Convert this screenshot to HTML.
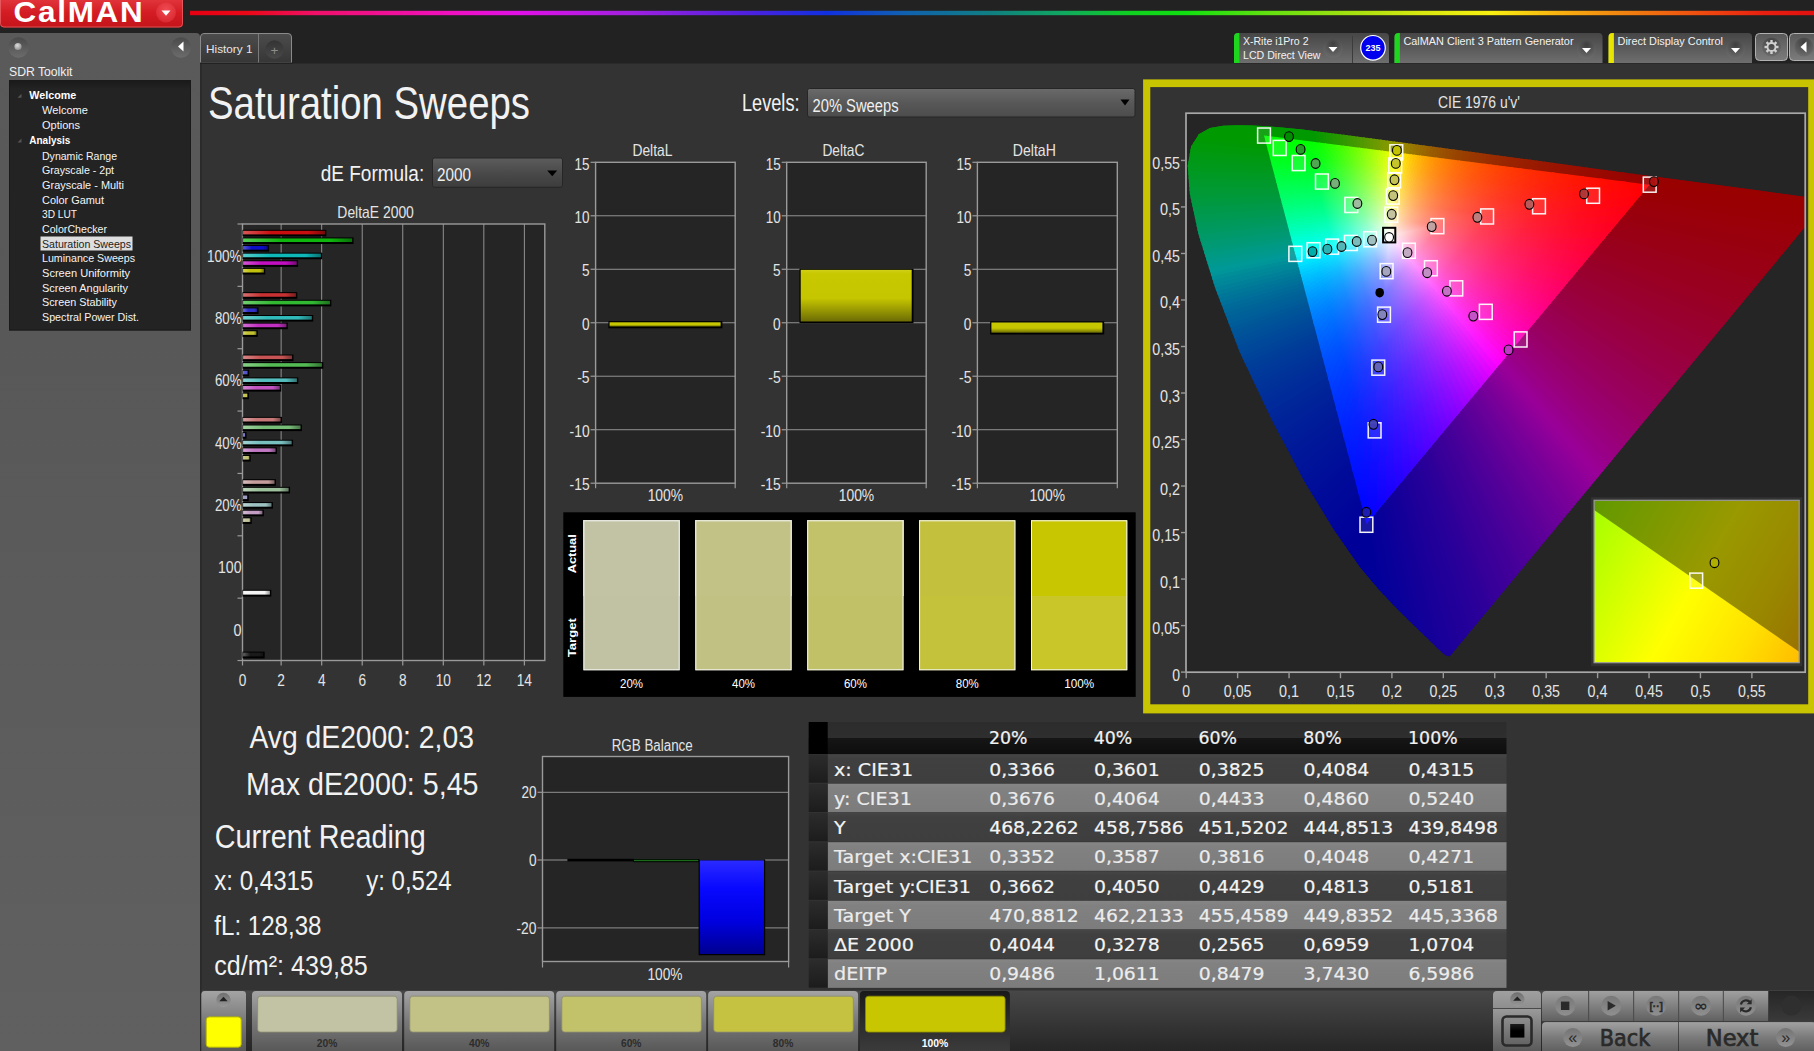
<!DOCTYPE html>
<html lang="en"><head><meta charset="utf-8"><title>CalMAN - Saturation Sweeps</title>
<style>
html,body{margin:0;padding:0;background:#333;overflow:hidden}
body{width:1814px;height:1051px}
svg{display:block;font-family:'Liberation Sans',sans-serif}
text{white-space:pre}
</style></head><body>
<svg width="1814" height="1051" viewBox="0 0 1814 1051">
<defs>
<linearGradient id="rb" x1="0" y1="0" x2="1" y2="0"><stop offset="0" stop-color="#e60012"/><stop offset="0.036" stop-color="#ea0818"/><stop offset="0.078" stop-color="#f0106a"/><stop offset="0.16" stop-color="#f010c0"/><stop offset="0.203" stop-color="#e010e8"/><stop offset="0.272" stop-color="#a020e0"/><stop offset="0.342" stop-color="#5020e0"/><stop offset="0.392" stop-color="#1030e0"/><stop offset="0.439" stop-color="#1060b0"/><stop offset="0.495" stop-color="#108080"/><stop offset="0.537" stop-color="#10a860"/><stop offset="0.579" stop-color="#10d020"/><stop offset="0.612" stop-color="#10e010"/><stop offset="0.662" stop-color="#60e010"/><stop offset="0.718" stop-color="#a8e010"/><stop offset="0.759" stop-color="#d8e810"/><stop offset="0.801" stop-color="#f8f010"/><stop offset="0.843" stop-color="#f8b010"/><stop offset="0.885" stop-color="#f08010"/><stop offset="0.927" stop-color="#f05010"/><stop offset="0.968" stop-color="#e82010"/><stop offset="1" stop-color="#e01010"/></linearGradient>
<linearGradient id="cm" x1="0" y1="0" x2="0" y2="1"><stop offset="0" stop-color="#e0343a"/><stop offset="0.45" stop-color="#d41c24"/><stop offset="1" stop-color="#c4141a"/></linearGradient>
<radialGradient id="cmc" cx="0.5" cy="0.35" r="0.7"><stop offset="0" stop-color="#f04a52"/><stop offset="1" stop-color="#d8262e"/></radialGradient>
<linearGradient id="sb" x1="0" y1="0" x2="0" y2="1"><stop offset="0" stop-color="#5a5a5a"/><stop offset="0.3" stop-color="#585858"/><stop offset="1" stop-color="#606060"/></linearGradient>
<linearGradient id="rbtn" x1="0" y1="0" x2="0" y2="1"><stop offset="0" stop-color="#4a4a4a"/><stop offset="1" stop-color="#6c6c6c"/></linearGradient>
<radialGradient id="orb" cx="0.4" cy="0.35" r="0.7"><stop offset="0" stop-color="#dddddd"/><stop offset="1" stop-color="#8a8a8a"/></radialGradient>
<linearGradient id="tbx" x1="0" y1="0" x2="0" y2="1"><stop offset="0" stop-color="#1a1a1a"/><stop offset="1" stop-color="#232323"/></linearGradient>
<linearGradient id="tab" x1="0" y1="0" x2="0" y2="1"><stop offset="0" stop-color="#4c4c4c"/><stop offset="1" stop-color="#363636"/></linearGradient>
<linearGradient id="plusc" x1="0" y1="0" x2="0" y2="1"><stop offset="0" stop-color="#343434"/><stop offset="1" stop-color="#484848"/></linearGradient>
<linearGradient id="dev" x1="0" y1="0" x2="0" y2="1"><stop offset="0" stop-color="#464646"/><stop offset="1" stop-color="#6e6e6e"/></linearGradient>
<radialGradient id="dd" cx="0.5" cy="0.25" r="0.8"><stop offset="0" stop-color="#3e3e3e"/><stop offset="1" stop-color="#707070"/></radialGradient>
<linearGradient id="gbtn" x1="0" y1="0" x2="0" y2="1"><stop offset="0" stop-color="#585858"/><stop offset="1" stop-color="#7c7c7c"/></linearGradient>
<linearGradient id="ddl" x1="0" y1="0" x2="0" y2="1"><stop offset="0" stop-color="#5c5c5c"/><stop offset="0.5" stop-color="#4a4a4a"/><stop offset="1" stop-color="#3c3c3c"/></linearGradient>
<linearGradient id="ddl2" x1="0" y1="0" x2="0" y2="1"><stop offset="0" stop-color="#6a6a6a"/><stop offset="0.5" stop-color="#585858"/><stop offset="1" stop-color="#4c4c4c"/></linearGradient>
<linearGradient id="hb1" x1="0" y1="0" x2="1" y2="0"><stop offset="0" stop-color="#d85656"/><stop offset="0.35" stop-color="#c80e0e"/><stop offset="0.8" stop-color="#c80e0e"/><stop offset="1" stop-color="#7c0909"/></linearGradient>
<linearGradient id="hb2" x1="0" y1="0" x2="1" y2="0"><stop offset="0" stop-color="#56cc56"/><stop offset="0.35" stop-color="#0eb60e"/><stop offset="0.8" stop-color="#0eb60e"/><stop offset="1" stop-color="#097109"/></linearGradient>
<linearGradient id="hb3" x1="0" y1="0" x2="1" y2="0"><stop offset="0" stop-color="#5656d8"/><stop offset="0.35" stop-color="#0e0ec8"/><stop offset="0.8" stop-color="#0e0ec8"/><stop offset="1" stop-color="#09097c"/></linearGradient>
<linearGradient id="hb4" x1="0" y1="0" x2="1" y2="0"><stop offset="0" stop-color="#56cdcd"/><stop offset="0.35" stop-color="#0eb8b8"/><stop offset="0.8" stop-color="#0eb8b8"/><stop offset="1" stop-color="#097272"/></linearGradient>
<linearGradient id="hb5" x1="0" y1="0" x2="1" y2="0"><stop offset="0" stop-color="#d356d3"/><stop offset="0.35" stop-color="#c00ec0"/><stop offset="0.8" stop-color="#c00ec0"/><stop offset="1" stop-color="#770977"/></linearGradient>
<linearGradient id="hb6" x1="0" y1="0" x2="1" y2="0"><stop offset="0" stop-color="#d4d456"/><stop offset="0.35" stop-color="#c2c20e"/><stop offset="0.8" stop-color="#c2c20e"/><stop offset="1" stop-color="#787809"/></linearGradient>
<linearGradient id="hb7" x1="0" y1="0" x2="1" y2="0"><stop offset="0" stop-color="#d86f6f"/><stop offset="0.35" stop-color="#c73131"/><stop offset="0.8" stop-color="#c73131"/><stop offset="1" stop-color="#7b1e1e"/></linearGradient>
<linearGradient id="hb8" x1="0" y1="0" x2="1" y2="0"><stop offset="0" stop-color="#6fce6f"/><stop offset="0.35" stop-color="#31b931"/><stop offset="0.8" stop-color="#31b931"/><stop offset="1" stop-color="#1e731e"/></linearGradient>
<linearGradient id="hb9" x1="0" y1="0" x2="1" y2="0"><stop offset="0" stop-color="#6f6fd8"/><stop offset="0.35" stop-color="#3131c7"/><stop offset="0.8" stop-color="#3131c7"/><stop offset="1" stop-color="#1e1e7b"/></linearGradient>
<linearGradient id="hb10" x1="0" y1="0" x2="1" y2="0"><stop offset="0" stop-color="#6fcfcf"/><stop offset="0.35" stop-color="#31baba"/><stop offset="0.8" stop-color="#31baba"/><stop offset="1" stop-color="#1e7373"/></linearGradient>
<linearGradient id="hb11" x1="0" y1="0" x2="1" y2="0"><stop offset="0" stop-color="#d46fd4"/><stop offset="0.35" stop-color="#c131c1"/><stop offset="0.8" stop-color="#c131c1"/><stop offset="1" stop-color="#781e78"/></linearGradient>
<linearGradient id="hb12" x1="0" y1="0" x2="1" y2="0"><stop offset="0" stop-color="#d4d46f"/><stop offset="0.35" stop-color="#c2c231"/><stop offset="0.8" stop-color="#c2c231"/><stop offset="1" stop-color="#78781e"/></linearGradient>
<linearGradient id="hb13" x1="0" y1="0" x2="1" y2="0"><stop offset="0" stop-color="#d78787"/><stop offset="0.35" stop-color="#c65454"/><stop offset="0.8" stop-color="#c65454"/><stop offset="1" stop-color="#7b3434"/></linearGradient>
<linearGradient id="hb14" x1="0" y1="0" x2="1" y2="0"><stop offset="0" stop-color="#87cf87"/><stop offset="0.35" stop-color="#54bb54"/><stop offset="0.8" stop-color="#54bb54"/><stop offset="1" stop-color="#347434"/></linearGradient>
<linearGradient id="hb15" x1="0" y1="0" x2="1" y2="0"><stop offset="0" stop-color="#8787d7"/><stop offset="0.35" stop-color="#5454c6"/><stop offset="0.8" stop-color="#5454c6"/><stop offset="1" stop-color="#34347b"/></linearGradient>
<linearGradient id="hb16" x1="0" y1="0" x2="1" y2="0"><stop offset="0" stop-color="#87d1d1"/><stop offset="0.35" stop-color="#54bdbd"/><stop offset="0.8" stop-color="#54bdbd"/><stop offset="1" stop-color="#347575"/></linearGradient>
<linearGradient id="hb17" x1="0" y1="0" x2="1" y2="0"><stop offset="0" stop-color="#d487d4"/><stop offset="0.35" stop-color="#c254c2"/><stop offset="0.8" stop-color="#c254c2"/><stop offset="1" stop-color="#783478"/></linearGradient>
<linearGradient id="hb18" x1="0" y1="0" x2="1" y2="0"><stop offset="0" stop-color="#d5d587"/><stop offset="0.35" stop-color="#c3c354"/><stop offset="0.8" stop-color="#c3c354"/><stop offset="1" stop-color="#797934"/></linearGradient>
<linearGradient id="hb19" x1="0" y1="0" x2="1" y2="0"><stop offset="0" stop-color="#d7a0a0"/><stop offset="0.35" stop-color="#c67878"/><stop offset="0.8" stop-color="#c67878"/><stop offset="1" stop-color="#7b4a4a"/></linearGradient>
<linearGradient id="hb20" x1="0" y1="0" x2="1" y2="0"><stop offset="0" stop-color="#a0d2a0"/><stop offset="0.35" stop-color="#78be78"/><stop offset="0.8" stop-color="#78be78"/><stop offset="1" stop-color="#4a764a"/></linearGradient>
<linearGradient id="hb21" x1="0" y1="0" x2="1" y2="0"><stop offset="0" stop-color="#a0a0d7"/><stop offset="0.35" stop-color="#7878c6"/><stop offset="0.8" stop-color="#7878c6"/><stop offset="1" stop-color="#4a4a7b"/></linearGradient>
<linearGradient id="hb22" x1="0" y1="0" x2="1" y2="0"><stop offset="0" stop-color="#a0d2d2"/><stop offset="0.35" stop-color="#78bfbf"/><stop offset="0.8" stop-color="#78bfbf"/><stop offset="1" stop-color="#4a7676"/></linearGradient>
<linearGradient id="hb23" x1="0" y1="0" x2="1" y2="0"><stop offset="0" stop-color="#d4a0d4"/><stop offset="0.35" stop-color="#c278c2"/><stop offset="0.8" stop-color="#c278c2"/><stop offset="1" stop-color="#784a78"/></linearGradient>
<linearGradient id="hb24" x1="0" y1="0" x2="1" y2="0"><stop offset="0" stop-color="#d5d5a0"/><stop offset="0.35" stop-color="#c3c378"/><stop offset="0.8" stop-color="#c3c378"/><stop offset="1" stop-color="#79794a"/></linearGradient>
<linearGradient id="hb25" x1="0" y1="0" x2="1" y2="0"><stop offset="0" stop-color="#d6baba"/><stop offset="0.35" stop-color="#c59d9d"/><stop offset="0.8" stop-color="#c59d9d"/><stop offset="1" stop-color="#7a6161"/></linearGradient>
<linearGradient id="hb26" x1="0" y1="0" x2="1" y2="0"><stop offset="0" stop-color="#bad4ba"/><stop offset="0.35" stop-color="#9dc19d"/><stop offset="0.8" stop-color="#9dc19d"/><stop offset="1" stop-color="#617861"/></linearGradient>
<linearGradient id="hb27" x1="0" y1="0" x2="1" y2="0"><stop offset="0" stop-color="#babad6"/><stop offset="0.35" stop-color="#9d9dc5"/><stop offset="0.8" stop-color="#9d9dc5"/><stop offset="1" stop-color="#61617a"/></linearGradient>
<linearGradient id="hb28" x1="0" y1="0" x2="1" y2="0"><stop offset="0" stop-color="#bad4d4"/><stop offset="0.35" stop-color="#9dc1c1"/><stop offset="0.8" stop-color="#9dc1c1"/><stop offset="1" stop-color="#617878"/></linearGradient>
<linearGradient id="hb29" x1="0" y1="0" x2="1" y2="0"><stop offset="0" stop-color="#d5bad5"/><stop offset="0.35" stop-color="#c39dc3"/><stop offset="0.8" stop-color="#c39dc3"/><stop offset="1" stop-color="#796179"/></linearGradient>
<linearGradient id="hb30" x1="0" y1="0" x2="1" y2="0"><stop offset="0" stop-color="#d6d6ba"/><stop offset="0.35" stop-color="#c4c49d"/><stop offset="0.8" stop-color="#c4c49d"/><stop offset="1" stop-color="#7a7a61"/></linearGradient>
<linearGradient id="hb31" x1="0" y1="0" x2="1" y2="0"><stop offset="0" stop-color="#f8f8f8"/><stop offset="0.35" stop-color="#f5f5f5"/><stop offset="0.8" stop-color="#f5f5f5"/><stop offset="1" stop-color="#989898"/></linearGradient>
<linearGradient id="hb32" x1="0" y1="0" x2="1" y2="0"><stop offset="0" stop-color="#5f5f5f"/><stop offset="0.35" stop-color="#1a1a1a"/><stop offset="0.8" stop-color="#1a1a1a"/><stop offset="1" stop-color="#101010"/></linearGradient>
<linearGradient id="ybar" x1="0" y1="0" x2="0" y2="1"><stop offset="0" stop-color="#d0d018"/><stop offset="0.08" stop-color="#c8c800"/><stop offset="0.55" stop-color="#c6c600"/><stop offset="1" stop-color="#6c6c06"/></linearGradient>
<linearGradient id="bbar" x1="0" y1="0" x2="0" y2="1"><stop offset="0" stop-color="#2a2aff"/><stop offset="0.3" stop-color="#0808ff"/><stop offset="0.65" stop-color="#0000e0"/><stop offset="1" stop-color="#000090"/></linearGradient>
<linearGradient id="thd" x1="0" y1="0" x2="0" y2="1"><stop offset="0" stop-color="#2c2c2c"/><stop offset="0.5" stop-color="#2e2e2e"/><stop offset="0.5" stop-color="#161616"/><stop offset="1" stop-color="#0e0e0e"/></linearGradient>
<linearGradient id="tlc" x1="0" y1="0" x2="0" y2="1"><stop offset="0" stop-color="#2c2c2c"/><stop offset="1" stop-color="#1c1c1c"/></linearGradient>
<linearGradient id="trd" x1="0" y1="0" x2="0" y2="1"><stop offset="0" stop-color="#464646"/><stop offset="0.15" stop-color="#404040"/><stop offset="1" stop-color="#3e3e3e"/></linearGradient>
<linearGradient id="trl" x1="0" y1="0" x2="0" y2="1"><stop offset="0" stop-color="#868686"/><stop offset="0.15" stop-color="#818181"/><stop offset="1" stop-color="#7c7c7c"/></linearGradient>
<clipPath id="hs"><polygon points="1450.3,655.7 1449.2,656.3 1445.6,655.4 1439.3,650.1 1427.6,638.5 1408.4,620.0 1395.3,607.1 1379.3,590.1 1360.0,567.0 1334.4,530.6 1304.2,481.0 1271.4,419.1 1239.8,352.3 1215.2,288.1 1198.4,234.0 1189.8,193.8 1187.7,165.8 1191.0,146.6 1198.8,134.3 1210.0,128.1 1223.2,125.8 1237.7,125.2 1252.4,125.5 1267.7,126.3 1284.2,127.7 1302.1,129.6 1343.7,134.7 1394.6,141.4 1456.0,149.7 1527.2,159.3 1601.2,169.4 1668.7,178.4 1721.3,185.6 1758.6,190.6 1785.9,194.3 1803.8,196.7 1814.5,198.2 1823.8,199.4 1827.4,199.9"/></clipPath>
<clipPath id="tri"><polygon points="1649.7,184.7 1264.0,135.5 1366.6,524.2"/></clipPath>
<clipPath id="plot"><rect x="1186.0" y="113.2" width="619.20" height="559.00"/></clipPath>
<clipPath id="hpG"><polygon points="3570.9,-2119.5 -554.5,2828.4 1749.6,4749.5 5875.1,-198.3"/></clipPath>
<clipPath id="hpR"><polygon points="905.2,-2824.1 1776.2,3496.1 -1195.7,3905.7 -2066.7,-2414.5"/></clipPath>
<clipPath id="hpB"><polygon points="4631.8,512.7 -1667.2,-180.2 -1339.2,-3162.3 4959.8,-2469.3"/></clipPath>
<linearGradient id="i0" gradientUnits="userSpaceOnUse" x1="1389.7" y1="235.4" x2="1614.0" y2="235.4"><stop offset="0.000" stop-color="#ffffff"/><stop offset="0.194" stop-color="#ff798e"/><stop offset="0.388" stop-color="#ff405e"/><stop offset="0.583" stop-color="#ff2144"/><stop offset="0.777" stop-color="#ff0e33"/><stop offset="0.971" stop-color="#ff0028"/></linearGradient>
<linearGradient id="i1" gradientUnits="userSpaceOnUse" x1="1389.7" y1="235.4" x2="1607.6" y2="243.0"><stop offset="0.000" stop-color="#ffffff"/><stop offset="0.194" stop-color="#ff7a93"/><stop offset="0.388" stop-color="#ff4164"/><stop offset="0.583" stop-color="#ff224b"/><stop offset="0.777" stop-color="#ff0e3a"/><stop offset="0.971" stop-color="#ff002f"/></linearGradient>
<linearGradient id="i2" gradientUnits="userSpaceOnUse" x1="1389.7" y1="235.4" x2="1601.6" y2="250.2"><stop offset="0.000" stop-color="#ffffff"/><stop offset="0.194" stop-color="#ff7c98"/><stop offset="0.388" stop-color="#ff436a"/><stop offset="0.583" stop-color="#ff2351"/><stop offset="0.777" stop-color="#ff0e41"/><stop offset="0.971" stop-color="#ff0036"/></linearGradient>
<linearGradient id="i3" gradientUnits="userSpaceOnUse" x1="1389.7" y1="235.4" x2="1595.9" y2="257.1"><stop offset="0.000" stop-color="#ffffff"/><stop offset="0.194" stop-color="#ff7d9c"/><stop offset="0.388" stop-color="#ff4471"/><stop offset="0.583" stop-color="#ff2358"/><stop offset="0.777" stop-color="#ff0f48"/><stop offset="0.971" stop-color="#ff003d"/></linearGradient>
<linearGradient id="i4" gradientUnits="userSpaceOnUse" x1="1389.7" y1="235.4" x2="1590.4" y2="263.6"><stop offset="0.000" stop-color="#ffffff"/><stop offset="0.194" stop-color="#ff7fa1"/><stop offset="0.388" stop-color="#ff4577"/><stop offset="0.583" stop-color="#ff245e"/><stop offset="0.777" stop-color="#ff0f4f"/><stop offset="0.971" stop-color="#ff0044"/></linearGradient>
<linearGradient id="i5" gradientUnits="userSpaceOnUse" x1="1389.7" y1="235.4" x2="1585.2" y2="269.9"><stop offset="0.000" stop-color="#ffffff"/><stop offset="0.194" stop-color="#ff80a6"/><stop offset="0.388" stop-color="#ff467c"/><stop offset="0.583" stop-color="#ff2565"/><stop offset="0.777" stop-color="#ff0f56"/><stop offset="0.971" stop-color="#ff004b"/></linearGradient>
<linearGradient id="i6" gradientUnits="userSpaceOnUse" x1="1389.7" y1="235.4" x2="1580.2" y2="275.9"><stop offset="0.000" stop-color="#ffffff"/><stop offset="0.194" stop-color="#ff82aa"/><stop offset="0.388" stop-color="#ff4782"/><stop offset="0.583" stop-color="#ff266b"/><stop offset="0.777" stop-color="#ff105c"/><stop offset="0.971" stop-color="#ff0052"/></linearGradient>
<linearGradient id="i7" gradientUnits="userSpaceOnUse" x1="1389.7" y1="235.4" x2="1575.4" y2="281.7"><stop offset="0.000" stop-color="#ffffff"/><stop offset="0.194" stop-color="#ff83af"/><stop offset="0.388" stop-color="#ff4988"/><stop offset="0.583" stop-color="#ff2672"/><stop offset="0.777" stop-color="#ff1063"/><stop offset="0.971" stop-color="#ff0059"/></linearGradient>
<linearGradient id="i8" gradientUnits="userSpaceOnUse" x1="1389.7" y1="235.4" x2="1570.7" y2="287.3"><stop offset="0.000" stop-color="#ffffff"/><stop offset="0.194" stop-color="#ff85b3"/><stop offset="0.388" stop-color="#ff4a8e"/><stop offset="0.583" stop-color="#ff2779"/><stop offset="0.777" stop-color="#ff106a"/><stop offset="0.971" stop-color="#ff0060"/></linearGradient>
<linearGradient id="i9" gradientUnits="userSpaceOnUse" x1="1389.7" y1="235.4" x2="1566.1" y2="292.8"><stop offset="0.000" stop-color="#ffffff"/><stop offset="0.194" stop-color="#ff86b7"/><stop offset="0.388" stop-color="#ff4b94"/><stop offset="0.583" stop-color="#ff287f"/><stop offset="0.777" stop-color="#ff1171"/><stop offset="0.971" stop-color="#ff0068"/></linearGradient>
<linearGradient id="i10" gradientUnits="userSpaceOnUse" x1="1389.7" y1="235.4" x2="1561.7" y2="298.1"><stop offset="0.000" stop-color="#ffffff"/><stop offset="0.194" stop-color="#ff88bc"/><stop offset="0.388" stop-color="#ff4c9a"/><stop offset="0.583" stop-color="#ff2986"/><stop offset="0.777" stop-color="#ff1179"/><stop offset="0.971" stop-color="#ff006f"/></linearGradient>
<linearGradient id="i11" gradientUnits="userSpaceOnUse" x1="1389.7" y1="235.4" x2="1557.4" y2="303.2"><stop offset="0.000" stop-color="#ffffff"/><stop offset="0.194" stop-color="#ff89c0"/><stop offset="0.388" stop-color="#ff4da0"/><stop offset="0.583" stop-color="#ff298d"/><stop offset="0.777" stop-color="#ff1180"/><stop offset="0.971" stop-color="#ff0077"/></linearGradient>
<linearGradient id="i12" gradientUnits="userSpaceOnUse" x1="1389.7" y1="235.4" x2="1553.2" y2="308.2"><stop offset="0.000" stop-color="#ffffff"/><stop offset="0.194" stop-color="#ff8ac4"/><stop offset="0.388" stop-color="#ff4fa6"/><stop offset="0.583" stop-color="#ff2a94"/><stop offset="0.777" stop-color="#ff1287"/><stop offset="0.971" stop-color="#ff007e"/></linearGradient>
<linearGradient id="i13" gradientUnits="userSpaceOnUse" x1="1389.7" y1="235.4" x2="1549.1" y2="313.2"><stop offset="0.000" stop-color="#ffffff"/><stop offset="0.194" stop-color="#ff8cc9"/><stop offset="0.388" stop-color="#ff50ac"/><stop offset="0.583" stop-color="#ff2b9b"/><stop offset="0.777" stop-color="#ff128f"/><stop offset="0.971" stop-color="#ff0086"/></linearGradient>
<linearGradient id="i14" gradientUnits="userSpaceOnUse" x1="1389.7" y1="235.4" x2="1545.1" y2="318.0"><stop offset="0.000" stop-color="#ffffff"/><stop offset="0.194" stop-color="#ff8dcd"/><stop offset="0.388" stop-color="#ff51b2"/><stop offset="0.583" stop-color="#ff2ca2"/><stop offset="0.777" stop-color="#ff1297"/><stop offset="0.971" stop-color="#ff008e"/></linearGradient>
<linearGradient id="i15" gradientUnits="userSpaceOnUse" x1="1389.7" y1="235.4" x2="1541.1" y2="322.8"><stop offset="0.000" stop-color="#ffffff"/><stop offset="0.194" stop-color="#ff8fd1"/><stop offset="0.388" stop-color="#ff52b8"/><stop offset="0.583" stop-color="#ff2da9"/><stop offset="0.777" stop-color="#ff139f"/><stop offset="0.971" stop-color="#ff0097"/></linearGradient>
<linearGradient id="i16" gradientUnits="userSpaceOnUse" x1="1389.7" y1="235.4" x2="1537.1" y2="327.6"><stop offset="0.000" stop-color="#ffffff"/><stop offset="0.194" stop-color="#ff90d6"/><stop offset="0.388" stop-color="#ff53bf"/><stop offset="0.583" stop-color="#ff2db1"/><stop offset="0.777" stop-color="#ff13a7"/><stop offset="0.971" stop-color="#ff00a0"/></linearGradient>
<linearGradient id="i17" gradientUnits="userSpaceOnUse" x1="1389.7" y1="235.4" x2="1533.2" y2="332.3"><stop offset="0.000" stop-color="#ffffff"/><stop offset="0.194" stop-color="#ff91da"/><stop offset="0.388" stop-color="#ff55c5"/><stop offset="0.583" stop-color="#ff2eb8"/><stop offset="0.777" stop-color="#ff14af"/><stop offset="0.971" stop-color="#ff00a9"/></linearGradient>
<linearGradient id="i18" gradientUnits="userSpaceOnUse" x1="1389.7" y1="235.4" x2="1529.3" y2="336.9"><stop offset="0.000" stop-color="#ffffff"/><stop offset="0.194" stop-color="#ff93de"/><stop offset="0.388" stop-color="#ff56cc"/><stop offset="0.583" stop-color="#ff2fc0"/><stop offset="0.777" stop-color="#ff14b8"/><stop offset="0.971" stop-color="#ff00b2"/></linearGradient>
<linearGradient id="i19" gradientUnits="userSpaceOnUse" x1="1389.7" y1="235.4" x2="1525.5" y2="341.5"><stop offset="0.000" stop-color="#ffffff"/><stop offset="0.194" stop-color="#ff94e3"/><stop offset="0.388" stop-color="#ff57d3"/><stop offset="0.583" stop-color="#ff30c9"/><stop offset="0.777" stop-color="#ff14c1"/><stop offset="0.971" stop-color="#ff00bc"/></linearGradient>
<linearGradient id="i20" gradientUnits="userSpaceOnUse" x1="1389.7" y1="235.4" x2="1521.6" y2="346.2"><stop offset="0.000" stop-color="#ffffff"/><stop offset="0.194" stop-color="#ff96e8"/><stop offset="0.388" stop-color="#ff59da"/><stop offset="0.583" stop-color="#ff31d1"/><stop offset="0.777" stop-color="#ff15cb"/><stop offset="0.971" stop-color="#ff00c6"/></linearGradient>
<linearGradient id="i21" gradientUnits="userSpaceOnUse" x1="1389.7" y1="235.4" x2="1517.8" y2="350.8"><stop offset="0.000" stop-color="#ffffff"/><stop offset="0.194" stop-color="#ff97ec"/><stop offset="0.388" stop-color="#ff5ae1"/><stop offset="0.583" stop-color="#ff32da"/><stop offset="0.777" stop-color="#ff15d5"/><stop offset="0.971" stop-color="#ff00d1"/></linearGradient>
<linearGradient id="i22" gradientUnits="userSpaceOnUse" x1="1389.7" y1="235.4" x2="1513.9" y2="355.4"><stop offset="0.000" stop-color="#ffffff"/><stop offset="0.194" stop-color="#ff99f1"/><stop offset="0.388" stop-color="#ff5ce9"/><stop offset="0.583" stop-color="#ff33e3"/><stop offset="0.777" stop-color="#ff16df"/><stop offset="0.971" stop-color="#ff00dc"/></linearGradient>
<linearGradient id="i23" gradientUnits="userSpaceOnUse" x1="1389.7" y1="235.4" x2="1510.0" y2="360.1"><stop offset="0.000" stop-color="#ffffff"/><stop offset="0.194" stop-color="#ff9bf6"/><stop offset="0.388" stop-color="#ff5df1"/><stop offset="0.583" stop-color="#ff34ed"/><stop offset="0.777" stop-color="#ff16ea"/><stop offset="0.971" stop-color="#ff00e8"/></linearGradient>
<linearGradient id="i24" gradientUnits="userSpaceOnUse" x1="1389.7" y1="235.4" x2="1506.1" y2="364.8"><stop offset="0.000" stop-color="#ffffff"/><stop offset="0.194" stop-color="#ff9cfb"/><stop offset="0.388" stop-color="#ff5ff9"/><stop offset="0.583" stop-color="#ff35f7"/><stop offset="0.777" stop-color="#ff17f6"/><stop offset="0.971" stop-color="#ff00f5"/></linearGradient>
<linearGradient id="i25" gradientUnits="userSpaceOnUse" x1="1389.7" y1="235.4" x2="1502.2" y2="369.5"><stop offset="0.000" stop-color="#ffffff"/><stop offset="0.194" stop-color="#fd9dff"/><stop offset="0.388" stop-color="#fd60ff"/><stop offset="0.583" stop-color="#fc36ff"/><stop offset="0.777" stop-color="#fc17ff"/><stop offset="0.971" stop-color="#fb00ff"/></linearGradient>
<linearGradient id="i26" gradientUnits="userSpaceOnUse" x1="1389.7" y1="235.4" x2="1498.2" y2="374.3"><stop offset="0.000" stop-color="#ffffff"/><stop offset="0.194" stop-color="#f89cff"/><stop offset="0.388" stop-color="#f45eff"/><stop offset="0.583" stop-color="#f135ff"/><stop offset="0.777" stop-color="#ef17ff"/><stop offset="0.971" stop-color="#ee00ff"/></linearGradient>
<linearGradient id="i27" gradientUnits="userSpaceOnUse" x1="1389.7" y1="235.4" x2="1494.1" y2="379.2"><stop offset="0.000" stop-color="#ffffff"/><stop offset="0.194" stop-color="#f39aff"/><stop offset="0.388" stop-color="#ec5dff"/><stop offset="0.583" stop-color="#e734ff"/><stop offset="0.777" stop-color="#e316ff"/><stop offset="0.971" stop-color="#e100ff"/></linearGradient>
<linearGradient id="i28" gradientUnits="userSpaceOnUse" x1="1389.7" y1="235.4" x2="1490.0" y2="384.1"><stop offset="0.000" stop-color="#ffffff"/><stop offset="0.194" stop-color="#ee99ff"/><stop offset="0.388" stop-color="#e35bff"/><stop offset="0.583" stop-color="#dd33ff"/><stop offset="0.777" stop-color="#d816ff"/><stop offset="0.971" stop-color="#d400ff"/></linearGradient>
<linearGradient id="i29" gradientUnits="userSpaceOnUse" x1="1389.7" y1="235.4" x2="1485.8" y2="389.2"><stop offset="0.000" stop-color="#ffffff"/><stop offset="0.194" stop-color="#e897ff"/><stop offset="0.388" stop-color="#db5aff"/><stop offset="0.583" stop-color="#d332ff"/><stop offset="0.777" stop-color="#cc15ff"/><stop offset="0.971" stop-color="#c800ff"/></linearGradient>
<linearGradient id="i30" gradientUnits="userSpaceOnUse" x1="1389.7" y1="235.4" x2="1481.4" y2="394.4"><stop offset="0.000" stop-color="#ffffff"/><stop offset="0.194" stop-color="#e396ff"/><stop offset="0.388" stop-color="#d359ff"/><stop offset="0.583" stop-color="#c931ff"/><stop offset="0.777" stop-color="#c115ff"/><stop offset="0.971" stop-color="#bc00ff"/></linearGradient>
<linearGradient id="i31" gradientUnits="userSpaceOnUse" x1="1389.7" y1="235.4" x2="1477.0" y2="399.7"><stop offset="0.000" stop-color="#ffffff"/><stop offset="0.194" stop-color="#de94ff"/><stop offset="0.388" stop-color="#cb57ff"/><stop offset="0.583" stop-color="#bf30ff"/><stop offset="0.777" stop-color="#b714ff"/><stop offset="0.971" stop-color="#b000ff"/></linearGradient>
<linearGradient id="i32" gradientUnits="userSpaceOnUse" x1="1389.7" y1="235.4" x2="1472.4" y2="405.1"><stop offset="0.000" stop-color="#ffffff"/><stop offset="0.194" stop-color="#d992ff"/><stop offset="0.388" stop-color="#c356ff"/><stop offset="0.583" stop-color="#b52fff"/><stop offset="0.777" stop-color="#ac14ff"/><stop offset="0.971" stop-color="#a500ff"/></linearGradient>
<linearGradient id="i33" gradientUnits="userSpaceOnUse" x1="1389.7" y1="235.4" x2="1467.7" y2="410.8"><stop offset="0.000" stop-color="#ffffff"/><stop offset="0.194" stop-color="#d391ff"/><stop offset="0.388" stop-color="#bb54ff"/><stop offset="0.583" stop-color="#ac2eff"/><stop offset="0.777" stop-color="#a113ff"/><stop offset="0.971" stop-color="#9a00ff"/></linearGradient>
<linearGradient id="i34" gradientUnits="userSpaceOnUse" x1="1389.7" y1="235.4" x2="1462.9" y2="416.6"><stop offset="0.000" stop-color="#ffffff"/><stop offset="0.194" stop-color="#ce8fff"/><stop offset="0.388" stop-color="#b353ff"/><stop offset="0.583" stop-color="#a22dff"/><stop offset="0.777" stop-color="#9713ff"/><stop offset="0.971" stop-color="#8f00ff"/></linearGradient>
<linearGradient id="i35" gradientUnits="userSpaceOnUse" x1="1389.7" y1="235.4" x2="1457.8" y2="422.7"><stop offset="0.000" stop-color="#ffffff"/><stop offset="0.194" stop-color="#c88eff"/><stop offset="0.388" stop-color="#ab51ff"/><stop offset="0.583" stop-color="#992cff"/><stop offset="0.777" stop-color="#8d12ff"/><stop offset="0.971" stop-color="#8400ff"/></linearGradient>
<linearGradient id="i36" gradientUnits="userSpaceOnUse" x1="1389.7" y1="235.4" x2="1452.6" y2="429.0"><stop offset="0.000" stop-color="#ffffff"/><stop offset="0.194" stop-color="#c38cff"/><stop offset="0.388" stop-color="#a350ff"/><stop offset="0.583" stop-color="#902bff"/><stop offset="0.777" stop-color="#8312ff"/><stop offset="0.971" stop-color="#7900ff"/></linearGradient>
<linearGradient id="i37" gradientUnits="userSpaceOnUse" x1="1389.7" y1="235.4" x2="1447.1" y2="435.6"><stop offset="0.000" stop-color="#ffffff"/><stop offset="0.194" stop-color="#bd8aff"/><stop offset="0.388" stop-color="#9b4fff"/><stop offset="0.583" stop-color="#862aff"/><stop offset="0.777" stop-color="#7812ff"/><stop offset="0.971" stop-color="#6e00ff"/></linearGradient>
<linearGradient id="i38" gradientUnits="userSpaceOnUse" x1="1389.7" y1="235.4" x2="1441.3" y2="442.5"><stop offset="0.000" stop-color="#ffffff"/><stop offset="0.194" stop-color="#b789ff"/><stop offset="0.388" stop-color="#934dff"/><stop offset="0.583" stop-color="#7d29ff"/><stop offset="0.777" stop-color="#6e11ff"/><stop offset="0.971" stop-color="#6400ff"/></linearGradient>
<linearGradient id="i39" gradientUnits="userSpaceOnUse" x1="1389.7" y1="235.4" x2="1435.2" y2="449.8"><stop offset="0.000" stop-color="#ffffff"/><stop offset="0.194" stop-color="#b187ff"/><stop offset="0.388" stop-color="#8a4cff"/><stop offset="0.583" stop-color="#7328ff"/><stop offset="0.777" stop-color="#6411ff"/><stop offset="0.971" stop-color="#5900ff"/></linearGradient>
<linearGradient id="i40" gradientUnits="userSpaceOnUse" x1="1389.7" y1="235.4" x2="1428.8" y2="457.5"><stop offset="0.000" stop-color="#ffffff"/><stop offset="0.194" stop-color="#ab85ff"/><stop offset="0.388" stop-color="#824aff"/><stop offset="0.583" stop-color="#6a27ff"/><stop offset="0.777" stop-color="#5a10ff"/><stop offset="0.971" stop-color="#4f00ff"/></linearGradient>
<linearGradient id="i41" gradientUnits="userSpaceOnUse" x1="1389.7" y1="235.4" x2="1422.0" y2="465.6"><stop offset="0.000" stop-color="#ffffff"/><stop offset="0.194" stop-color="#a483ff"/><stop offset="0.388" stop-color="#7949ff"/><stop offset="0.583" stop-color="#6026ff"/><stop offset="0.777" stop-color="#5010ff"/><stop offset="0.971" stop-color="#4400ff"/></linearGradient>
<linearGradient id="i42" gradientUnits="userSpaceOnUse" x1="1389.7" y1="235.4" x2="1414.8" y2="474.3"><stop offset="0.000" stop-color="#ffffff"/><stop offset="0.194" stop-color="#9e81ff"/><stop offset="0.388" stop-color="#7147ff"/><stop offset="0.583" stop-color="#5725ff"/><stop offset="0.777" stop-color="#460fff"/><stop offset="0.971" stop-color="#3a00ff"/></linearGradient>
<linearGradient id="i43" gradientUnits="userSpaceOnUse" x1="1389.7" y1="235.4" x2="1407.0" y2="483.6"><stop offset="0.000" stop-color="#ffffff"/><stop offset="0.194" stop-color="#977fff"/><stop offset="0.388" stop-color="#6845ff"/><stop offset="0.583" stop-color="#4d24ff"/><stop offset="0.777" stop-color="#3b0fff"/><stop offset="0.971" stop-color="#2f00ff"/></linearGradient>
<linearGradient id="i44" gradientUnits="userSpaceOnUse" x1="1389.7" y1="235.4" x2="1398.7" y2="493.6"><stop offset="0.000" stop-color="#ffffff"/><stop offset="0.194" stop-color="#907dff"/><stop offset="0.388" stop-color="#5e44ff"/><stop offset="0.583" stop-color="#4323ff"/><stop offset="0.777" stop-color="#310eff"/><stop offset="0.971" stop-color="#2400ff"/></linearGradient>
<linearGradient id="i45" gradientUnits="userSpaceOnUse" x1="1389.7" y1="235.4" x2="1389.7" y2="504.4"><stop offset="0.000" stop-color="#ffffff"/><stop offset="0.194" stop-color="#887bff"/><stop offset="0.388" stop-color="#5542ff"/><stop offset="0.583" stop-color="#3822ff"/><stop offset="0.777" stop-color="#260eff"/><stop offset="0.971" stop-color="#1900ff"/></linearGradient>
<linearGradient id="i46" gradientUnits="userSpaceOnUse" x1="1389.7" y1="235.4" x2="1379.9" y2="516.2"><stop offset="0.000" stop-color="#ffffff"/><stop offset="0.194" stop-color="#8079ff"/><stop offset="0.388" stop-color="#4b40ff"/><stop offset="0.583" stop-color="#2e21ff"/><stop offset="0.777" stop-color="#1b0eff"/><stop offset="0.971" stop-color="#0e00ff"/></linearGradient>
<linearGradient id="i47" gradientUnits="userSpaceOnUse" x1="1389.7" y1="235.4" x2="1369.1" y2="529.1"><stop offset="0.000" stop-color="#ffffff"/><stop offset="0.194" stop-color="#7876ff"/><stop offset="0.388" stop-color="#413eff"/><stop offset="0.583" stop-color="#2320ff"/><stop offset="0.777" stop-color="#100dff"/><stop offset="0.971" stop-color="#0300ff"/></linearGradient>
<linearGradient id="i48" gradientUnits="userSpaceOnUse" x1="1389.7" y1="235.4" x2="1360.6" y2="512.4"><stop offset="0.000" stop-color="#ffffff"/><stop offset="0.194" stop-color="#787cff"/><stop offset="0.388" stop-color="#3f45ff"/><stop offset="0.583" stop-color="#1f26ff"/><stop offset="0.777" stop-color="#0b13ff"/><stop offset="0.971" stop-color="#0006ff"/></linearGradient>
<linearGradient id="i49" gradientUnits="userSpaceOnUse" x1="1389.7" y1="235.4" x2="1354.1" y2="488.2"><stop offset="0.000" stop-color="#ffffff"/><stop offset="0.194" stop-color="#7b84ff"/><stop offset="0.388" stop-color="#404eff"/><stop offset="0.583" stop-color="#1f2fff"/><stop offset="0.777" stop-color="#091bff"/><stop offset="0.971" stop-color="#000dff"/></linearGradient>
<linearGradient id="i50" gradientUnits="userSpaceOnUse" x1="1389.7" y1="235.4" x2="1348.7" y2="467.6"><stop offset="0.000" stop-color="#ffffff"/><stop offset="0.194" stop-color="#7d8bff"/><stop offset="0.388" stop-color="#4156ff"/><stop offset="0.583" stop-color="#1e37ff"/><stop offset="0.777" stop-color="#0823ff"/><stop offset="0.971" stop-color="#0015ff"/></linearGradient>
<linearGradient id="i51" gradientUnits="userSpaceOnUse" x1="1389.7" y1="235.4" x2="1344.1" y2="450.0"><stop offset="0.000" stop-color="#ffffff"/><stop offset="0.194" stop-color="#7f92ff"/><stop offset="0.388" stop-color="#425eff"/><stop offset="0.583" stop-color="#1e3fff"/><stop offset="0.777" stop-color="#062aff"/><stop offset="0.971" stop-color="#001cff"/></linearGradient>
<linearGradient id="i52" gradientUnits="userSpaceOnUse" x1="1389.7" y1="235.4" x2="1340.0" y2="434.6"><stop offset="0.000" stop-color="#ffffff"/><stop offset="0.194" stop-color="#8198ff"/><stop offset="0.388" stop-color="#4365ff"/><stop offset="0.583" stop-color="#1d46ff"/><stop offset="0.777" stop-color="#0432ff"/><stop offset="0.971" stop-color="#0023ff"/></linearGradient>
<linearGradient id="i53" gradientUnits="userSpaceOnUse" x1="1389.7" y1="235.4" x2="1336.4" y2="421.1"><stop offset="0.000" stop-color="#ffffff"/><stop offset="0.194" stop-color="#839eff"/><stop offset="0.388" stop-color="#436cff"/><stop offset="0.583" stop-color="#1d4dff"/><stop offset="0.777" stop-color="#0239ff"/><stop offset="0.971" stop-color="#002aff"/></linearGradient>
<linearGradient id="i54" gradientUnits="userSpaceOnUse" x1="1389.7" y1="235.4" x2="1333.3" y2="409.0"><stop offset="0.000" stop-color="#ffffff"/><stop offset="0.194" stop-color="#85a3ff"/><stop offset="0.388" stop-color="#4472ff"/><stop offset="0.583" stop-color="#1c54ff"/><stop offset="0.777" stop-color="#013fff"/><stop offset="0.971" stop-color="#0030ff"/></linearGradient>
<linearGradient id="i55" gradientUnits="userSpaceOnUse" x1="1389.7" y1="235.4" x2="1330.4" y2="398.2"><stop offset="0.000" stop-color="#ffffff"/><stop offset="0.194" stop-color="#87a8ff"/><stop offset="0.388" stop-color="#4578ff"/><stop offset="0.583" stop-color="#1c5aff"/><stop offset="0.777" stop-color="#0046ff"/><stop offset="0.971" stop-color="#0037ff"/></linearGradient>
<linearGradient id="i56" gradientUnits="userSpaceOnUse" x1="1389.7" y1="235.4" x2="1327.8" y2="388.5"><stop offset="0.000" stop-color="#ffffff"/><stop offset="0.194" stop-color="#88adff"/><stop offset="0.388" stop-color="#467eff"/><stop offset="0.583" stop-color="#1b61ff"/><stop offset="0.777" stop-color="#004cff"/><stop offset="0.971" stop-color="#003dff"/></linearGradient>
<linearGradient id="i57" gradientUnits="userSpaceOnUse" x1="1389.7" y1="235.4" x2="1325.5" y2="379.6"><stop offset="0.000" stop-color="#ffffff"/><stop offset="0.194" stop-color="#8ab1ff"/><stop offset="0.388" stop-color="#4684ff"/><stop offset="0.583" stop-color="#1b67ff"/><stop offset="0.777" stop-color="#0052ff"/><stop offset="0.971" stop-color="#0043ff"/></linearGradient>
<linearGradient id="i58" gradientUnits="userSpaceOnUse" x1="1389.7" y1="235.4" x2="1323.3" y2="371.4"><stop offset="0.000" stop-color="#ffffff"/><stop offset="0.194" stop-color="#8bb5ff"/><stop offset="0.388" stop-color="#4789ff"/><stop offset="0.583" stop-color="#1a6dff"/><stop offset="0.777" stop-color="#0058ff"/><stop offset="0.971" stop-color="#0049ff"/></linearGradient>
<linearGradient id="i59" gradientUnits="userSpaceOnUse" x1="1389.7" y1="235.4" x2="1321.3" y2="363.9"><stop offset="0.000" stop-color="#ffffff"/><stop offset="0.194" stop-color="#8cb9ff"/><stop offset="0.388" stop-color="#488eff"/><stop offset="0.583" stop-color="#1a72ff"/><stop offset="0.777" stop-color="#005eff"/><stop offset="0.971" stop-color="#004fff"/></linearGradient>
<linearGradient id="i60" gradientUnits="userSpaceOnUse" x1="1389.7" y1="235.4" x2="1319.5" y2="356.9"><stop offset="0.000" stop-color="#ffffff"/><stop offset="0.194" stop-color="#8ebcff"/><stop offset="0.388" stop-color="#4894ff"/><stop offset="0.583" stop-color="#1978ff"/><stop offset="0.777" stop-color="#0064ff"/><stop offset="0.971" stop-color="#0055ff"/></linearGradient>
<linearGradient id="i61" gradientUnits="userSpaceOnUse" x1="1389.7" y1="235.4" x2="1317.8" y2="350.5"><stop offset="0.000" stop-color="#ffffff"/><stop offset="0.194" stop-color="#8fc0ff"/><stop offset="0.388" stop-color="#4998ff"/><stop offset="0.583" stop-color="#197dff"/><stop offset="0.777" stop-color="#006aff"/><stop offset="0.971" stop-color="#005bff"/></linearGradient>
<linearGradient id="i62" gradientUnits="userSpaceOnUse" x1="1389.7" y1="235.4" x2="1316.2" y2="344.4"><stop offset="0.000" stop-color="#ffffff"/><stop offset="0.194" stop-color="#90c3ff"/><stop offset="0.388" stop-color="#499dff"/><stop offset="0.583" stop-color="#1983ff"/><stop offset="0.777" stop-color="#006fff"/><stop offset="0.971" stop-color="#0061ff"/></linearGradient>
<linearGradient id="i63" gradientUnits="userSpaceOnUse" x1="1389.7" y1="235.4" x2="1314.7" y2="338.6"><stop offset="0.000" stop-color="#ffffff"/><stop offset="0.194" stop-color="#91c6ff"/><stop offset="0.388" stop-color="#4aa2ff"/><stop offset="0.583" stop-color="#1888ff"/><stop offset="0.777" stop-color="#0075ff"/><stop offset="0.971" stop-color="#0067ff"/></linearGradient>
<linearGradient id="i64" gradientUnits="userSpaceOnUse" x1="1389.7" y1="235.4" x2="1313.2" y2="333.2"><stop offset="0.000" stop-color="#ffffff"/><stop offset="0.194" stop-color="#92c9ff"/><stop offset="0.388" stop-color="#4ba6ff"/><stop offset="0.583" stop-color="#188dff"/><stop offset="0.777" stop-color="#007bff"/><stop offset="0.971" stop-color="#006cff"/></linearGradient>
<linearGradient id="i65" gradientUnits="userSpaceOnUse" x1="1389.7" y1="235.4" x2="1311.9" y2="328.1"><stop offset="0.000" stop-color="#ffffff"/><stop offset="0.194" stop-color="#93ccff"/><stop offset="0.388" stop-color="#4babff"/><stop offset="0.583" stop-color="#1792ff"/><stop offset="0.777" stop-color="#0080ff"/><stop offset="0.971" stop-color="#0072ff"/></linearGradient>
<linearGradient id="i66" gradientUnits="userSpaceOnUse" x1="1389.7" y1="235.4" x2="1310.6" y2="323.2"><stop offset="0.000" stop-color="#ffffff"/><stop offset="0.194" stop-color="#94cfff"/><stop offset="0.388" stop-color="#4cafff"/><stop offset="0.583" stop-color="#1798ff"/><stop offset="0.777" stop-color="#0086ff"/><stop offset="0.971" stop-color="#0078ff"/></linearGradient>
<linearGradient id="i67" gradientUnits="userSpaceOnUse" x1="1389.7" y1="235.4" x2="1309.4" y2="318.6"><stop offset="0.000" stop-color="#ffffff"/><stop offset="0.194" stop-color="#95d2ff"/><stop offset="0.388" stop-color="#4cb3ff"/><stop offset="0.583" stop-color="#179dff"/><stop offset="0.777" stop-color="#008bff"/><stop offset="0.971" stop-color="#007eff"/></linearGradient>
<linearGradient id="i68" gradientUnits="userSpaceOnUse" x1="1389.7" y1="235.4" x2="1308.2" y2="314.1"><stop offset="0.000" stop-color="#ffffff"/><stop offset="0.194" stop-color="#96d5ff"/><stop offset="0.388" stop-color="#4db7ff"/><stop offset="0.583" stop-color="#16a2ff"/><stop offset="0.777" stop-color="#0091ff"/><stop offset="0.971" stop-color="#0084ff"/></linearGradient>
<linearGradient id="i69" gradientUnits="userSpaceOnUse" x1="1389.7" y1="235.4" x2="1307.1" y2="309.8"><stop offset="0.000" stop-color="#ffffff"/><stop offset="0.194" stop-color="#97d8ff"/><stop offset="0.388" stop-color="#4dbcff"/><stop offset="0.583" stop-color="#16a7ff"/><stop offset="0.777" stop-color="#0097ff"/><stop offset="0.971" stop-color="#008aff"/></linearGradient>
<linearGradient id="i70" gradientUnits="userSpaceOnUse" x1="1389.7" y1="235.4" x2="1306.0" y2="305.7"><stop offset="0.000" stop-color="#ffffff"/><stop offset="0.194" stop-color="#98daff"/><stop offset="0.388" stop-color="#4ec0ff"/><stop offset="0.583" stop-color="#16acff"/><stop offset="0.777" stop-color="#009cff"/><stop offset="0.971" stop-color="#0090ff"/></linearGradient>
<linearGradient id="i71" gradientUnits="userSpaceOnUse" x1="1389.7" y1="235.4" x2="1304.9" y2="301.6"><stop offset="0.000" stop-color="#ffffff"/><stop offset="0.194" stop-color="#99ddff"/><stop offset="0.388" stop-color="#4ec4ff"/><stop offset="0.583" stop-color="#15b1ff"/><stop offset="0.777" stop-color="#00a2ff"/><stop offset="0.971" stop-color="#0096ff"/></linearGradient>
<linearGradient id="i72" gradientUnits="userSpaceOnUse" x1="1389.7" y1="235.4" x2="1303.9" y2="297.8"><stop offset="0.000" stop-color="#ffffff"/><stop offset="0.194" stop-color="#9adfff"/><stop offset="0.388" stop-color="#4fc8ff"/><stop offset="0.583" stop-color="#15b6ff"/><stop offset="0.777" stop-color="#00a8ff"/><stop offset="0.971" stop-color="#009cff"/></linearGradient>
<linearGradient id="i73" gradientUnits="userSpaceOnUse" x1="1389.7" y1="235.4" x2="1302.9" y2="294.0"><stop offset="0.000" stop-color="#ffffff"/><stop offset="0.194" stop-color="#9ae2ff"/><stop offset="0.388" stop-color="#4fccff"/><stop offset="0.583" stop-color="#14bbff"/><stop offset="0.777" stop-color="#00aeff"/><stop offset="0.971" stop-color="#00a3ff"/></linearGradient>
<linearGradient id="i74" gradientUnits="userSpaceOnUse" x1="1389.7" y1="235.4" x2="1301.9" y2="290.3"><stop offset="0.000" stop-color="#ffffff"/><stop offset="0.194" stop-color="#9be4ff"/><stop offset="0.388" stop-color="#50d0ff"/><stop offset="0.583" stop-color="#14c0ff"/><stop offset="0.777" stop-color="#00b4ff"/><stop offset="0.971" stop-color="#00a9ff"/></linearGradient>
<linearGradient id="i75" gradientUnits="userSpaceOnUse" x1="1389.7" y1="235.4" x2="1300.9" y2="286.6"><stop offset="0.000" stop-color="#ffffff"/><stop offset="0.194" stop-color="#9ce7ff"/><stop offset="0.388" stop-color="#50d4ff"/><stop offset="0.583" stop-color="#14c6ff"/><stop offset="0.777" stop-color="#00baff"/><stop offset="0.971" stop-color="#00b0ff"/></linearGradient>
<linearGradient id="i76" gradientUnits="userSpaceOnUse" x1="1389.7" y1="235.4" x2="1300.0" y2="283.1"><stop offset="0.000" stop-color="#ffffff"/><stop offset="0.194" stop-color="#9de9ff"/><stop offset="0.388" stop-color="#51d9ff"/><stop offset="0.583" stop-color="#13cbff"/><stop offset="0.777" stop-color="#00c0ff"/><stop offset="0.971" stop-color="#00b7ff"/></linearGradient>
<linearGradient id="i77" gradientUnits="userSpaceOnUse" x1="1389.7" y1="235.4" x2="1299.1" y2="279.6"><stop offset="0.000" stop-color="#ffffff"/><stop offset="0.194" stop-color="#9eecff"/><stop offset="0.388" stop-color="#51ddff"/><stop offset="0.583" stop-color="#13d1ff"/><stop offset="0.777" stop-color="#00c7ff"/><stop offset="0.971" stop-color="#00beff"/></linearGradient>
<linearGradient id="i78" gradientUnits="userSpaceOnUse" x1="1389.7" y1="235.4" x2="1298.2" y2="276.2"><stop offset="0.000" stop-color="#ffffff"/><stop offset="0.194" stop-color="#9feeff"/><stop offset="0.388" stop-color="#52e1ff"/><stop offset="0.583" stop-color="#13d6ff"/><stop offset="0.777" stop-color="#00cdff"/><stop offset="0.971" stop-color="#00c6ff"/></linearGradient>
<linearGradient id="i79" gradientUnits="userSpaceOnUse" x1="1389.7" y1="235.4" x2="1297.3" y2="272.8"><stop offset="0.000" stop-color="#ffffff"/><stop offset="0.194" stop-color="#a0f1ff"/><stop offset="0.388" stop-color="#52e5ff"/><stop offset="0.583" stop-color="#12dcff"/><stop offset="0.777" stop-color="#00d4ff"/><stop offset="0.971" stop-color="#00cdff"/></linearGradient>
<linearGradient id="i80" gradientUnits="userSpaceOnUse" x1="1389.7" y1="235.4" x2="1296.4" y2="269.4"><stop offset="0.000" stop-color="#ffffff"/><stop offset="0.194" stop-color="#a0f3ff"/><stop offset="0.388" stop-color="#53eaff"/><stop offset="0.583" stop-color="#12e2ff"/><stop offset="0.777" stop-color="#00dbff"/><stop offset="0.971" stop-color="#00d5ff"/></linearGradient>
<linearGradient id="i81" gradientUnits="userSpaceOnUse" x1="1389.7" y1="235.4" x2="1295.5" y2="266.0"><stop offset="0.000" stop-color="#ffffff"/><stop offset="0.194" stop-color="#a1f6ff"/><stop offset="0.388" stop-color="#53eeff"/><stop offset="0.583" stop-color="#11e8ff"/><stop offset="0.777" stop-color="#00e3ff"/><stop offset="0.971" stop-color="#00deff"/></linearGradient>
<linearGradient id="i82" gradientUnits="userSpaceOnUse" x1="1389.7" y1="235.4" x2="1294.6" y2="262.7"><stop offset="0.000" stop-color="#ffffff"/><stop offset="0.194" stop-color="#a2f8ff"/><stop offset="0.388" stop-color="#54f3ff"/><stop offset="0.583" stop-color="#11eeff"/><stop offset="0.777" stop-color="#00eaff"/><stop offset="0.971" stop-color="#00e7ff"/></linearGradient>
<linearGradient id="i83" gradientUnits="userSpaceOnUse" x1="1389.7" y1="235.4" x2="1293.7" y2="259.3"><stop offset="0.000" stop-color="#ffffff"/><stop offset="0.194" stop-color="#a3fbff"/><stop offset="0.388" stop-color="#54f8ff"/><stop offset="0.583" stop-color="#10f5ff"/><stop offset="0.777" stop-color="#00f2ff"/><stop offset="0.971" stop-color="#00f0ff"/></linearGradient>
<linearGradient id="i84" gradientUnits="userSpaceOnUse" x1="1389.7" y1="235.4" x2="1292.9" y2="256.0"><stop offset="0.000" stop-color="#ffffff"/><stop offset="0.194" stop-color="#a4feff"/><stop offset="0.388" stop-color="#55fdff"/><stop offset="0.583" stop-color="#10fcff"/><stop offset="0.777" stop-color="#00fbff"/><stop offset="0.971" stop-color="#00faff"/></linearGradient>
<linearGradient id="i85" gradientUnits="userSpaceOnUse" x1="1389.7" y1="235.4" x2="1292.0" y2="252.6"><stop offset="0.000" stop-color="#ffffff"/><stop offset="0.194" stop-color="#a4fffe"/><stop offset="0.388" stop-color="#55fffc"/><stop offset="0.583" stop-color="#0ffffb"/><stop offset="0.777" stop-color="#00fffa"/><stop offset="0.971" stop-color="#00fffa"/></linearGradient>
<linearGradient id="i86" gradientUnits="userSpaceOnUse" x1="1389.7" y1="235.4" x2="1291.1" y2="249.3"><stop offset="0.000" stop-color="#ffffff"/><stop offset="0.194" stop-color="#a3fffb"/><stop offset="0.388" stop-color="#54fff7"/><stop offset="0.583" stop-color="#0efff4"/><stop offset="0.777" stop-color="#00fff2"/><stop offset="0.971" stop-color="#00ffef"/></linearGradient>
<linearGradient id="i87" gradientUnits="userSpaceOnUse" x1="1389.7" y1="235.4" x2="1290.2" y2="245.9"><stop offset="0.000" stop-color="#ffffff"/><stop offset="0.194" stop-color="#a2fff8"/><stop offset="0.388" stop-color="#53fff3"/><stop offset="0.583" stop-color="#0dffed"/><stop offset="0.777" stop-color="#00ffe9"/><stop offset="0.971" stop-color="#00ffe5"/></linearGradient>
<linearGradient id="i88" gradientUnits="userSpaceOnUse" x1="1389.7" y1="235.4" x2="1289.3" y2="242.4"><stop offset="0.000" stop-color="#ffffff"/><stop offset="0.194" stop-color="#a1fff6"/><stop offset="0.388" stop-color="#51ffee"/><stop offset="0.583" stop-color="#0cffe7"/><stop offset="0.777" stop-color="#00ffe0"/><stop offset="0.971" stop-color="#00ffdb"/></linearGradient>
<linearGradient id="i89" gradientUnits="userSpaceOnUse" x1="1389.7" y1="235.4" x2="1288.4" y2="239.0"><stop offset="0.000" stop-color="#ffffff"/><stop offset="0.194" stop-color="#a1fff3"/><stop offset="0.388" stop-color="#50ffe9"/><stop offset="0.583" stop-color="#0bffe0"/><stop offset="0.777" stop-color="#00ffd8"/><stop offset="0.971" stop-color="#00ffd1"/></linearGradient>
<linearGradient id="i90" gradientUnits="userSpaceOnUse" x1="1389.7" y1="235.4" x2="1287.4" y2="235.4"><stop offset="0.000" stop-color="#ffffff"/><stop offset="0.194" stop-color="#a0fff0"/><stop offset="0.388" stop-color="#4fffe4"/><stop offset="0.583" stop-color="#0affd9"/><stop offset="0.777" stop-color="#00ffcf"/><stop offset="0.971" stop-color="#00ffc7"/></linearGradient>
<linearGradient id="i91" gradientUnits="userSpaceOnUse" x1="1389.7" y1="235.4" x2="1286.5" y2="231.8"><stop offset="0.000" stop-color="#ffffff"/><stop offset="0.194" stop-color="#9fffed"/><stop offset="0.388" stop-color="#4effdf"/><stop offset="0.583" stop-color="#09ffd2"/><stop offset="0.777" stop-color="#00ffc7"/><stop offset="0.971" stop-color="#00ffbd"/></linearGradient>
<linearGradient id="i92" gradientUnits="userSpaceOnUse" x1="1389.7" y1="235.4" x2="1285.5" y2="228.1"><stop offset="0.000" stop-color="#ffffff"/><stop offset="0.194" stop-color="#9effeb"/><stop offset="0.388" stop-color="#4dffda"/><stop offset="0.583" stop-color="#09ffcb"/><stop offset="0.777" stop-color="#00ffbf"/><stop offset="0.971" stop-color="#00ffb4"/></linearGradient>
<linearGradient id="i93" gradientUnits="userSpaceOnUse" x1="1389.7" y1="235.4" x2="1284.5" y2="224.4"><stop offset="0.000" stop-color="#ffffff"/><stop offset="0.194" stop-color="#9dffe8"/><stop offset="0.388" stop-color="#4cffd4"/><stop offset="0.583" stop-color="#08ffc4"/><stop offset="0.777" stop-color="#00ffb6"/><stop offset="0.971" stop-color="#00ffaa"/></linearGradient>
<linearGradient id="i94" gradientUnits="userSpaceOnUse" x1="1389.7" y1="235.4" x2="1283.5" y2="220.5"><stop offset="0.000" stop-color="#ffffff"/><stop offset="0.194" stop-color="#9cffe5"/><stop offset="0.388" stop-color="#4bffcf"/><stop offset="0.583" stop-color="#07ffbd"/><stop offset="0.777" stop-color="#00ffae"/><stop offset="0.971" stop-color="#00ffa0"/></linearGradient>
<linearGradient id="i95" gradientUnits="userSpaceOnUse" x1="1389.7" y1="235.4" x2="1282.4" y2="216.5"><stop offset="0.000" stop-color="#ffffff"/><stop offset="0.194" stop-color="#9bffe2"/><stop offset="0.388" stop-color="#4affca"/><stop offset="0.583" stop-color="#06ffb6"/><stop offset="0.777" stop-color="#00ffa5"/><stop offset="0.971" stop-color="#00ff96"/></linearGradient>
<linearGradient id="i96" gradientUnits="userSpaceOnUse" x1="1389.7" y1="235.4" x2="1281.3" y2="212.4"><stop offset="0.000" stop-color="#ffffff"/><stop offset="0.194" stop-color="#9bffdf"/><stop offset="0.388" stop-color="#49ffc5"/><stop offset="0.583" stop-color="#05ffaf"/><stop offset="0.777" stop-color="#00ff9c"/><stop offset="0.971" stop-color="#00ff8d"/></linearGradient>
<linearGradient id="i97" gradientUnits="userSpaceOnUse" x1="1389.7" y1="235.4" x2="1280.2" y2="208.1"><stop offset="0.000" stop-color="#ffffff"/><stop offset="0.194" stop-color="#9affdc"/><stop offset="0.388" stop-color="#48ffbf"/><stop offset="0.583" stop-color="#04ffa7"/><stop offset="0.777" stop-color="#00ff93"/><stop offset="0.971" stop-color="#00ff83"/></linearGradient>
<linearGradient id="i98" gradientUnits="userSpaceOnUse" x1="1389.7" y1="235.4" x2="1279.0" y2="203.7"><stop offset="0.000" stop-color="#ffffff"/><stop offset="0.194" stop-color="#99ffd8"/><stop offset="0.388" stop-color="#46ffb9"/><stop offset="0.583" stop-color="#03ffa0"/><stop offset="0.777" stop-color="#00ff8b"/><stop offset="0.971" stop-color="#00ff78"/></linearGradient>
<linearGradient id="i99" gradientUnits="userSpaceOnUse" x1="1389.7" y1="235.4" x2="1277.8" y2="199.1"><stop offset="0.000" stop-color="#ffffff"/><stop offset="0.194" stop-color="#98ffd5"/><stop offset="0.388" stop-color="#45ffb4"/><stop offset="0.583" stop-color="#02ff98"/><stop offset="0.777" stop-color="#00ff81"/><stop offset="0.971" stop-color="#00ff6e"/></linearGradient>
<linearGradient id="i100" gradientUnits="userSpaceOnUse" x1="1389.7" y1="235.4" x2="1276.6" y2="194.3"><stop offset="0.000" stop-color="#ffffff"/><stop offset="0.194" stop-color="#97ffd2"/><stop offset="0.388" stop-color="#44ffae"/><stop offset="0.583" stop-color="#01ff90"/><stop offset="0.777" stop-color="#00ff78"/><stop offset="0.971" stop-color="#00ff64"/></linearGradient>
<linearGradient id="i101" gradientUnits="userSpaceOnUse" x1="1389.7" y1="235.4" x2="1275.2" y2="189.2"><stop offset="0.000" stop-color="#ffffff"/><stop offset="0.194" stop-color="#95ffce"/><stop offset="0.388" stop-color="#42ffa7"/><stop offset="0.583" stop-color="#00ff88"/><stop offset="0.777" stop-color="#00ff6f"/><stop offset="0.971" stop-color="#00ff59"/></linearGradient>
<linearGradient id="i102" gradientUnits="userSpaceOnUse" x1="1389.7" y1="235.4" x2="1273.8" y2="183.8"><stop offset="0.000" stop-color="#ffffff"/><stop offset="0.194" stop-color="#94ffca"/><stop offset="0.388" stop-color="#41ffa1"/><stop offset="0.583" stop-color="#00ff80"/><stop offset="0.777" stop-color="#00ff65"/><stop offset="0.971" stop-color="#00ff4e"/></linearGradient>
<linearGradient id="i103" gradientUnits="userSpaceOnUse" x1="1389.7" y1="235.4" x2="1272.3" y2="178.2"><stop offset="0.000" stop-color="#ffffff"/><stop offset="0.194" stop-color="#93ffc6"/><stop offset="0.388" stop-color="#40ff9a"/><stop offset="0.583" stop-color="#00ff77"/><stop offset="0.777" stop-color="#00ff5b"/><stop offset="0.971" stop-color="#00ff43"/></linearGradient>
<linearGradient id="i104" gradientUnits="userSpaceOnUse" x1="1389.7" y1="235.4" x2="1270.7" y2="172.2"><stop offset="0.000" stop-color="#ffffff"/><stop offset="0.194" stop-color="#92ffc2"/><stop offset="0.388" stop-color="#3eff93"/><stop offset="0.583" stop-color="#00ff6e"/><stop offset="0.777" stop-color="#00ff51"/><stop offset="0.971" stop-color="#00ff38"/></linearGradient>
<linearGradient id="i105" gradientUnits="userSpaceOnUse" x1="1389.7" y1="235.4" x2="1269.0" y2="165.8"><stop offset="0.000" stop-color="#ffffff"/><stop offset="0.194" stop-color="#90ffbe"/><stop offset="0.388" stop-color="#3dff8c"/><stop offset="0.583" stop-color="#00ff65"/><stop offset="0.777" stop-color="#00ff46"/><stop offset="0.971" stop-color="#00ff2c"/></linearGradient>
<linearGradient id="i106" gradientUnits="userSpaceOnUse" x1="1389.7" y1="235.4" x2="1267.2" y2="158.9"><stop offset="0.000" stop-color="#ffffff"/><stop offset="0.194" stop-color="#8fffb9"/><stop offset="0.388" stop-color="#3bff84"/><stop offset="0.583" stop-color="#00ff5b"/><stop offset="0.777" stop-color="#00ff3b"/><stop offset="0.971" stop-color="#00ff20"/></linearGradient>
<linearGradient id="i107" gradientUnits="userSpaceOnUse" x1="1389.7" y1="235.4" x2="1265.3" y2="151.5"><stop offset="0.000" stop-color="#ffffff"/><stop offset="0.194" stop-color="#8effb4"/><stop offset="0.388" stop-color="#39ff7c"/><stop offset="0.583" stop-color="#00ff51"/><stop offset="0.777" stop-color="#00ff2f"/><stop offset="0.971" stop-color="#00ff13"/></linearGradient>
<linearGradient id="i108" gradientUnits="userSpaceOnUse" x1="1389.7" y1="235.4" x2="1263.2" y2="143.5"><stop offset="0.000" stop-color="#ffffff"/><stop offset="0.194" stop-color="#8cffaf"/><stop offset="0.388" stop-color="#37ff74"/><stop offset="0.583" stop-color="#00ff47"/><stop offset="0.777" stop-color="#00ff23"/><stop offset="0.971" stop-color="#00ff06"/></linearGradient>
<linearGradient id="i109" gradientUnits="userSpaceOnUse" x1="1389.7" y1="235.4" x2="1260.9" y2="134.8"><stop offset="0.000" stop-color="#ffffff"/><stop offset="0.194" stop-color="#8affa9"/><stop offset="0.388" stop-color="#36ff6b"/><stop offset="0.583" stop-color="#00ff3b"/><stop offset="0.777" stop-color="#00ff16"/><stop offset="0.971" stop-color="#00ff00"/></linearGradient>
<linearGradient id="i110" gradientUnits="userSpaceOnUse" x1="1389.7" y1="235.4" x2="1268.3" y2="133.6"><stop offset="0.000" stop-color="#ffffff"/><stop offset="0.194" stop-color="#90ffa9"/><stop offset="0.388" stop-color="#3fff6a"/><stop offset="0.583" stop-color="#01ff3a"/><stop offset="0.777" stop-color="#00ff14"/><stop offset="0.971" stop-color="#00ff00"/></linearGradient>
<linearGradient id="i111" gradientUnits="userSpaceOnUse" x1="1389.7" y1="235.4" x2="1277.9" y2="134.8"><stop offset="0.000" stop-color="#ffffff"/><stop offset="0.194" stop-color="#97ffaa"/><stop offset="0.388" stop-color="#4bff6b"/><stop offset="0.583" stop-color="#0fff3b"/><stop offset="0.777" stop-color="#00ff14"/><stop offset="0.971" stop-color="#00ff00"/></linearGradient>
<linearGradient id="i112" gradientUnits="userSpaceOnUse" x1="1389.7" y1="235.4" x2="1286.6" y2="135.9"><stop offset="0.000" stop-color="#ffffff"/><stop offset="0.194" stop-color="#9effac"/><stop offset="0.388" stop-color="#56ff6d"/><stop offset="0.583" stop-color="#1dff3c"/><stop offset="0.777" stop-color="#00ff15"/><stop offset="0.971" stop-color="#00ff00"/></linearGradient>
<linearGradient id="i113" gradientUnits="userSpaceOnUse" x1="1389.7" y1="235.4" x2="1294.5" y2="136.9"><stop offset="0.000" stop-color="#ffffff"/><stop offset="0.194" stop-color="#a5ffad"/><stop offset="0.388" stop-color="#60ff6e"/><stop offset="0.583" stop-color="#2aff3d"/><stop offset="0.777" stop-color="#00ff16"/><stop offset="0.971" stop-color="#00ff00"/></linearGradient>
<linearGradient id="i114" gradientUnits="userSpaceOnUse" x1="1389.7" y1="235.4" x2="1301.8" y2="137.8"><stop offset="0.000" stop-color="#ffffff"/><stop offset="0.194" stop-color="#abffae"/><stop offset="0.388" stop-color="#6aff70"/><stop offset="0.583" stop-color="#36ff3e"/><stop offset="0.777" stop-color="#0dff16"/><stop offset="0.971" stop-color="#00ff00"/></linearGradient>
<linearGradient id="i115" gradientUnits="userSpaceOnUse" x1="1389.7" y1="235.4" x2="1308.5" y2="138.7"><stop offset="0.000" stop-color="#ffffff"/><stop offset="0.194" stop-color="#b0ffaf"/><stop offset="0.388" stop-color="#73ff71"/><stop offset="0.583" stop-color="#42ff3f"/><stop offset="0.777" stop-color="#1aff17"/><stop offset="0.971" stop-color="#00ff00"/></linearGradient>
<linearGradient id="i116" gradientUnits="userSpaceOnUse" x1="1389.7" y1="235.4" x2="1314.7" y2="139.5"><stop offset="0.000" stop-color="#ffffff"/><stop offset="0.194" stop-color="#b5ffb0"/><stop offset="0.388" stop-color="#7cff72"/><stop offset="0.583" stop-color="#4dff40"/><stop offset="0.777" stop-color="#27ff17"/><stop offset="0.971" stop-color="#07ff00"/></linearGradient>
<linearGradient id="i117" gradientUnits="userSpaceOnUse" x1="1389.7" y1="235.4" x2="1320.5" y2="140.2"><stop offset="0.000" stop-color="#ffffff"/><stop offset="0.194" stop-color="#baffb1"/><stop offset="0.388" stop-color="#84ff73"/><stop offset="0.583" stop-color="#58ff41"/><stop offset="0.777" stop-color="#33ff18"/><stop offset="0.971" stop-color="#15ff00"/></linearGradient>
<linearGradient id="i118" gradientUnits="userSpaceOnUse" x1="1389.7" y1="235.4" x2="1325.9" y2="140.9"><stop offset="0.000" stop-color="#ffffff"/><stop offset="0.194" stop-color="#bfffb2"/><stop offset="0.388" stop-color="#8cff74"/><stop offset="0.583" stop-color="#62ff42"/><stop offset="0.777" stop-color="#3fff18"/><stop offset="0.971" stop-color="#22ff00"/></linearGradient>
<linearGradient id="i119" gradientUnits="userSpaceOnUse" x1="1389.7" y1="235.4" x2="1331.0" y2="141.6"><stop offset="0.000" stop-color="#ffffff"/><stop offset="0.194" stop-color="#c3ffb3"/><stop offset="0.388" stop-color="#93ff75"/><stop offset="0.583" stop-color="#6cff43"/><stop offset="0.777" stop-color="#4aff19"/><stop offset="0.971" stop-color="#2eff00"/></linearGradient>
<linearGradient id="i120" gradientUnits="userSpaceOnUse" x1="1389.7" y1="235.4" x2="1335.8" y2="142.2"><stop offset="0.000" stop-color="#ffffff"/><stop offset="0.194" stop-color="#c7ffb4"/><stop offset="0.388" stop-color="#9aff76"/><stop offset="0.583" stop-color="#75ff44"/><stop offset="0.777" stop-color="#56ff19"/><stop offset="0.971" stop-color="#3bff00"/></linearGradient>
<linearGradient id="i121" gradientUnits="userSpaceOnUse" x1="1389.7" y1="235.4" x2="1340.4" y2="142.8"><stop offset="0.000" stop-color="#ffffff"/><stop offset="0.194" stop-color="#cbffb4"/><stop offset="0.388" stop-color="#a1ff77"/><stop offset="0.583" stop-color="#7eff45"/><stop offset="0.777" stop-color="#60ff1a"/><stop offset="0.971" stop-color="#47ff00"/></linearGradient>
<linearGradient id="i122" gradientUnits="userSpaceOnUse" x1="1389.7" y1="235.4" x2="1344.7" y2="143.3"><stop offset="0.000" stop-color="#ffffff"/><stop offset="0.194" stop-color="#cfffb5"/><stop offset="0.388" stop-color="#a8ff78"/><stop offset="0.583" stop-color="#87ff45"/><stop offset="0.777" stop-color="#6bff1a"/><stop offset="0.971" stop-color="#53ff00"/></linearGradient>
<linearGradient id="i123" gradientUnits="userSpaceOnUse" x1="1389.7" y1="235.4" x2="1348.9" y2="143.8"><stop offset="0.000" stop-color="#ffffff"/><stop offset="0.194" stop-color="#d3ffb6"/><stop offset="0.388" stop-color="#aeff79"/><stop offset="0.583" stop-color="#8fff46"/><stop offset="0.777" stop-color="#75ff1b"/><stop offset="0.971" stop-color="#5fff00"/></linearGradient>
<linearGradient id="i124" gradientUnits="userSpaceOnUse" x1="1389.7" y1="235.4" x2="1352.9" y2="144.3"><stop offset="0.000" stop-color="#ffffff"/><stop offset="0.194" stop-color="#d6ffb6"/><stop offset="0.388" stop-color="#b4ff7a"/><stop offset="0.583" stop-color="#98ff47"/><stop offset="0.777" stop-color="#7fff1b"/><stop offset="0.971" stop-color="#6aff00"/></linearGradient>
<linearGradient id="i125" gradientUnits="userSpaceOnUse" x1="1389.7" y1="235.4" x2="1356.7" y2="144.8"><stop offset="0.000" stop-color="#ffffff"/><stop offset="0.194" stop-color="#daffb7"/><stop offset="0.388" stop-color="#bbff7b"/><stop offset="0.583" stop-color="#a0ff48"/><stop offset="0.777" stop-color="#89ff1b"/><stop offset="0.971" stop-color="#75ff00"/></linearGradient>
<linearGradient id="i126" gradientUnits="userSpaceOnUse" x1="1389.7" y1="235.4" x2="1360.4" y2="145.3"><stop offset="0.000" stop-color="#ffffff"/><stop offset="0.194" stop-color="#ddffb8"/><stop offset="0.388" stop-color="#c1ff7c"/><stop offset="0.583" stop-color="#a8ff48"/><stop offset="0.777" stop-color="#93ff1c"/><stop offset="0.971" stop-color="#81ff00"/></linearGradient>
<linearGradient id="i127" gradientUnits="userSpaceOnUse" x1="1389.7" y1="235.4" x2="1364.0" y2="145.8"><stop offset="0.000" stop-color="#ffffff"/><stop offset="0.194" stop-color="#e0ffb8"/><stop offset="0.388" stop-color="#c6ff7c"/><stop offset="0.583" stop-color="#b0ff49"/><stop offset="0.777" stop-color="#9dff1c"/><stop offset="0.971" stop-color="#8cff00"/></linearGradient>
<linearGradient id="i128" gradientUnits="userSpaceOnUse" x1="1389.7" y1="235.4" x2="1367.4" y2="146.2"><stop offset="0.000" stop-color="#ffffff"/><stop offset="0.194" stop-color="#e4ffb9"/><stop offset="0.388" stop-color="#ccff7d"/><stop offset="0.583" stop-color="#b8ff4a"/><stop offset="0.777" stop-color="#a6ff1d"/><stop offset="0.971" stop-color="#97ff00"/></linearGradient>
<linearGradient id="i129" gradientUnits="userSpaceOnUse" x1="1389.7" y1="235.4" x2="1370.8" y2="146.6"><stop offset="0.000" stop-color="#ffffff"/><stop offset="0.194" stop-color="#e7ffba"/><stop offset="0.388" stop-color="#d2ff7e"/><stop offset="0.583" stop-color="#c0ff4a"/><stop offset="0.777" stop-color="#b0ff1d"/><stop offset="0.971" stop-color="#a2ff00"/></linearGradient>
<linearGradient id="i130" gradientUnits="userSpaceOnUse" x1="1389.7" y1="235.4" x2="1374.1" y2="147.0"><stop offset="0.000" stop-color="#ffffff"/><stop offset="0.194" stop-color="#eaffba"/><stop offset="0.388" stop-color="#d7ff7f"/><stop offset="0.583" stop-color="#c7ff4b"/><stop offset="0.777" stop-color="#b9ff1d"/><stop offset="0.971" stop-color="#adff00"/></linearGradient>
<linearGradient id="i131" gradientUnits="userSpaceOnUse" x1="1389.7" y1="235.4" x2="1377.3" y2="147.5"><stop offset="0.000" stop-color="#ffffff"/><stop offset="0.194" stop-color="#edffbb"/><stop offset="0.388" stop-color="#ddff7f"/><stop offset="0.583" stop-color="#cfff4c"/><stop offset="0.777" stop-color="#c3ff1e"/><stop offset="0.971" stop-color="#b8ff00"/></linearGradient>
<linearGradient id="i132" gradientUnits="userSpaceOnUse" x1="1389.7" y1="235.4" x2="1380.5" y2="147.9"><stop offset="0.000" stop-color="#ffffff"/><stop offset="0.194" stop-color="#f0ffbb"/><stop offset="0.388" stop-color="#e2ff80"/><stop offset="0.583" stop-color="#d7ff4c"/><stop offset="0.777" stop-color="#ccff1e"/><stop offset="0.971" stop-color="#c3ff00"/></linearGradient>
<linearGradient id="i133" gradientUnits="userSpaceOnUse" x1="1389.7" y1="235.4" x2="1383.6" y2="148.3"><stop offset="0.000" stop-color="#ffffff"/><stop offset="0.194" stop-color="#f3ffbc"/><stop offset="0.388" stop-color="#e8ff81"/><stop offset="0.583" stop-color="#deff4d"/><stop offset="0.777" stop-color="#d6ff1f"/><stop offset="0.971" stop-color="#ceff00"/></linearGradient>
<linearGradient id="i134" gradientUnits="userSpaceOnUse" x1="1389.7" y1="235.4" x2="1386.6" y2="148.6"><stop offset="0.000" stop-color="#ffffff"/><stop offset="0.194" stop-color="#f5ffbc"/><stop offset="0.388" stop-color="#edff82"/><stop offset="0.583" stop-color="#e6ff4e"/><stop offset="0.777" stop-color="#dfff1f"/><stop offset="0.971" stop-color="#d9ff00"/></linearGradient>
<linearGradient id="i135" gradientUnits="userSpaceOnUse" x1="1389.7" y1="235.4" x2="1389.7" y2="149.0"><stop offset="0.000" stop-color="#ffffff"/><stop offset="0.194" stop-color="#f8ffbd"/><stop offset="0.388" stop-color="#f3ff82"/><stop offset="0.583" stop-color="#edff4e"/><stop offset="0.777" stop-color="#e9ff1f"/><stop offset="0.971" stop-color="#e4ff00"/></linearGradient>
<linearGradient id="i136" gradientUnits="userSpaceOnUse" x1="1389.7" y1="235.4" x2="1392.7" y2="149.4"><stop offset="0.000" stop-color="#ffffff"/><stop offset="0.194" stop-color="#fbffbe"/><stop offset="0.388" stop-color="#f8ff83"/><stop offset="0.583" stop-color="#f5ff4f"/><stop offset="0.777" stop-color="#f2ff20"/><stop offset="0.971" stop-color="#f0ff00"/></linearGradient>
<linearGradient id="i137" gradientUnits="userSpaceOnUse" x1="1389.7" y1="235.4" x2="1395.7" y2="149.8"><stop offset="0.000" stop-color="#ffffff"/><stop offset="0.194" stop-color="#feffbe"/><stop offset="0.388" stop-color="#fdff84"/><stop offset="0.583" stop-color="#fdff50"/><stop offset="0.777" stop-color="#fcff20"/><stop offset="0.971" stop-color="#fcff00"/></linearGradient>
<linearGradient id="i138" gradientUnits="userSpaceOnUse" x1="1389.7" y1="235.4" x2="1398.6" y2="150.2"><stop offset="0.000" stop-color="#ffffff"/><stop offset="0.194" stop-color="#fffdbd"/><stop offset="0.388" stop-color="#fffb83"/><stop offset="0.583" stop-color="#fffa4f"/><stop offset="0.777" stop-color="#fff820"/><stop offset="0.971" stop-color="#fff700"/></linearGradient>
<linearGradient id="i139" gradientUnits="userSpaceOnUse" x1="1389.7" y1="235.4" x2="1401.6" y2="150.5"><stop offset="0.000" stop-color="#ffffff"/><stop offset="0.194" stop-color="#fffabc"/><stop offset="0.388" stop-color="#fff681"/><stop offset="0.583" stop-color="#fff24d"/><stop offset="0.777" stop-color="#ffef1f"/><stop offset="0.971" stop-color="#ffec00"/></linearGradient>
<linearGradient id="i140" gradientUnits="userSpaceOnUse" x1="1389.7" y1="235.4" x2="1404.6" y2="150.9"><stop offset="0.000" stop-color="#ffffff"/><stop offset="0.194" stop-color="#fff7ba"/><stop offset="0.388" stop-color="#fff17f"/><stop offset="0.583" stop-color="#ffeb4b"/><stop offset="0.777" stop-color="#ffe61e"/><stop offset="0.971" stop-color="#ffe200"/></linearGradient>
<linearGradient id="i141" gradientUnits="userSpaceOnUse" x1="1389.7" y1="235.4" x2="1407.5" y2="151.3"><stop offset="0.000" stop-color="#ffffff"/><stop offset="0.194" stop-color="#fff5b9"/><stop offset="0.388" stop-color="#ffec7d"/><stop offset="0.583" stop-color="#ffe44a"/><stop offset="0.777" stop-color="#ffde1d"/><stop offset="0.971" stop-color="#ffd800"/></linearGradient>
<linearGradient id="i142" gradientUnits="userSpaceOnUse" x1="1389.7" y1="235.4" x2="1410.5" y2="151.7"><stop offset="0.000" stop-color="#ffffff"/><stop offset="0.194" stop-color="#fff2b7"/><stop offset="0.388" stop-color="#ffe77b"/><stop offset="0.583" stop-color="#ffde48"/><stop offset="0.777" stop-color="#ffd61d"/><stop offset="0.971" stop-color="#ffcf00"/></linearGradient>
<linearGradient id="i143" gradientUnits="userSpaceOnUse" x1="1389.7" y1="235.4" x2="1413.6" y2="152.1"><stop offset="0.000" stop-color="#ffffff"/><stop offset="0.194" stop-color="#ffefb6"/><stop offset="0.388" stop-color="#ffe279"/><stop offset="0.583" stop-color="#ffd747"/><stop offset="0.777" stop-color="#ffce1c"/><stop offset="0.971" stop-color="#ffc600"/></linearGradient>
<linearGradient id="i144" gradientUnits="userSpaceOnUse" x1="1389.7" y1="235.4" x2="1416.6" y2="152.5"><stop offset="0.000" stop-color="#ffffff"/><stop offset="0.194" stop-color="#ffedb4"/><stop offset="0.388" stop-color="#ffde78"/><stop offset="0.583" stop-color="#ffd145"/><stop offset="0.777" stop-color="#ffc71c"/><stop offset="0.971" stop-color="#ffbe00"/></linearGradient>
<linearGradient id="i145" gradientUnits="userSpaceOnUse" x1="1389.7" y1="235.4" x2="1419.7" y2="152.9"><stop offset="0.000" stop-color="#ffffff"/><stop offset="0.194" stop-color="#ffeab3"/><stop offset="0.388" stop-color="#ffd976"/><stop offset="0.583" stop-color="#ffcb44"/><stop offset="0.777" stop-color="#ffc01b"/><stop offset="0.971" stop-color="#ffb600"/></linearGradient>
<linearGradient id="i146" gradientUnits="userSpaceOnUse" x1="1389.7" y1="235.4" x2="1422.9" y2="153.3"><stop offset="0.000" stop-color="#ffffff"/><stop offset="0.194" stop-color="#ffe7b1"/><stop offset="0.388" stop-color="#ffd574"/><stop offset="0.583" stop-color="#ffc643"/><stop offset="0.777" stop-color="#ffb91a"/><stop offset="0.971" stop-color="#ffaf00"/></linearGradient>
<linearGradient id="i147" gradientUnits="userSpaceOnUse" x1="1389.7" y1="235.4" x2="1426.1" y2="153.7"><stop offset="0.000" stop-color="#ffffff"/><stop offset="0.194" stop-color="#ffe5b0"/><stop offset="0.388" stop-color="#ffd072"/><stop offset="0.583" stop-color="#ffc042"/><stop offset="0.777" stop-color="#ffb31a"/><stop offset="0.971" stop-color="#ffa800"/></linearGradient>
<linearGradient id="i148" gradientUnits="userSpaceOnUse" x1="1389.7" y1="235.4" x2="1429.3" y2="154.1"><stop offset="0.000" stop-color="#ffffff"/><stop offset="0.194" stop-color="#ffe2ae"/><stop offset="0.388" stop-color="#ffcc71"/><stop offset="0.583" stop-color="#ffba40"/><stop offset="0.777" stop-color="#ffac19"/><stop offset="0.971" stop-color="#ffa100"/></linearGradient>
<linearGradient id="i149" gradientUnits="userSpaceOnUse" x1="1389.7" y1="235.4" x2="1432.7" y2="154.5"><stop offset="0.000" stop-color="#ffffff"/><stop offset="0.194" stop-color="#ffdfad"/><stop offset="0.388" stop-color="#ffc76f"/><stop offset="0.583" stop-color="#ffb53f"/><stop offset="0.777" stop-color="#ffa619"/><stop offset="0.971" stop-color="#ff9a00"/></linearGradient>
<linearGradient id="i150" gradientUnits="userSpaceOnUse" x1="1389.7" y1="235.4" x2="1436.1" y2="154.9"><stop offset="0.000" stop-color="#ffffff"/><stop offset="0.194" stop-color="#ffddab"/><stop offset="0.388" stop-color="#ffc36d"/><stop offset="0.583" stop-color="#ffaf3e"/><stop offset="0.777" stop-color="#ffa018"/><stop offset="0.971" stop-color="#ff9300"/></linearGradient>
<linearGradient id="i151" gradientUnits="userSpaceOnUse" x1="1389.7" y1="235.4" x2="1439.7" y2="155.4"><stop offset="0.000" stop-color="#ffffff"/><stop offset="0.194" stop-color="#ffdaaa"/><stop offset="0.388" stop-color="#ffbf6c"/><stop offset="0.583" stop-color="#ffaa3d"/><stop offset="0.777" stop-color="#ff9a18"/><stop offset="0.971" stop-color="#ff8d00"/></linearGradient>
<linearGradient id="i152" gradientUnits="userSpaceOnUse" x1="1389.7" y1="235.4" x2="1443.3" y2="155.9"><stop offset="0.000" stop-color="#ffffff"/><stop offset="0.194" stop-color="#ffd7a8"/><stop offset="0.388" stop-color="#ffba6a"/><stop offset="0.583" stop-color="#ffa53b"/><stop offset="0.777" stop-color="#ff9417"/><stop offset="0.971" stop-color="#ff8700"/></linearGradient>
<linearGradient id="i153" gradientUnits="userSpaceOnUse" x1="1389.7" y1="235.4" x2="1447.1" y2="156.3"><stop offset="0.000" stop-color="#ffffff"/><stop offset="0.194" stop-color="#ffd4a7"/><stop offset="0.388" stop-color="#ffb668"/><stop offset="0.583" stop-color="#ffa03a"/><stop offset="0.777" stop-color="#ff8e17"/><stop offset="0.971" stop-color="#ff8100"/></linearGradient>
<linearGradient id="i154" gradientUnits="userSpaceOnUse" x1="1389.7" y1="235.4" x2="1451.1" y2="156.8"><stop offset="0.000" stop-color="#ffffff"/><stop offset="0.194" stop-color="#ffd1a5"/><stop offset="0.388" stop-color="#ffb267"/><stop offset="0.583" stop-color="#ff9a39"/><stop offset="0.777" stop-color="#ff8916"/><stop offset="0.971" stop-color="#ff7b00"/></linearGradient>
<linearGradient id="i155" gradientUnits="userSpaceOnUse" x1="1389.7" y1="235.4" x2="1455.2" y2="157.4"><stop offset="0.000" stop-color="#ffffff"/><stop offset="0.194" stop-color="#ffcea3"/><stop offset="0.388" stop-color="#ffad65"/><stop offset="0.583" stop-color="#ff9538"/><stop offset="0.777" stop-color="#ff8316"/><stop offset="0.971" stop-color="#ff7500"/></linearGradient>
<linearGradient id="i156" gradientUnits="userSpaceOnUse" x1="1389.7" y1="235.4" x2="1459.5" y2="157.9"><stop offset="0.000" stop-color="#ffffff"/><stop offset="0.194" stop-color="#ffcba2"/><stop offset="0.388" stop-color="#ffa963"/><stop offset="0.583" stop-color="#ff9037"/><stop offset="0.777" stop-color="#ff7e15"/><stop offset="0.971" stop-color="#ff6f00"/></linearGradient>
<linearGradient id="i157" gradientUnits="userSpaceOnUse" x1="1389.7" y1="235.4" x2="1464.0" y2="158.5"><stop offset="0.000" stop-color="#ffffff"/><stop offset="0.194" stop-color="#ffc8a0"/><stop offset="0.388" stop-color="#ffa462"/><stop offset="0.583" stop-color="#ff8b36"/><stop offset="0.777" stop-color="#ff7815"/><stop offset="0.971" stop-color="#ff6900"/></linearGradient>
<linearGradient id="i158" gradientUnits="userSpaceOnUse" x1="1389.7" y1="235.4" x2="1468.7" y2="159.1"><stop offset="0.000" stop-color="#ffffff"/><stop offset="0.194" stop-color="#ffc59e"/><stop offset="0.388" stop-color="#ffa060"/><stop offset="0.583" stop-color="#ff8634"/><stop offset="0.777" stop-color="#ff7214"/><stop offset="0.971" stop-color="#ff6400"/></linearGradient>
<linearGradient id="i159" gradientUnits="userSpaceOnUse" x1="1389.7" y1="235.4" x2="1473.7" y2="159.7"><stop offset="0.000" stop-color="#ffffff"/><stop offset="0.194" stop-color="#ffc29c"/><stop offset="0.388" stop-color="#ff9b5e"/><stop offset="0.583" stop-color="#ff8033"/><stop offset="0.777" stop-color="#ff6d14"/><stop offset="0.971" stop-color="#ff5e00"/></linearGradient>
<linearGradient id="i160" gradientUnits="userSpaceOnUse" x1="1389.7" y1="235.4" x2="1479.1" y2="160.4"><stop offset="0.000" stop-color="#ffffff"/><stop offset="0.194" stop-color="#ffbe9b"/><stop offset="0.388" stop-color="#ff965c"/><stop offset="0.583" stop-color="#ff7b32"/><stop offset="0.777" stop-color="#ff6713"/><stop offset="0.971" stop-color="#ff5800"/></linearGradient>
<linearGradient id="i161" gradientUnits="userSpaceOnUse" x1="1389.7" y1="235.4" x2="1484.8" y2="161.1"><stop offset="0.000" stop-color="#ffffff"/><stop offset="0.194" stop-color="#ffbb99"/><stop offset="0.388" stop-color="#ff915a"/><stop offset="0.583" stop-color="#ff7631"/><stop offset="0.777" stop-color="#ff6213"/><stop offset="0.971" stop-color="#ff5300"/></linearGradient>
<linearGradient id="i162" gradientUnits="userSpaceOnUse" x1="1389.7" y1="235.4" x2="1490.8" y2="161.9"><stop offset="0.000" stop-color="#ffffff"/><stop offset="0.194" stop-color="#ffb797"/><stop offset="0.388" stop-color="#ff8c59"/><stop offset="0.583" stop-color="#ff7030"/><stop offset="0.777" stop-color="#ff5c12"/><stop offset="0.971" stop-color="#ff4d00"/></linearGradient>
<linearGradient id="i163" gradientUnits="userSpaceOnUse" x1="1389.7" y1="235.4" x2="1497.4" y2="162.7"><stop offset="0.000" stop-color="#ffffff"/><stop offset="0.194" stop-color="#ffb394"/><stop offset="0.388" stop-color="#ff8757"/><stop offset="0.583" stop-color="#ff6b2e"/><stop offset="0.777" stop-color="#ff5612"/><stop offset="0.971" stop-color="#ff4700"/></linearGradient>
<linearGradient id="i164" gradientUnits="userSpaceOnUse" x1="1389.7" y1="235.4" x2="1504.5" y2="163.7"><stop offset="0.000" stop-color="#ffffff"/><stop offset="0.194" stop-color="#ffaf92"/><stop offset="0.388" stop-color="#ff8255"/><stop offset="0.583" stop-color="#ff652d"/><stop offset="0.777" stop-color="#ff5111"/><stop offset="0.971" stop-color="#ff4200"/></linearGradient>
<linearGradient id="i165" gradientUnits="userSpaceOnUse" x1="1389.7" y1="235.4" x2="1512.3" y2="164.6"><stop offset="0.000" stop-color="#ffffff"/><stop offset="0.194" stop-color="#ffab90"/><stop offset="0.388" stop-color="#ff7c52"/><stop offset="0.583" stop-color="#ff5f2c"/><stop offset="0.777" stop-color="#ff4b11"/><stop offset="0.971" stop-color="#ff3c00"/></linearGradient>
<linearGradient id="i166" gradientUnits="userSpaceOnUse" x1="1389.7" y1="235.4" x2="1520.8" y2="165.7"><stop offset="0.000" stop-color="#ffffff"/><stop offset="0.194" stop-color="#ffa68d"/><stop offset="0.388" stop-color="#ff7750"/><stop offset="0.583" stop-color="#ff592a"/><stop offset="0.777" stop-color="#ff4510"/><stop offset="0.971" stop-color="#ff3600"/></linearGradient>
<linearGradient id="i167" gradientUnits="userSpaceOnUse" x1="1389.7" y1="235.4" x2="1530.1" y2="166.9"><stop offset="0.000" stop-color="#ffffff"/><stop offset="0.194" stop-color="#ffa18b"/><stop offset="0.388" stop-color="#ff714e"/><stop offset="0.583" stop-color="#ff5329"/><stop offset="0.777" stop-color="#ff3f10"/><stop offset="0.971" stop-color="#ff3000"/></linearGradient>
<linearGradient id="i168" gradientUnits="userSpaceOnUse" x1="1389.7" y1="235.4" x2="1540.6" y2="168.2"><stop offset="0.000" stop-color="#ffffff"/><stop offset="0.194" stop-color="#ff9c88"/><stop offset="0.388" stop-color="#ff6a4c"/><stop offset="0.583" stop-color="#ff4d28"/><stop offset="0.777" stop-color="#ff390f"/><stop offset="0.971" stop-color="#ff2a00"/></linearGradient>
<linearGradient id="i169" gradientUnits="userSpaceOnUse" x1="1389.7" y1="235.4" x2="1552.3" y2="169.7"><stop offset="0.000" stop-color="#ffffff"/><stop offset="0.194" stop-color="#ff9785"/><stop offset="0.388" stop-color="#ff6449"/><stop offset="0.583" stop-color="#ff4626"/><stop offset="0.777" stop-color="#ff320f"/><stop offset="0.971" stop-color="#ff2400"/></linearGradient>
<linearGradient id="i170" gradientUnits="userSpaceOnUse" x1="1389.7" y1="235.4" x2="1565.5" y2="171.4"><stop offset="0.000" stop-color="#ffffff"/><stop offset="0.194" stop-color="#ff9181"/><stop offset="0.388" stop-color="#ff5d47"/><stop offset="0.583" stop-color="#ff3f25"/><stop offset="0.777" stop-color="#ff2c0e"/><stop offset="0.971" stop-color="#ff1e00"/></linearGradient>
<linearGradient id="i171" gradientUnits="userSpaceOnUse" x1="1389.7" y1="235.4" x2="1580.7" y2="173.4"><stop offset="0.000" stop-color="#ffffff"/><stop offset="0.194" stop-color="#ff8a7e"/><stop offset="0.388" stop-color="#ff5644"/><stop offset="0.583" stop-color="#ff3823"/><stop offset="0.777" stop-color="#ff250e"/><stop offset="0.971" stop-color="#ff1800"/></linearGradient>
<linearGradient id="i172" gradientUnits="userSpaceOnUse" x1="1389.7" y1="235.4" x2="1598.3" y2="175.6"><stop offset="0.000" stop-color="#ffffff"/><stop offset="0.194" stop-color="#ff837a"/><stop offset="0.388" stop-color="#ff4e41"/><stop offset="0.583" stop-color="#ff3121"/><stop offset="0.777" stop-color="#ff1e0d"/><stop offset="0.971" stop-color="#ff1100"/></linearGradient>
<linearGradient id="i173" gradientUnits="userSpaceOnUse" x1="1389.7" y1="235.4" x2="1619.0" y2="178.2"><stop offset="0.000" stop-color="#ffffff"/><stop offset="0.194" stop-color="#ff7b76"/><stop offset="0.388" stop-color="#ff463e"/><stop offset="0.583" stop-color="#ff2920"/><stop offset="0.777" stop-color="#ff170d"/><stop offset="0.971" stop-color="#ff0a00"/></linearGradient>
<linearGradient id="i174" gradientUnits="userSpaceOnUse" x1="1389.7" y1="235.4" x2="1643.9" y2="181.4"><stop offset="0.000" stop-color="#ffffff"/><stop offset="0.194" stop-color="#ff7371"/><stop offset="0.388" stop-color="#ff3d3a"/><stop offset="0.583" stop-color="#ff211e"/><stop offset="0.777" stop-color="#ff0f0c"/><stop offset="0.971" stop-color="#ff0300"/></linearGradient>
<linearGradient id="i175" gradientUnits="userSpaceOnUse" x1="1389.7" y1="235.4" x2="1652.6" y2="189.1"><stop offset="0.000" stop-color="#ffffff"/><stop offset="0.194" stop-color="#ff6f72"/><stop offset="0.388" stop-color="#ff393c"/><stop offset="0.583" stop-color="#ff1d21"/><stop offset="0.777" stop-color="#ff0c10"/><stop offset="0.971" stop-color="#ff0004"/></linearGradient>
<linearGradient id="i176" gradientUnits="userSpaceOnUse" x1="1389.7" y1="235.4" x2="1643.7" y2="199.7"><stop offset="0.000" stop-color="#ffffff"/><stop offset="0.194" stop-color="#ff7178"/><stop offset="0.388" stop-color="#ff3b44"/><stop offset="0.583" stop-color="#ff1e28"/><stop offset="0.777" stop-color="#ff0c17"/><stop offset="0.971" stop-color="#ff000b"/></linearGradient>
<linearGradient id="i177" gradientUnits="userSpaceOnUse" x1="1389.7" y1="235.4" x2="1635.5" y2="209.6"><stop offset="0.000" stop-color="#ffffff"/><stop offset="0.194" stop-color="#ff737d"/><stop offset="0.388" stop-color="#ff3c4a"/><stop offset="0.583" stop-color="#ff1f2f"/><stop offset="0.777" stop-color="#ff0c1e"/><stop offset="0.971" stop-color="#ff0013"/></linearGradient>
<linearGradient id="i178" gradientUnits="userSpaceOnUse" x1="1389.7" y1="235.4" x2="1627.8" y2="218.8"><stop offset="0.000" stop-color="#ffffff"/><stop offset="0.194" stop-color="#ff7583"/><stop offset="0.388" stop-color="#ff3e51"/><stop offset="0.583" stop-color="#ff2036"/><stop offset="0.777" stop-color="#ff0d25"/><stop offset="0.971" stop-color="#ff001a"/></linearGradient>
<linearGradient id="i179" gradientUnits="userSpaceOnUse" x1="1389.7" y1="235.4" x2="1620.7" y2="227.4"><stop offset="0.000" stop-color="#ffffff"/><stop offset="0.194" stop-color="#ff7788"/><stop offset="0.388" stop-color="#ff3f58"/><stop offset="0.583" stop-color="#ff203d"/><stop offset="0.777" stop-color="#ff0d2c"/><stop offset="0.971" stop-color="#ff0021"/></linearGradient>
<linearGradient id="in1" x1="1568" y1="546.6" x2="1789.6" y2="673.9" gradientUnits="userSpaceOnUse"><stop offset="0" stop-color="#a2ff00"/><stop offset="0.1235" stop-color="#b9ff00"/><stop offset="0.5025" stop-color="#ffff00"/><stop offset="0.786" stop-color="#ffe100"/><stop offset="1" stop-color="#ffbe00"/></linearGradient>
<linearGradient id="in2" x1="1568" y1="546.6" x2="1789.6" y2="673.9" gradientUnits="userSpaceOnUse"><stop offset="0" stop-color="#619900"/><stop offset="0.1235" stop-color="#6f9900"/><stop offset="0.5025" stop-color="#999900"/><stop offset="0.786" stop-color="#998700"/><stop offset="1" stop-color="#997200"/></linearGradient>
<linearGradient id="strip" x1="0" y1="0" x2="0" y2="1"><stop offset="0" stop-color="#484848"/><stop offset="1" stop-color="#262626"/></linearGradient>
<linearGradient id="bbtn" x1="0" y1="0" x2="0" y2="1"><stop offset="0" stop-color="#a4a4a4"/><stop offset="0.5" stop-color="#787878"/><stop offset="1" stop-color="#565656"/></linearGradient>
<linearGradient id="bsel" x1="0" y1="0" x2="0" y2="1"><stop offset="0" stop-color="#1a1a1a"/><stop offset="1" stop-color="#3c3c3c"/></linearGradient>
<linearGradient id="upc" x1="0" y1="0" x2="0" y2="1"><stop offset="0" stop-color="#707070"/><stop offset="1" stop-color="#989898"/></linearGradient>
<linearGradient id="cbtn" x1="0" y1="0" x2="0" y2="1"><stop offset="0" stop-color="#a0a0a0"/><stop offset="1" stop-color="#606060"/></linearGradient>
<linearGradient id="cbtn2" x1="0" y1="0" x2="0" y2="1"><stop offset="0" stop-color="#8e8e8e"/><stop offset="1" stop-color="#5a5a5a"/></linearGradient>
<linearGradient id="cb3" x1="0" y1="0" x2="0" y2="1"><stop offset="0" stop-color="#9a9a9a"/><stop offset="1" stop-color="#585858"/></linearGradient>
<linearGradient id="blk" x1="0" y1="0" x2="0" y2="1"><stop offset="0" stop-color="#1c1c1c"/><stop offset="0.5" stop-color="#000"/><stop offset="1" stop-color="#000"/></linearGradient>
<linearGradient id="dz" x1="0" y1="0" x2="0" y2="1"><stop offset="0" stop-color="#262626"/><stop offset="1" stop-color="#3a3a3a"/></linearGradient>
<linearGradient id="bn" x1="0" y1="0" x2="0" y2="1"><stop offset="0" stop-color="#a2a2a2"/><stop offset="0.5" stop-color="#7a7a7a"/><stop offset="1" stop-color="#5c5c5c"/></linearGradient>
</defs>
<rect x="0.00" y="0.00" width="1814.00" height="1051.00" fill="#333333"/>
<rect x="0.00" y="0.00" width="1814.00" height="63.50" fill="#222222"/>
<rect x="190.00" y="10.80" width="1624.00" height="4.40" fill="url(#rb)"/>
<path d="M0 0H183V23.5a4 4 0 0 1-4 4H4a4 4 0 0 1-4-4Z" fill="url(#cm)"/>
<path d="M0.5 0V23.5a3.5 3.5 0 0 0 3.5 3.5H179a3.5 3.5 0 0 0 3.5-3.5V0" fill="none" stroke="#e86a6e" stroke-width="1" opacity="0.7"/>
<text x="13.50" y="22.40" font-size="29.5" fill="#ffffff" textLength="131.00" lengthAdjust="spacingAndGlyphs" font-weight="bold" letter-spacing="1.6">CalMAN</text>
<circle cx="166" cy="12.5" r="10" fill="url(#cmc)"/>
<path d="M161.5 10.5h9l-4.5 5.2z" fill="#fff"/>
<path d="M0 33H196a4 4 0 0 1 4 4V1051H0Z" fill="url(#sb)"/>
<circle cx="18.5" cy="47.5" r="10.2" fill="url(#rbtn)"/>
<circle cx="18" cy="46.5" r="3.6" fill="url(#orb)"/>
<circle cx="181" cy="47.5" r="10.2" fill="url(#rbtn)"/>
<path d="M183.5 41.5v10l-5.5-5z" fill="#fff"/>
<text x="9.00" y="75.80" font-size="13" fill="#f0f0f0" textLength="63.50" lengthAdjust="spacingAndGlyphs" >SDR Toolkit</text>
<rect x="9.00" y="80.00" width="182.00" height="250.50" fill="#232323"/>
<rect x="9.5" y="80.5" width="181" height="249.5" fill="none" stroke="#1a1a1a" stroke-width="1"/>
<rect x="10.00" y="81.00" width="180.00" height="8.00" fill="url(#tbx)"/>
<text x="29.30" y="99.00" font-size="11" fill="#ffffff" textLength="47.00" lengthAdjust="spacingAndGlyphs" font-weight="bold" >Welcome</text>
<path d="M21.5 97.7h-4l4-4z" fill="#555"/>
<text x="42.00" y="114.40" font-size="11" fill="#f4f4f4" textLength="46.00" lengthAdjust="spacingAndGlyphs" >Welcome</text>
<text x="42.00" y="129.10" font-size="11" fill="#f4f4f4" textLength="38.00" lengthAdjust="spacingAndGlyphs" >Options</text>
<text x="29.30" y="143.80" font-size="11" fill="#ffffff" textLength="41.00" lengthAdjust="spacingAndGlyphs" font-weight="bold" >Analysis</text>
<path d="M21.5 142.5h-4l4-4z" fill="#555"/>
<text x="42.00" y="159.80" font-size="11" fill="#f4f4f4" textLength="75.00" lengthAdjust="spacingAndGlyphs" >Dynamic Range</text>
<text x="42.00" y="173.80" font-size="11" fill="#f4f4f4" textLength="72.00" lengthAdjust="spacingAndGlyphs" >Grayscale - 2pt</text>
<text x="42.00" y="188.50" font-size="11" fill="#f4f4f4" textLength="82.00" lengthAdjust="spacingAndGlyphs" >Grayscale - Multi</text>
<text x="42.00" y="203.80" font-size="11" fill="#f4f4f4" textLength="62.00" lengthAdjust="spacingAndGlyphs" >Color Gamut</text>
<text x="42.00" y="217.80" font-size="11" fill="#f4f4f4" textLength="35.00" lengthAdjust="spacingAndGlyphs" >3D LUT</text>
<text x="42.00" y="233.00" font-size="11" fill="#f4f4f4" textLength="65.00" lengthAdjust="spacingAndGlyphs" >ColorChecker</text>
<rect x="40.50" y="236.50" width="92.00" height="14.00" fill="#dedede"/>
<text x="42.00" y="247.70" font-size="11" fill="#222222" textLength="89.00" lengthAdjust="spacingAndGlyphs" >Saturation Sweeps</text>
<text x="42.00" y="262.40" font-size="11" fill="#f4f4f4" textLength="93.00" lengthAdjust="spacingAndGlyphs" >Luminance Sweeps</text>
<text x="42.00" y="277.00" font-size="11" fill="#f4f4f4" textLength="88.00" lengthAdjust="spacingAndGlyphs" >Screen Uniformity</text>
<text x="42.00" y="291.80" font-size="11" fill="#f4f4f4" textLength="86.00" lengthAdjust="spacingAndGlyphs" >Screen Angularity</text>
<text x="42.00" y="306.30" font-size="11" fill="#f4f4f4" textLength="75.00" lengthAdjust="spacingAndGlyphs" >Screen Stability</text>
<text x="42.00" y="321.00" font-size="11" fill="#f4f4f4" textLength="97.00" lengthAdjust="spacingAndGlyphs" >Spectral Power Dist.</text>
<path d="M200.5 63V37a3.5 3.5 0 0 1 3.5-3.5H288a3.5 3.5 0 0 1 3.5 3.5V63Z" fill="url(#tab)" stroke="#8a8a8a" stroke-width="1"/>
<rect x="200.00" y="62.50" width="93.00" height="1.50" fill="#222"/>
<line x1="258.50" y1="34.00" x2="258.50" y2="62.50" stroke="#7a7a7a" stroke-width="1" />
<text x="206.00" y="52.60" font-size="11.5" fill="#e6e6e6" textLength="46.50" lengthAdjust="spacingAndGlyphs" >History 1</text>
<circle cx="274.5" cy="49.5" r="9.3" fill="url(#plusc)"/>
<text x="274.50" y="54.80" font-size="13.5" fill="#8c8c8c" text-anchor="middle" >+</text>
<path d="M1234 63V37a4 4 0 0 1 4-4H1385a4 4 0 0 1 4 4V63Z" fill="url(#dev)"/>
<path d="M1234 63V37a4 4 0 0 1 4-4H1239.4V63Z" fill="#1ed61e"/>
<text x="1243.00" y="45.30" font-size="10.5" fill="#f2f2f2" textLength="65.50" lengthAdjust="spacingAndGlyphs" >X-Rite i1Pro 2</text>
<text x="1243.00" y="59.00" font-size="10.5" fill="#f2f2f2" textLength="77.50" lengthAdjust="spacingAndGlyphs" >LCD Direct View</text>
<circle cx="1333" cy="48.5" r="9.5" fill="url(#dd)"/>
<path d="M1328.5 47.0h9l-4.5 5z" fill="#fff"/>
<line x1="1352.50" y1="36.00" x2="1352.50" y2="63.00" stroke="#3c3c3c" stroke-width="1" />
<circle cx="1373" cy="47.8" r="12.3" fill="#0000ee" stroke="#ffffff" stroke-width="1.2"/>
<text x="1365.50" y="51.00" font-size="8.5" fill="#ffffff" textLength="15.00" lengthAdjust="spacingAndGlyphs" font-weight="bold" >235</text>
<path d="M1394.5 63V37a4 4 0 0 1 4-4H1598.5a4 4 0 0 1 4 4V63Z" fill="url(#dev)"/>
<path d="M1394.5 63V37a4 4 0 0 1 4-4H1399.9V63Z" fill="#1ed61e"/>
<text x="1403.50" y="45.30" font-size="10.5" fill="#f2f2f2" textLength="170.00" lengthAdjust="spacingAndGlyphs" >CalMAN Client 3 Pattern Generator</text>
<circle cx="1586.5" cy="49.5" r="9.5" fill="url(#dd)"/>
<path d="M1582.0 48.0h9l-4.5 5z" fill="#fff"/>
<path d="M1608.5 63V37a4 4 0 0 1 4-4H1748a4 4 0 0 1 4 4V63Z" fill="url(#dev)"/>
<path d="M1608.5 63V37a4 4 0 0 1 4-4H1613.9V63Z" fill="#e6e600"/>
<text x="1617.50" y="45.30" font-size="10.5" fill="#f2f2f2" textLength="105.50" lengthAdjust="spacingAndGlyphs" >Direct Display Control</text>
<circle cx="1735.5" cy="49.5" r="9.5" fill="url(#dd)"/>
<path d="M1731.0 48.0h9l-4.5 5z" fill="#fff"/>
<rect x="1755.5" y="33.5" width="32" height="27" rx="4" fill="url(#gbtn)" stroke="#b0b0b0" stroke-width="1"/>
<rect x="1789.5" y="33.5" width="32" height="27" rx="4" fill="url(#gbtn)" stroke="#b0b0b0" stroke-width="1"/>
<circle cx="1771.5" cy="47" r="9.5" fill="url(#dd)"/>
<circle cx="1804" cy="47" r="9.5" fill="url(#dd)"/>
<line x1="1775.70" y1="47.00" x2="1778.50" y2="47.00" stroke="#d0d0d0" stroke-width="2.4"/><line x1="1774.47" y1="49.97" x2="1776.45" y2="51.95" stroke="#d0d0d0" stroke-width="2.4"/><line x1="1771.50" y1="51.20" x2="1771.50" y2="54.00" stroke="#d0d0d0" stroke-width="2.4"/><line x1="1768.53" y1="49.97" x2="1766.55" y2="51.95" stroke="#d0d0d0" stroke-width="2.4"/><line x1="1767.30" y1="47.00" x2="1764.50" y2="47.00" stroke="#d0d0d0" stroke-width="2.4"/><line x1="1768.53" y1="44.03" x2="1766.55" y2="42.05" stroke="#d0d0d0" stroke-width="2.4"/><line x1="1771.50" y1="42.80" x2="1771.50" y2="40.00" stroke="#d0d0d0" stroke-width="2.4"/><line x1="1774.47" y1="44.03" x2="1776.45" y2="42.05" stroke="#d0d0d0" stroke-width="2.4"/>
<circle cx="1771.5" cy="47" r="4" fill="none" stroke="#d0d0d0" stroke-width="1.8"/>
<path d="M1806.5 41.5v11l-6-5.5z" fill="#fff"/>
<rect x="200.00" y="64.00" width="1.50" height="987.00" fill="#2a2a2a"/>
<text x="208.00" y="119.20" font-size="45.4" fill="#f2f2f2" textLength="322.00" lengthAdjust="spacingAndGlyphs" >Saturation Sweeps</text>
<text x="320.70" y="180.60" font-size="22.3" fill="#f2f2f2" textLength="103.50" lengthAdjust="spacingAndGlyphs" >dE Formula:</text>
<rect x="432.50" y="158.00" width="130.00" height="29.30" fill="url(#ddl)" rx="2" stroke="#262626" stroke-width="1"/>
<text x="437.00" y="180.50" font-size="17.5" fill="#f0f0f0" textLength="34.00" lengthAdjust="spacingAndGlyphs" >2000</text>
<path d="M547.2 170.4h10l-5 5.8z" fill="#000"/>
<text x="742.00" y="110.90" font-size="23.5" fill="#f2f2f2" textLength="57.50" lengthAdjust="spacingAndGlyphs" >Levels:</text>
<rect x="807.50" y="88.50" width="327.50" height="28.50" fill="url(#ddl2)" rx="2" stroke="#262626" stroke-width="1"/>
<text x="812.50" y="111.50" font-size="17.5" fill="#f0f0f0" textLength="86.00" lengthAdjust="spacingAndGlyphs" >20% Sweeps</text>
<path d="M1120.5 99.5h9l-4.5 6z" fill="#000"/>
<rect x="242.50" y="224.00" width="302.30" height="436.50" fill="#252525"/>
<line x1="281.14" y1="224.00" x2="281.14" y2="660.50" stroke="#929292" stroke-width="1" />
<line x1="321.68" y1="224.00" x2="321.68" y2="660.50" stroke="#929292" stroke-width="1" />
<line x1="362.22" y1="224.00" x2="362.22" y2="660.50" stroke="#929292" stroke-width="1" />
<line x1="402.76" y1="224.00" x2="402.76" y2="660.50" stroke="#929292" stroke-width="1" />
<line x1="443.30" y1="224.00" x2="443.30" y2="660.50" stroke="#929292" stroke-width="1" />
<line x1="483.84" y1="224.00" x2="483.84" y2="660.50" stroke="#929292" stroke-width="1" />
<line x1="524.38" y1="224.00" x2="524.38" y2="660.50" stroke="#929292" stroke-width="1" />
<rect x="242.5" y="224" width="302.30" height="436.50" fill="none" stroke="#9a9a9a" stroke-width="1.4"/>
<text x="337.35" y="217.70" font-size="16.5" fill="#e4e4e4" textLength="76.50" lengthAdjust="spacingAndGlyphs" >DeltaE 2000</text>
<line x1="242.50" y1="660.50" x2="242.50" y2="665.50" stroke="#9a9a9a" stroke-width="1.2" />
<text x="238.70" y="685.50" font-size="16" fill="#e4e4e4" textLength="7.60" lengthAdjust="spacingAndGlyphs" >0</text>
<line x1="281.14" y1="660.50" x2="281.14" y2="665.50" stroke="#9a9a9a" stroke-width="1.2" />
<text x="277.34" y="685.50" font-size="16" fill="#e4e4e4" textLength="7.60" lengthAdjust="spacingAndGlyphs" >2</text>
<line x1="321.68" y1="660.50" x2="321.68" y2="665.50" stroke="#9a9a9a" stroke-width="1.2" />
<text x="317.88" y="685.50" font-size="16" fill="#e4e4e4" textLength="7.60" lengthAdjust="spacingAndGlyphs" >4</text>
<line x1="362.22" y1="660.50" x2="362.22" y2="665.50" stroke="#9a9a9a" stroke-width="1.2" />
<text x="358.42" y="685.50" font-size="16" fill="#e4e4e4" textLength="7.60" lengthAdjust="spacingAndGlyphs" >6</text>
<line x1="402.76" y1="660.50" x2="402.76" y2="665.50" stroke="#9a9a9a" stroke-width="1.2" />
<text x="398.96" y="685.50" font-size="16" fill="#e4e4e4" textLength="7.60" lengthAdjust="spacingAndGlyphs" >8</text>
<line x1="443.30" y1="660.50" x2="443.30" y2="665.50" stroke="#9a9a9a" stroke-width="1.2" />
<text x="435.70" y="685.50" font-size="16" fill="#e4e4e4" textLength="15.20" lengthAdjust="spacingAndGlyphs" >10</text>
<line x1="483.84" y1="660.50" x2="483.84" y2="665.50" stroke="#9a9a9a" stroke-width="1.2" />
<text x="476.24" y="685.50" font-size="16" fill="#e4e4e4" textLength="15.20" lengthAdjust="spacingAndGlyphs" >12</text>
<line x1="524.38" y1="660.50" x2="524.38" y2="665.50" stroke="#9a9a9a" stroke-width="1.2" />
<text x="516.78" y="685.50" font-size="16" fill="#e4e4e4" textLength="15.20" lengthAdjust="spacingAndGlyphs" >14</text>
<line x1="237.50" y1="224.00" x2="242.50" y2="224.00" stroke="#9a9a9a" stroke-width="1.2" />
<line x1="237.50" y1="286.36" x2="242.50" y2="286.36" stroke="#9a9a9a" stroke-width="1.2" />
<line x1="237.50" y1="348.72" x2="242.50" y2="348.72" stroke="#9a9a9a" stroke-width="1.2" />
<line x1="237.50" y1="411.08" x2="242.50" y2="411.08" stroke="#9a9a9a" stroke-width="1.2" />
<line x1="237.50" y1="473.44" x2="242.50" y2="473.44" stroke="#9a9a9a" stroke-width="1.2" />
<line x1="237.50" y1="535.80" x2="242.50" y2="535.80" stroke="#9a9a9a" stroke-width="1.2" />
<line x1="237.50" y1="598.16" x2="242.50" y2="598.16" stroke="#9a9a9a" stroke-width="1.2" />
<line x1="237.50" y1="660.52" x2="242.50" y2="660.52" stroke="#9a9a9a" stroke-width="1.2" />
<text x="207.00" y="261.68" font-size="16" fill="#e4e4e4" textLength="34.50" lengthAdjust="spacingAndGlyphs" >100%</text>
<text x="215.00" y="324.04" font-size="16" fill="#e4e4e4" textLength="26.50" lengthAdjust="spacingAndGlyphs" >80%</text>
<text x="215.00" y="386.40" font-size="16" fill="#e4e4e4" textLength="26.50" lengthAdjust="spacingAndGlyphs" >60%</text>
<text x="215.00" y="448.76" font-size="16" fill="#e4e4e4" textLength="26.50" lengthAdjust="spacingAndGlyphs" >40%</text>
<text x="215.00" y="511.12" font-size="16" fill="#e4e4e4" textLength="26.50" lengthAdjust="spacingAndGlyphs" >20%</text>
<text x="218.00" y="573.48" font-size="16" fill="#e4e4e4" textLength="23.50" lengthAdjust="spacingAndGlyphs" >100</text>
<text x="233.50" y="635.84" font-size="16" fill="#e4e4e4" textLength="8.00" lengthAdjust="spacingAndGlyphs" >0</text>
<rect x="242.50" y="229.80" width="83.83" height="6.60" fill="#000000"/>
<rect x="243.10" y="230.80" width="81.83" height="3.60" fill="url(#hb1)"/>
<rect x="242.50" y="237.42" width="111.04" height="6.60" fill="#000000"/>
<rect x="243.10" y="238.42" width="109.04" height="3.60" fill="url(#hb2)"/>
<rect x="242.50" y="245.04" width="26.59" height="6.60" fill="#000000"/>
<rect x="243.10" y="246.04" width="24.59" height="3.60" fill="url(#hb3)"/>
<rect x="242.50" y="252.66" width="79.80" height="6.60" fill="#000000"/>
<rect x="243.10" y="253.66" width="77.80" height="3.60" fill="url(#hb4)"/>
<rect x="242.50" y="260.28" width="55.61" height="6.60" fill="#000000"/>
<rect x="243.10" y="261.28" width="53.61" height="3.60" fill="url(#hb5)"/>
<rect x="242.50" y="267.90" width="22.76" height="6.60" fill="#000000"/>
<rect x="243.10" y="268.90" width="20.76" height="3.60" fill="url(#hb6)"/>
<rect x="242.50" y="292.16" width="54.81" height="6.60" fill="#000000"/>
<rect x="243.10" y="293.16" width="52.81" height="3.60" fill="url(#hb7)"/>
<rect x="242.50" y="299.78" width="88.87" height="6.60" fill="#000000"/>
<rect x="243.10" y="300.78" width="86.87" height="3.60" fill="url(#hb8)"/>
<rect x="242.50" y="307.40" width="16.11" height="6.60" fill="#000000"/>
<rect x="243.10" y="308.40" width="14.11" height="3.60" fill="url(#hb9)"/>
<rect x="242.50" y="315.02" width="70.73" height="6.60" fill="#000000"/>
<rect x="243.10" y="316.02" width="68.73" height="3.60" fill="url(#hb10)"/>
<rect x="242.50" y="322.64" width="45.34" height="6.60" fill="#000000"/>
<rect x="243.10" y="323.64" width="43.34" height="3.60" fill="url(#hb11)"/>
<rect x="242.50" y="330.26" width="15.31" height="6.60" fill="#000000"/>
<rect x="243.10" y="331.26" width="13.31" height="3.60" fill="url(#hb12)"/>
<rect x="242.50" y="354.52" width="50.98" height="6.60" fill="#000000"/>
<rect x="243.10" y="355.52" width="48.98" height="3.60" fill="url(#hb13)"/>
<rect x="242.50" y="362.14" width="80.81" height="6.60" fill="#000000"/>
<rect x="243.10" y="363.14" width="78.81" height="3.60" fill="url(#hb14)"/>
<rect x="242.50" y="369.76" width="6.64" height="6.60" fill="#000000"/>
<rect x="243.10" y="370.76" width="4.64" height="3.60" fill="url(#hb15)"/>
<rect x="242.50" y="377.38" width="55.82" height="6.60" fill="#000000"/>
<rect x="243.10" y="378.38" width="53.82" height="3.60" fill="url(#hb16)"/>
<rect x="242.50" y="385.00" width="38.69" height="6.60" fill="#000000"/>
<rect x="243.10" y="386.00" width="36.69" height="3.60" fill="url(#hb17)"/>
<rect x="242.50" y="392.62" width="6.44" height="6.60" fill="#000000"/>
<rect x="243.10" y="393.62" width="4.44" height="3.60" fill="url(#hb18)"/>
<rect x="242.50" y="416.88" width="39.49" height="6.60" fill="#000000"/>
<rect x="243.10" y="417.88" width="37.49" height="3.60" fill="url(#hb19)"/>
<rect x="242.50" y="424.50" width="59.44" height="6.60" fill="#000000"/>
<rect x="243.10" y="425.50" width="57.44" height="3.60" fill="url(#hb20)"/>
<rect x="242.50" y="432.12" width="4.02" height="6.60" fill="#000000"/>
<rect x="243.10" y="433.12" width="2.02" height="3.60" fill="url(#hb21)"/>
<rect x="242.50" y="439.74" width="50.58" height="6.60" fill="#000000"/>
<rect x="243.10" y="440.74" width="48.58" height="3.60" fill="url(#hb22)"/>
<rect x="242.50" y="447.36" width="34.45" height="6.60" fill="#000000"/>
<rect x="243.10" y="448.36" width="32.45" height="3.60" fill="url(#hb23)"/>
<rect x="242.50" y="454.98" width="8.25" height="6.60" fill="#000000"/>
<rect x="243.10" y="455.98" width="6.25" height="3.60" fill="url(#hb24)"/>
<rect x="242.50" y="479.24" width="33.45" height="6.60" fill="#000000"/>
<rect x="243.10" y="480.24" width="31.45" height="3.60" fill="url(#hb25)"/>
<rect x="242.50" y="486.86" width="47.55" height="6.60" fill="#000000"/>
<rect x="243.10" y="487.86" width="45.55" height="3.60" fill="url(#hb26)"/>
<rect x="242.50" y="494.48" width="6.24" height="6.60" fill="#000000"/>
<rect x="243.10" y="495.48" width="4.24" height="3.60" fill="url(#hb27)"/>
<rect x="242.50" y="502.10" width="30.42" height="6.60" fill="#000000"/>
<rect x="243.10" y="503.10" width="28.42" height="3.60" fill="url(#hb28)"/>
<rect x="242.50" y="509.72" width="21.35" height="6.60" fill="#000000"/>
<rect x="243.10" y="510.72" width="19.35" height="3.60" fill="url(#hb29)"/>
<rect x="242.50" y="517.34" width="9.26" height="6.60" fill="#000000"/>
<rect x="243.10" y="518.34" width="7.26" height="3.60" fill="url(#hb30)"/>
<rect x="242.50" y="589.80" width="28.81" height="6.80" fill="#000000"/>
<rect x="243.10" y="590.80" width="26.81" height="3.80" fill="url(#hb31)"/>
<rect x="242.50" y="651.60" width="22.16" height="6.80" fill="#000000"/>
<rect x="243.10" y="652.60" width="20.16" height="3.80" fill="url(#hb32)"/>
<rect x="595.60" y="162.30" width="139.60" height="320.90" fill="#252525"/>
<line x1="595.60" y1="215.78" x2="735.20" y2="215.78" stroke="#929292" stroke-width="1" />
<line x1="595.60" y1="269.27" x2="735.20" y2="269.27" stroke="#929292" stroke-width="1" />
<line x1="595.60" y1="322.75" x2="735.20" y2="322.75" stroke="#929292" stroke-width="1" />
<line x1="595.60" y1="376.23" x2="735.20" y2="376.23" stroke="#929292" stroke-width="1" />
<line x1="595.60" y1="429.72" x2="735.20" y2="429.72" stroke="#929292" stroke-width="1" />
<rect x="595.6" y="162.3" width="139.60" height="320.90" fill="none" stroke="#9a9a9a" stroke-width="1.4"/>
<line x1="590.60" y1="162.30" x2="595.60" y2="162.30" stroke="#9a9a9a" stroke-width="1.2" />
<text x="574.60" y="169.50" font-size="16.5" fill="#e4e4e4" textLength="15.00" lengthAdjust="spacingAndGlyphs" >15</text>
<line x1="590.60" y1="215.78" x2="595.60" y2="215.78" stroke="#9a9a9a" stroke-width="1.2" />
<text x="574.60" y="222.98" font-size="16.5" fill="#e4e4e4" textLength="15.00" lengthAdjust="spacingAndGlyphs" >10</text>
<line x1="590.60" y1="269.27" x2="595.60" y2="269.27" stroke="#9a9a9a" stroke-width="1.2" />
<text x="582.00" y="276.47" font-size="16.5" fill="#e4e4e4" textLength="7.60" lengthAdjust="spacingAndGlyphs" >5</text>
<line x1="590.60" y1="322.75" x2="595.60" y2="322.75" stroke="#9a9a9a" stroke-width="1.2" />
<text x="582.00" y="329.95" font-size="16.5" fill="#e4e4e4" textLength="7.60" lengthAdjust="spacingAndGlyphs" >0</text>
<line x1="590.60" y1="376.23" x2="595.60" y2="376.23" stroke="#9a9a9a" stroke-width="1.2" />
<text x="577.20" y="383.43" font-size="16.5" fill="#e4e4e4" textLength="12.40" lengthAdjust="spacingAndGlyphs" >-5</text>
<line x1="590.60" y1="429.72" x2="595.60" y2="429.72" stroke="#9a9a9a" stroke-width="1.2" />
<text x="569.60" y="436.92" font-size="16.5" fill="#e4e4e4" textLength="20.00" lengthAdjust="spacingAndGlyphs" >-10</text>
<line x1="590.60" y1="483.20" x2="595.60" y2="483.20" stroke="#9a9a9a" stroke-width="1.2" />
<text x="569.60" y="490.40" font-size="16.5" fill="#e4e4e4" textLength="20.00" lengthAdjust="spacingAndGlyphs" >-15</text>
<line x1="595.60" y1="483.20" x2="595.60" y2="488.20" stroke="#9a9a9a" stroke-width="1.2" />
<line x1="735.20" y1="483.20" x2="735.20" y2="488.20" stroke="#9a9a9a" stroke-width="1.2" />
<text x="632.40" y="156.20" font-size="16.5" fill="#e4e4e4" textLength="40.00" lengthAdjust="spacingAndGlyphs" >DeltaL</text>
<text x="647.65" y="501.20" font-size="16.5" fill="#e4e4e4" textLength="35.50" lengthAdjust="spacingAndGlyphs" >100%</text>
<rect x="608.40" y="321.10" width="114.00" height="7.20" fill="#000"/>
<rect x="609.60" y="322.30" width="111.00" height="4.20" fill="url(#ybar)"/>
<rect x="786.70" y="162.30" width="139.50" height="320.90" fill="#252525"/>
<line x1="786.70" y1="215.78" x2="926.20" y2="215.78" stroke="#929292" stroke-width="1" />
<line x1="786.70" y1="269.27" x2="926.20" y2="269.27" stroke="#929292" stroke-width="1" />
<line x1="786.70" y1="322.75" x2="926.20" y2="322.75" stroke="#929292" stroke-width="1" />
<line x1="786.70" y1="376.23" x2="926.20" y2="376.23" stroke="#929292" stroke-width="1" />
<line x1="786.70" y1="429.72" x2="926.20" y2="429.72" stroke="#929292" stroke-width="1" />
<rect x="786.7" y="162.3" width="139.50" height="320.90" fill="none" stroke="#9a9a9a" stroke-width="1.4"/>
<line x1="781.70" y1="162.30" x2="786.70" y2="162.30" stroke="#9a9a9a" stroke-width="1.2" />
<text x="765.70" y="169.50" font-size="16.5" fill="#e4e4e4" textLength="15.00" lengthAdjust="spacingAndGlyphs" >15</text>
<line x1="781.70" y1="215.78" x2="786.70" y2="215.78" stroke="#9a9a9a" stroke-width="1.2" />
<text x="765.70" y="222.98" font-size="16.5" fill="#e4e4e4" textLength="15.00" lengthAdjust="spacingAndGlyphs" >10</text>
<line x1="781.70" y1="269.27" x2="786.70" y2="269.27" stroke="#9a9a9a" stroke-width="1.2" />
<text x="773.10" y="276.47" font-size="16.5" fill="#e4e4e4" textLength="7.60" lengthAdjust="spacingAndGlyphs" >5</text>
<line x1="781.70" y1="322.75" x2="786.70" y2="322.75" stroke="#9a9a9a" stroke-width="1.2" />
<text x="773.10" y="329.95" font-size="16.5" fill="#e4e4e4" textLength="7.60" lengthAdjust="spacingAndGlyphs" >0</text>
<line x1="781.70" y1="376.23" x2="786.70" y2="376.23" stroke="#9a9a9a" stroke-width="1.2" />
<text x="768.30" y="383.43" font-size="16.5" fill="#e4e4e4" textLength="12.40" lengthAdjust="spacingAndGlyphs" >-5</text>
<line x1="781.70" y1="429.72" x2="786.70" y2="429.72" stroke="#9a9a9a" stroke-width="1.2" />
<text x="760.70" y="436.92" font-size="16.5" fill="#e4e4e4" textLength="20.00" lengthAdjust="spacingAndGlyphs" >-10</text>
<line x1="781.70" y1="483.20" x2="786.70" y2="483.20" stroke="#9a9a9a" stroke-width="1.2" />
<text x="760.70" y="490.40" font-size="16.5" fill="#e4e4e4" textLength="20.00" lengthAdjust="spacingAndGlyphs" >-15</text>
<line x1="786.70" y1="483.20" x2="786.70" y2="488.20" stroke="#9a9a9a" stroke-width="1.2" />
<line x1="926.20" y1="483.20" x2="926.20" y2="488.20" stroke="#9a9a9a" stroke-width="1.2" />
<text x="822.45" y="156.20" font-size="16.5" fill="#e4e4e4" textLength="42.00" lengthAdjust="spacingAndGlyphs" >DeltaC</text>
<text x="838.70" y="501.20" font-size="16.5" fill="#e4e4e4" textLength="35.50" lengthAdjust="spacingAndGlyphs" >100%</text>
<rect x="799.50" y="268.60" width="114.00" height="54.70" fill="#000"/>
<rect x="800.70" y="269.80" width="111.00" height="51.70" fill="url(#ybar)"/>
<rect x="977.40" y="162.30" width="139.90" height="320.90" fill="#252525"/>
<line x1="977.40" y1="215.78" x2="1117.30" y2="215.78" stroke="#929292" stroke-width="1" />
<line x1="977.40" y1="269.27" x2="1117.30" y2="269.27" stroke="#929292" stroke-width="1" />
<line x1="977.40" y1="322.75" x2="1117.30" y2="322.75" stroke="#929292" stroke-width="1" />
<line x1="977.40" y1="376.23" x2="1117.30" y2="376.23" stroke="#929292" stroke-width="1" />
<line x1="977.40" y1="429.72" x2="1117.30" y2="429.72" stroke="#929292" stroke-width="1" />
<rect x="977.4" y="162.3" width="139.90" height="320.90" fill="none" stroke="#9a9a9a" stroke-width="1.4"/>
<line x1="972.40" y1="162.30" x2="977.40" y2="162.30" stroke="#9a9a9a" stroke-width="1.2" />
<text x="956.40" y="169.50" font-size="16.5" fill="#e4e4e4" textLength="15.00" lengthAdjust="spacingAndGlyphs" >15</text>
<line x1="972.40" y1="215.78" x2="977.40" y2="215.78" stroke="#9a9a9a" stroke-width="1.2" />
<text x="956.40" y="222.98" font-size="16.5" fill="#e4e4e4" textLength="15.00" lengthAdjust="spacingAndGlyphs" >10</text>
<line x1="972.40" y1="269.27" x2="977.40" y2="269.27" stroke="#9a9a9a" stroke-width="1.2" />
<text x="963.80" y="276.47" font-size="16.5" fill="#e4e4e4" textLength="7.60" lengthAdjust="spacingAndGlyphs" >5</text>
<line x1="972.40" y1="322.75" x2="977.40" y2="322.75" stroke="#9a9a9a" stroke-width="1.2" />
<text x="963.80" y="329.95" font-size="16.5" fill="#e4e4e4" textLength="7.60" lengthAdjust="spacingAndGlyphs" >0</text>
<line x1="972.40" y1="376.23" x2="977.40" y2="376.23" stroke="#9a9a9a" stroke-width="1.2" />
<text x="959.00" y="383.43" font-size="16.5" fill="#e4e4e4" textLength="12.40" lengthAdjust="spacingAndGlyphs" >-5</text>
<line x1="972.40" y1="429.72" x2="977.40" y2="429.72" stroke="#9a9a9a" stroke-width="1.2" />
<text x="951.40" y="436.92" font-size="16.5" fill="#e4e4e4" textLength="20.00" lengthAdjust="spacingAndGlyphs" >-10</text>
<line x1="972.40" y1="483.20" x2="977.40" y2="483.20" stroke="#9a9a9a" stroke-width="1.2" />
<text x="951.40" y="490.40" font-size="16.5" fill="#e4e4e4" textLength="20.00" lengthAdjust="spacingAndGlyphs" >-15</text>
<line x1="977.40" y1="483.20" x2="977.40" y2="488.20" stroke="#9a9a9a" stroke-width="1.2" />
<line x1="1117.30" y1="483.20" x2="1117.30" y2="488.20" stroke="#9a9a9a" stroke-width="1.2" />
<text x="1012.85" y="156.20" font-size="16.5" fill="#e4e4e4" textLength="43.00" lengthAdjust="spacingAndGlyphs" >DeltaH</text>
<text x="1029.60" y="501.20" font-size="16.5" fill="#e4e4e4" textLength="35.50" lengthAdjust="spacingAndGlyphs" >100%</text>
<rect x="990.20" y="321.30" width="114.00" height="13.20" fill="#000"/>
<rect x="991.40" y="322.50" width="111.00" height="10.20" fill="url(#ybar)"/>
<rect x="563.30" y="512.30" width="572.40" height="184.60" fill="#000000"/>
<rect x="583.40" y="520.30" width="96.30" height="149.90" fill="#c1c2a4"/>
<rect x="583.40" y="520.30" width="96.30" height="75.20" fill="#c2c3a5" shape-rendering="crispEdges"/>
<rect x="583.90" y="520.8" width="95.3" height="149" fill="none" stroke="#f4f4f4" stroke-width="1"/>
<text x="620.10" y="688.00" font-size="12" fill="#ffffff" textLength="23.00" lengthAdjust="spacingAndGlyphs" >20%</text>
<rect x="695.30" y="520.30" width="96.30" height="149.90" fill="#c1c184"/>
<rect x="695.30" y="520.30" width="96.30" height="75.20" fill="#c2c286" shape-rendering="crispEdges"/>
<rect x="695.80" y="520.8" width="95.3" height="149" fill="none" stroke="#f4f4f4" stroke-width="1"/>
<text x="732.00" y="688.00" font-size="12" fill="#ffffff" textLength="23.00" lengthAdjust="spacingAndGlyphs" >40%</text>
<rect x="807.20" y="520.30" width="96.30" height="149.90" fill="#c1c168"/>
<rect x="807.20" y="520.30" width="96.30" height="75.20" fill="#c2c26a" shape-rendering="crispEdges"/>
<rect x="807.70" y="520.8" width="95.3" height="149" fill="none" stroke="#f4f4f4" stroke-width="1"/>
<text x="843.90" y="688.00" font-size="12" fill="#ffffff" textLength="23.00" lengthAdjust="spacingAndGlyphs" >60%</text>
<rect x="919.10" y="520.30" width="96.30" height="149.90" fill="#c4c23a"/>
<rect x="919.10" y="520.30" width="96.30" height="75.20" fill="#c2c03c" shape-rendering="crispEdges"/>
<rect x="919.60" y="520.8" width="95.3" height="149" fill="none" stroke="#f4f4f4" stroke-width="1"/>
<text x="955.80" y="688.00" font-size="12" fill="#ffffff" textLength="23.00" lengthAdjust="spacingAndGlyphs" >80%</text>
<rect x="1031.00" y="520.30" width="96.30" height="149.90" fill="#c8c628"/>
<rect x="1031.00" y="520.30" width="96.30" height="75.20" fill="#c8c600" shape-rendering="crispEdges"/>
<rect x="1031.50" y="520.8" width="95.3" height="149" fill="none" stroke="#f4f4f4" stroke-width="1"/>
<text x="1064.20" y="688.00" font-size="12" fill="#ffffff" textLength="30.00" lengthAdjust="spacingAndGlyphs" >100%</text>
<text transform="translate(576,553.8) rotate(-90)" font-size="11" font-weight="bold" fill="#fff" text-anchor="middle" textLength="39" lengthAdjust="spacingAndGlyphs">Actual</text>
<text transform="translate(576,637.7) rotate(-90)" font-size="11" font-weight="bold" fill="#fff" text-anchor="middle" textLength="39" lengthAdjust="spacingAndGlyphs">Target</text>
<text x="249.40" y="748.40" font-size="32" fill="#f2f2f2" textLength="224.50" lengthAdjust="spacingAndGlyphs" >Avg dE2000: 2,03</text>
<text x="246.00" y="794.50" font-size="32" fill="#f2f2f2" textLength="232.50" lengthAdjust="spacingAndGlyphs" >Max dE2000: 5,45</text>
<text x="214.80" y="848.20" font-size="32.3" fill="#f2f2f2" textLength="211.00" lengthAdjust="spacingAndGlyphs" >Current Reading</text>
<text x="214.30" y="889.50" font-size="26.8" fill="#f2f2f2" textLength="99.00" lengthAdjust="spacingAndGlyphs" >x: 0,4315</text>
<text x="366.20" y="889.50" font-size="26.8" fill="#f2f2f2" textLength="85.50" lengthAdjust="spacingAndGlyphs" >y: 0,524</text>
<text x="214.30" y="935.20" font-size="26.8" fill="#f2f2f2" textLength="107.20" lengthAdjust="spacingAndGlyphs" >fL: 128,38</text>
<text x="214.30" y="974.70" font-size="26.8" fill="#f2f2f2" textLength="153.50" lengthAdjust="spacingAndGlyphs" >cd/m²: 439,85</text>
<rect x="542.50" y="756.50" width="246.10" height="205.00" fill="#252525"/>
<line x1="542.50" y1="792.30" x2="788.60" y2="792.30" stroke="#929292" stroke-width="1" />
<line x1="537.50" y1="792.30" x2="542.50" y2="792.30" stroke="#9a9a9a" stroke-width="1.2" />
<text x="521.50" y="798.10" font-size="16.5" fill="#e4e4e4" textLength="15.00" lengthAdjust="spacingAndGlyphs" >20</text>
<line x1="542.50" y1="860.00" x2="788.60" y2="860.00" stroke="#929292" stroke-width="1" />
<line x1="537.50" y1="860.00" x2="542.50" y2="860.00" stroke="#9a9a9a" stroke-width="1.2" />
<text x="528.90" y="865.80" font-size="16.5" fill="#e4e4e4" textLength="7.60" lengthAdjust="spacingAndGlyphs" >0</text>
<line x1="542.50" y1="927.90" x2="788.60" y2="927.90" stroke="#929292" stroke-width="1" />
<line x1="537.50" y1="927.90" x2="542.50" y2="927.90" stroke="#9a9a9a" stroke-width="1.2" />
<text x="516.50" y="933.70" font-size="16.5" fill="#e4e4e4" textLength="20.00" lengthAdjust="spacingAndGlyphs" >-20</text>
<rect x="542.5" y="756.5" width="246.10" height="205.00" fill="none" stroke="#9a9a9a" stroke-width="1.4"/>
<line x1="542.50" y1="961.50" x2="542.50" y2="967.50" stroke="#9a9a9a" stroke-width="1.2" />
<line x1="788.60" y1="961.50" x2="788.60" y2="967.50" stroke="#9a9a9a" stroke-width="1.2" />
<text x="611.70" y="750.50" font-size="16" fill="#e4e4e4" textLength="81.00" lengthAdjust="spacingAndGlyphs" >RGB Balance</text>
<text x="647.50" y="980.00" font-size="16" fill="#e4e4e4" textLength="35.00" lengthAdjust="spacingAndGlyphs" >100%</text>
<rect x="567.40" y="858.80" width="66.60" height="2.60" fill="#000"/>
<rect x="633.40" y="859.00" width="66.00" height="3.20" fill="#000"/>
<rect x="634.00" y="859.80" width="64.50" height="1.40" fill="#1a6a1a"/>
<rect x="698.60" y="859.40" width="66.60" height="95.80" fill="#000"/>
<rect x="699.80" y="860.40" width="64.20" height="93.60" fill="url(#bbar)"/>
<rect x="808.70" y="722.00" width="697.80" height="32.00" fill="url(#thd)"/>
<rect x="808.70" y="722.00" width="19.00" height="32.00" fill="#000"/>
<text x="988.90" y="743.80" font-size="17" fill="#f2f2f2" textLength="38.54" lengthAdjust="spacingAndGlyphs" font-family="'DejaVu Sans','Liberation Sans',sans-serif" stroke="#f2f2f2" stroke-width="0.2">20%</text>
<text x="1093.70" y="743.80" font-size="17" fill="#f2f2f2" textLength="38.54" lengthAdjust="spacingAndGlyphs" font-family="'DejaVu Sans','Liberation Sans',sans-serif" stroke="#f2f2f2" stroke-width="0.2">40%</text>
<text x="1198.50" y="743.80" font-size="17" fill="#f2f2f2" textLength="38.54" lengthAdjust="spacingAndGlyphs" font-family="'DejaVu Sans','Liberation Sans',sans-serif" stroke="#f2f2f2" stroke-width="0.2">60%</text>
<text x="1303.30" y="743.80" font-size="17" fill="#f2f2f2" textLength="38.54" lengthAdjust="spacingAndGlyphs" font-family="'DejaVu Sans','Liberation Sans',sans-serif" stroke="#f2f2f2" stroke-width="0.2">80%</text>
<text x="1408.10" y="743.80" font-size="17" fill="#f2f2f2" textLength="49.57" lengthAdjust="spacingAndGlyphs" font-family="'DejaVu Sans','Liberation Sans',sans-serif" stroke="#f2f2f2" stroke-width="0.2">100%</text>
<rect x="827.70" y="754.40" width="678.80" height="28.57" fill="url(#trd)"/>
<rect x="808.70" y="754.40" width="19.00" height="28.37" fill="url(#tlc)"/>
<text x="834.00" y="775.60" font-size="17" fill="#f4f4f4" textLength="79.26" lengthAdjust="spacingAndGlyphs" font-family="'DejaVu Sans','Liberation Sans',sans-serif" stroke="#f4f4f4" stroke-width="0.2">x: CIE31</text>
<text x="989.20" y="775.60" font-size="17" fill="#f4f4f4" textLength="65.73" lengthAdjust="spacingAndGlyphs" font-family="'DejaVu Sans','Liberation Sans',sans-serif" stroke="#f4f4f4" stroke-width="0.2">0,3366</text>
<text x="1094.00" y="775.60" font-size="17" fill="#f4f4f4" textLength="65.73" lengthAdjust="spacingAndGlyphs" font-family="'DejaVu Sans','Liberation Sans',sans-serif" stroke="#f4f4f4" stroke-width="0.2">0,3601</text>
<text x="1198.80" y="775.60" font-size="17" fill="#f4f4f4" textLength="65.73" lengthAdjust="spacingAndGlyphs" font-family="'DejaVu Sans','Liberation Sans',sans-serif" stroke="#f4f4f4" stroke-width="0.2">0,3825</text>
<text x="1303.60" y="775.60" font-size="17" fill="#f4f4f4" textLength="65.73" lengthAdjust="spacingAndGlyphs" font-family="'DejaVu Sans','Liberation Sans',sans-serif" stroke="#f4f4f4" stroke-width="0.2">0,4084</text>
<text x="1408.40" y="775.60" font-size="17" fill="#f4f4f4" textLength="65.73" lengthAdjust="spacingAndGlyphs" font-family="'DejaVu Sans','Liberation Sans',sans-serif" stroke="#f4f4f4" stroke-width="0.2">0,4315</text>
<rect x="827.70" y="783.67" width="678.80" height="28.57" fill="url(#trl)"/>
<rect x="808.70" y="783.67" width="19.00" height="28.37" fill="url(#tlc)"/>
<text x="834.00" y="804.87" font-size="17" fill="#ececec" textLength="77.86" lengthAdjust="spacingAndGlyphs" font-family="'DejaVu Sans','Liberation Sans',sans-serif" stroke="#ececec" stroke-width="0.2">y: CIE31</text>
<text x="989.20" y="804.87" font-size="17" fill="#ececec" textLength="65.73" lengthAdjust="spacingAndGlyphs" font-family="'DejaVu Sans','Liberation Sans',sans-serif" stroke="#ececec" stroke-width="0.2">0,3676</text>
<text x="1094.00" y="804.87" font-size="17" fill="#ececec" textLength="65.73" lengthAdjust="spacingAndGlyphs" font-family="'DejaVu Sans','Liberation Sans',sans-serif" stroke="#ececec" stroke-width="0.2">0,4064</text>
<text x="1198.80" y="804.87" font-size="17" fill="#ececec" textLength="65.73" lengthAdjust="spacingAndGlyphs" font-family="'DejaVu Sans','Liberation Sans',sans-serif" stroke="#ececec" stroke-width="0.2">0,4433</text>
<text x="1303.60" y="804.87" font-size="17" fill="#ececec" textLength="65.73" lengthAdjust="spacingAndGlyphs" font-family="'DejaVu Sans','Liberation Sans',sans-serif" stroke="#ececec" stroke-width="0.2">0,4860</text>
<text x="1408.40" y="804.87" font-size="17" fill="#ececec" textLength="65.73" lengthAdjust="spacingAndGlyphs" font-family="'DejaVu Sans','Liberation Sans',sans-serif" stroke="#ececec" stroke-width="0.2">0,5240</text>
<rect x="827.70" y="812.94" width="678.80" height="28.57" fill="url(#trd)"/>
<rect x="808.70" y="812.94" width="19.00" height="28.37" fill="url(#tlc)"/>
<text x="834.00" y="834.14" font-size="17" fill="#f4f4f4" textLength="11.68" lengthAdjust="spacingAndGlyphs" font-family="'DejaVu Sans','Liberation Sans',sans-serif" stroke="#f4f4f4" stroke-width="0.2">Y</text>
<text x="989.20" y="834.14" font-size="17" fill="#f4f4f4" textLength="89.63" lengthAdjust="spacingAndGlyphs" font-family="'DejaVu Sans','Liberation Sans',sans-serif" stroke="#f4f4f4" stroke-width="0.2">468,2262</text>
<text x="1094.00" y="834.14" font-size="17" fill="#f4f4f4" textLength="89.63" lengthAdjust="spacingAndGlyphs" font-family="'DejaVu Sans','Liberation Sans',sans-serif" stroke="#f4f4f4" stroke-width="0.2">458,7586</text>
<text x="1198.80" y="834.14" font-size="17" fill="#f4f4f4" textLength="89.63" lengthAdjust="spacingAndGlyphs" font-family="'DejaVu Sans','Liberation Sans',sans-serif" stroke="#f4f4f4" stroke-width="0.2">451,5202</text>
<text x="1303.60" y="834.14" font-size="17" fill="#f4f4f4" textLength="89.63" lengthAdjust="spacingAndGlyphs" font-family="'DejaVu Sans','Liberation Sans',sans-serif" stroke="#f4f4f4" stroke-width="0.2">444,8513</text>
<text x="1408.40" y="834.14" font-size="17" fill="#f4f4f4" textLength="89.63" lengthAdjust="spacingAndGlyphs" font-family="'DejaVu Sans','Liberation Sans',sans-serif" stroke="#f4f4f4" stroke-width="0.2">439,8498</text>
<rect x="827.70" y="842.21" width="678.80" height="28.57" fill="url(#trl)"/>
<rect x="808.70" y="842.21" width="19.00" height="28.37" fill="url(#tlc)"/>
<text x="834.00" y="863.41" font-size="17" fill="#ececec" textLength="138.42" lengthAdjust="spacingAndGlyphs" font-family="'DejaVu Sans','Liberation Sans',sans-serif" stroke="#ececec" stroke-width="0.2">Target x:CIE31</text>
<text x="989.20" y="863.41" font-size="17" fill="#ececec" textLength="65.73" lengthAdjust="spacingAndGlyphs" font-family="'DejaVu Sans','Liberation Sans',sans-serif" stroke="#ececec" stroke-width="0.2">0,3352</text>
<text x="1094.00" y="863.41" font-size="17" fill="#ececec" textLength="65.73" lengthAdjust="spacingAndGlyphs" font-family="'DejaVu Sans','Liberation Sans',sans-serif" stroke="#ececec" stroke-width="0.2">0,3587</text>
<text x="1198.80" y="863.41" font-size="17" fill="#ececec" textLength="65.73" lengthAdjust="spacingAndGlyphs" font-family="'DejaVu Sans','Liberation Sans',sans-serif" stroke="#ececec" stroke-width="0.2">0,3816</text>
<text x="1303.60" y="863.41" font-size="17" fill="#ececec" textLength="65.73" lengthAdjust="spacingAndGlyphs" font-family="'DejaVu Sans','Liberation Sans',sans-serif" stroke="#ececec" stroke-width="0.2">0,4048</text>
<text x="1408.40" y="863.41" font-size="17" fill="#ececec" textLength="65.73" lengthAdjust="spacingAndGlyphs" font-family="'DejaVu Sans','Liberation Sans',sans-serif" stroke="#ececec" stroke-width="0.2">0,4271</text>
<rect x="827.70" y="871.48" width="678.80" height="28.57" fill="url(#trd)"/>
<rect x="808.70" y="871.48" width="19.00" height="28.37" fill="url(#tlc)"/>
<text x="834.00" y="892.68" font-size="17" fill="#f4f4f4" textLength="137.03" lengthAdjust="spacingAndGlyphs" font-family="'DejaVu Sans','Liberation Sans',sans-serif" stroke="#f4f4f4" stroke-width="0.2">Target y:CIE31</text>
<text x="989.20" y="892.68" font-size="17" fill="#f4f4f4" textLength="65.73" lengthAdjust="spacingAndGlyphs" font-family="'DejaVu Sans','Liberation Sans',sans-serif" stroke="#f4f4f4" stroke-width="0.2">0,3662</text>
<text x="1094.00" y="892.68" font-size="17" fill="#f4f4f4" textLength="65.73" lengthAdjust="spacingAndGlyphs" font-family="'DejaVu Sans','Liberation Sans',sans-serif" stroke="#f4f4f4" stroke-width="0.2">0,4050</text>
<text x="1198.80" y="892.68" font-size="17" fill="#f4f4f4" textLength="65.73" lengthAdjust="spacingAndGlyphs" font-family="'DejaVu Sans','Liberation Sans',sans-serif" stroke="#f4f4f4" stroke-width="0.2">0,4429</text>
<text x="1303.60" y="892.68" font-size="17" fill="#f4f4f4" textLength="65.73" lengthAdjust="spacingAndGlyphs" font-family="'DejaVu Sans','Liberation Sans',sans-serif" stroke="#f4f4f4" stroke-width="0.2">0,4813</text>
<text x="1408.40" y="892.68" font-size="17" fill="#f4f4f4" textLength="65.73" lengthAdjust="spacingAndGlyphs" font-family="'DejaVu Sans','Liberation Sans',sans-serif" stroke="#f4f4f4" stroke-width="0.2">0,5181</text>
<rect x="827.70" y="900.75" width="678.80" height="28.57" fill="url(#trl)"/>
<rect x="808.70" y="900.75" width="19.00" height="28.37" fill="url(#tlc)"/>
<text x="834.00" y="921.95" font-size="17" fill="#ececec" textLength="76.93" lengthAdjust="spacingAndGlyphs" font-family="'DejaVu Sans','Liberation Sans',sans-serif" stroke="#ececec" stroke-width="0.2">Target Y</text>
<text x="989.20" y="921.95" font-size="17" fill="#ececec" textLength="89.63" lengthAdjust="spacingAndGlyphs" font-family="'DejaVu Sans','Liberation Sans',sans-serif" stroke="#ececec" stroke-width="0.2">470,8812</text>
<text x="1094.00" y="921.95" font-size="17" fill="#ececec" textLength="89.63" lengthAdjust="spacingAndGlyphs" font-family="'DejaVu Sans','Liberation Sans',sans-serif" stroke="#ececec" stroke-width="0.2">462,2133</text>
<text x="1198.80" y="921.95" font-size="17" fill="#ececec" textLength="89.63" lengthAdjust="spacingAndGlyphs" font-family="'DejaVu Sans','Liberation Sans',sans-serif" stroke="#ececec" stroke-width="0.2">455,4589</text>
<text x="1303.60" y="921.95" font-size="17" fill="#ececec" textLength="89.63" lengthAdjust="spacingAndGlyphs" font-family="'DejaVu Sans','Liberation Sans',sans-serif" stroke="#ececec" stroke-width="0.2">449,8352</text>
<text x="1408.40" y="921.95" font-size="17" fill="#ececec" textLength="89.63" lengthAdjust="spacingAndGlyphs" font-family="'DejaVu Sans','Liberation Sans',sans-serif" stroke="#ececec" stroke-width="0.2">445,3368</text>
<rect x="827.70" y="930.02" width="678.80" height="28.57" fill="url(#trd)"/>
<rect x="808.70" y="930.02" width="19.00" height="28.37" fill="url(#tlc)"/>
<text x="834.00" y="951.22" font-size="17" fill="#f4f4f4" textLength="79.92" lengthAdjust="spacingAndGlyphs" font-family="'DejaVu Sans','Liberation Sans',sans-serif" stroke="#f4f4f4" stroke-width="0.2">ΔE 2000</text>
<text x="989.20" y="951.22" font-size="17" fill="#f4f4f4" textLength="65.73" lengthAdjust="spacingAndGlyphs" font-family="'DejaVu Sans','Liberation Sans',sans-serif" stroke="#f4f4f4" stroke-width="0.2">0,4044</text>
<text x="1094.00" y="951.22" font-size="17" fill="#f4f4f4" textLength="65.73" lengthAdjust="spacingAndGlyphs" font-family="'DejaVu Sans','Liberation Sans',sans-serif" stroke="#f4f4f4" stroke-width="0.2">0,3278</text>
<text x="1198.80" y="951.22" font-size="17" fill="#f4f4f4" textLength="65.73" lengthAdjust="spacingAndGlyphs" font-family="'DejaVu Sans','Liberation Sans',sans-serif" stroke="#f4f4f4" stroke-width="0.2">0,2565</text>
<text x="1303.60" y="951.22" font-size="17" fill="#f4f4f4" textLength="65.73" lengthAdjust="spacingAndGlyphs" font-family="'DejaVu Sans','Liberation Sans',sans-serif" stroke="#f4f4f4" stroke-width="0.2">0,6959</text>
<text x="1408.40" y="951.22" font-size="17" fill="#f4f4f4" textLength="65.73" lengthAdjust="spacingAndGlyphs" font-family="'DejaVu Sans','Liberation Sans',sans-serif" stroke="#f4f4f4" stroke-width="0.2">1,0704</text>
<rect x="827.70" y="959.29" width="678.80" height="28.57" fill="url(#trl)"/>
<rect x="808.70" y="959.29" width="19.00" height="28.37" fill="url(#tlc)"/>
<text x="834.00" y="980.49" font-size="17" fill="#ececec" textLength="53.08" lengthAdjust="spacingAndGlyphs" font-family="'DejaVu Sans','Liberation Sans',sans-serif" stroke="#ececec" stroke-width="0.2">dEITP</text>
<text x="989.20" y="980.49" font-size="17" fill="#ececec" textLength="65.73" lengthAdjust="spacingAndGlyphs" font-family="'DejaVu Sans','Liberation Sans',sans-serif" stroke="#ececec" stroke-width="0.2">0,9486</text>
<text x="1094.00" y="980.49" font-size="17" fill="#ececec" textLength="65.73" lengthAdjust="spacingAndGlyphs" font-family="'DejaVu Sans','Liberation Sans',sans-serif" stroke="#ececec" stroke-width="0.2">1,0611</text>
<text x="1198.80" y="980.49" font-size="17" fill="#ececec" textLength="65.73" lengthAdjust="spacingAndGlyphs" font-family="'DejaVu Sans','Liberation Sans',sans-serif" stroke="#ececec" stroke-width="0.2">0,8479</text>
<text x="1303.60" y="980.49" font-size="17" fill="#ececec" textLength="65.73" lengthAdjust="spacingAndGlyphs" font-family="'DejaVu Sans','Liberation Sans',sans-serif" stroke="#ececec" stroke-width="0.2">3,7430</text>
<text x="1408.40" y="980.49" font-size="17" fill="#ececec" textLength="65.73" lengthAdjust="spacingAndGlyphs" font-family="'DejaVu Sans','Liberation Sans',sans-serif" stroke="#ececec" stroke-width="0.2">6,5986</text>
<rect x="1143.10" y="79.40" width="680.00" height="634.00" fill="#c8c402"/>
<rect x="1150.30" y="87.10" width="657.90" height="617.20" fill="#333333"/>
<rect x="1186.00" y="113.20" width="619.20" height="559.00" fill="#252525"/>
<text x="1438.00" y="108.20" font-size="16.5" fill="#e4e4e4" textLength="82.00" lengthAdjust="spacingAndGlyphs" >CIE 1976 u'v'</text>
<g clip-path="url(#plot)">
<g clip-path="url(#hs)">
<g clip-path="url(#hpG)" shape-rendering="crispEdges">
<path d="M1314.8 147.8L2180.6 -97.8L2209.2 248.0Z" fill="#990000"/>
<path d="M1314.8 147.8L2209.6 244.4L2208.3 255.8Z" fill="#990001"/>
<path d="M1314.8 147.8L2208.7 252.2L2207.3 263.6Z" fill="#990002"/>
<path d="M1314.8 147.8L2207.7 260.0L2206.2 271.4Z" fill="#990003"/>
<path d="M1314.8 147.8L2206.7 267.8L2205.1 279.2Z" fill="#990004"/>
<path d="M1314.8 147.8L2205.6 275.6L2203.9 286.9Z" fill="#990005"/>
<path d="M1314.8 147.8L2204.5 283.4L2202.7 294.7Z" fill="#990006"/>
<path d="M1314.8 147.8L2203.3 291.1L2201.4 302.4Z" fill="#990007"/>
<path d="M1314.8 147.8L2202.0 298.9L2200.0 310.2Z" fill="#990008"/>
<path d="M1314.8 147.8L2200.6 306.6L2198.5 317.9Z" fill="#990009"/>
<path d="M1314.8 147.8L2199.2 314.3L2197.0 325.6Z" fill="#99000b"/>
<path d="M1314.8 147.8L2197.7 322.1L2195.4 333.3Z" fill="#99000c"/>
<path d="M1314.8 147.8L2196.2 329.7L2193.8 341.0Z" fill="#99000d"/>
<path d="M1314.8 147.8L2194.6 337.4L2192.1 348.6Z" fill="#99000e"/>
<path d="M1314.8 147.8L2192.9 345.1L2190.3 356.3Z" fill="#99000f"/>
<path d="M1314.8 147.8L2191.1 352.8L2188.4 363.9Z" fill="#990010"/>
<path d="M1314.8 147.8L2189.3 360.4L2186.5 371.5Z" fill="#990012"/>
<path d="M1314.8 147.8L2187.4 368.0L2184.5 379.1Z" fill="#990013"/>
<path d="M1314.8 147.8L2185.4 375.6L2182.5 386.7Z" fill="#990014"/>
<path d="M1314.8 147.8L2183.4 383.2L2180.4 394.3Z" fill="#990015"/>
<path d="M1314.8 147.8L2181.3 390.8L2178.2 401.8Z" fill="#990016"/>
<path d="M1314.8 147.8L2179.2 398.3L2175.9 409.3Z" fill="#990018"/>
<path d="M1314.8 147.8L2177.0 405.9L2173.6 416.8Z" fill="#990019"/>
<path d="M1314.8 147.8L2174.7 413.4L2171.2 424.3Z" fill="#99001a"/>
<path d="M1314.8 147.8L2172.3 420.9L2168.8 431.8Z" fill="#99001b"/>
<path d="M1314.8 147.8L2169.9 428.4L2166.3 439.2Z" fill="#99001d"/>
<path d="M1314.8 147.8L2167.4 435.8L2163.7 446.6Z" fill="#99001e"/>
<path d="M1314.8 147.8L2164.9 443.2L2161.1 454.0Z" fill="#99001f"/>
<path d="M1314.8 147.8L2162.3 450.6L2158.4 461.4Z" fill="#990020"/>
<path d="M1314.8 147.8L2159.6 458.0L2155.6 468.8Z" fill="#990022"/>
<path d="M1314.8 147.8L2156.9 465.4L2152.8 476.1Z" fill="#990023"/>
<path d="M1314.8 147.8L2154.1 472.7L2149.9 483.4Z" fill="#990024"/>
<path d="M1314.8 147.8L2151.2 480.0L2146.9 490.7Z" fill="#990026"/>
<path d="M1314.8 147.8L2148.3 487.3L2143.9 497.9Z" fill="#990027"/>
<path d="M1314.8 147.8L2145.3 494.6L2140.8 505.1Z" fill="#990029"/>
<path d="M1314.8 147.8L2142.2 501.8L2137.6 512.3Z" fill="#99002a"/>
<path d="M1314.8 147.8L2139.1 509.0L2134.4 519.5Z" fill="#99002b"/>
<path d="M1314.8 147.8L2135.9 516.2L2131.2 526.6Z" fill="#99002d"/>
<path d="M1314.8 147.8L2132.7 523.4L2127.8 533.7Z" fill="#99002e"/>
<path d="M1314.8 147.8L2129.4 530.5L2124.4 540.8Z" fill="#990030"/>
<path d="M1314.8 147.8L2126.0 537.6L2121.0 547.9Z" fill="#990031"/>
<path d="M1314.8 147.8L2122.5 544.6L2117.4 554.9Z" fill="#990033"/>
<path d="M1314.8 147.8L2119.1 551.7L2113.9 561.9Z" fill="#990034"/>
<path d="M1314.8 147.8L2115.5 558.7L2110.2 568.8Z" fill="#990036"/>
<path d="M1314.8 147.8L2111.9 565.7L2106.5 575.8Z" fill="#990037"/>
<path d="M1314.8 147.8L2108.2 572.6L2102.7 582.7Z" fill="#990039"/>
<path d="M1314.8 147.8L2104.5 579.5L2098.9 589.5Z" fill="#99003a"/>
<path d="M1314.8 147.8L2100.7 586.4L2095.0 596.3Z" fill="#99003c"/>
<path d="M1314.8 147.8L2096.8 593.2L2091.1 603.1Z" fill="#99003e"/>
<path d="M1314.8 147.8L2092.9 600.0L2087.1 609.9Z" fill="#99003f"/>
<path d="M1314.8 147.8L2088.9 606.8L2083.0 616.6Z" fill="#990041"/>
<path d="M1314.8 147.8L2084.9 613.5L2078.9 623.3Z" fill="#990043"/>
<path d="M1314.8 147.8L2080.8 620.2L2074.7 629.9Z" fill="#990044"/>
<path d="M1314.8 147.8L2076.6 626.9L2070.5 636.6Z" fill="#990046"/>
<path d="M1314.8 147.8L2072.4 633.5L2066.2 643.1Z" fill="#990048"/>
<path d="M1314.8 147.8L2068.2 640.1L2061.8 649.7Z" fill="#99004a"/>
<path d="M1314.8 147.8L2063.8 646.7L2057.4 656.2Z" fill="#99004c"/>
<path d="M1314.8 147.8L2059.5 653.2L2053.0 662.6Z" fill="#99004d"/>
<path d="M1314.8 147.8L2055.0 659.7L2048.4 669.1Z" fill="#99004f"/>
<path d="M1314.8 147.8L2050.5 666.1L2043.9 675.4Z" fill="#990051"/>
<path d="M1314.8 147.8L2046.0 672.5L2039.2 681.8Z" fill="#990053"/>
<path d="M1314.8 147.8L2041.4 678.9L2034.6 688.1Z" fill="#990055"/>
<path d="M1314.8 147.8L2036.7 685.2L2029.8 694.3Z" fill="#990057"/>
<path d="M1314.8 147.8L2032.0 691.5L2025.0 700.6Z" fill="#990059"/>
<path d="M1314.8 147.8L2027.2 697.7L2020.2 706.7Z" fill="#99005b"/>
<path d="M1314.8 147.8L2022.4 703.9L2015.3 712.9Z" fill="#99005d"/>
<path d="M1314.8 147.8L2017.5 710.1L2010.3 719.0Z" fill="#990060"/>
<path d="M1314.8 147.8L2012.6 716.2L2005.3 725.0Z" fill="#990062"/>
<path d="M1314.8 147.8L2007.6 722.3L2000.2 731.0Z" fill="#990064"/>
<path d="M1314.8 147.8L2002.6 728.3L1995.1 737.0Z" fill="#990066"/>
<path d="M1314.8 147.8L1997.5 734.3L1989.9 742.9Z" fill="#990069"/>
<path d="M1314.8 147.8L1992.3 740.2L1984.7 748.8Z" fill="#99006b"/>
<path d="M1314.8 147.8L1987.1 746.1L1979.5 754.6Z" fill="#99006d"/>
<path d="M1314.8 147.8L1981.9 751.9L1974.1 760.4Z" fill="#990070"/>
<path d="M1314.8 147.8L1976.6 757.7L1968.8 766.1Z" fill="#990072"/>
<path d="M1314.8 147.8L1971.2 763.5L1963.3 771.8Z" fill="#990075"/>
<path d="M1314.8 147.8L1965.8 769.2L1957.9 777.4Z" fill="#990078"/>
<path d="M1314.8 147.8L1960.4 774.8L1952.4 783.0Z" fill="#99007a"/>
<path d="M1314.8 147.8L1954.9 780.5L1946.8 788.5Z" fill="#99007d"/>
<path d="M1314.8 147.8L1949.3 786.0L1941.2 794.0Z" fill="#990080"/>
<path d="M1314.8 147.8L1943.7 791.5L1935.5 799.5Z" fill="#990083"/>
<path d="M1314.8 147.8L1938.1 797.0L1929.8 804.9Z" fill="#990086"/>
<path d="M1314.8 147.8L1932.4 802.4L1924.0 810.2Z" fill="#990089"/>
<path d="M1314.8 147.8L1926.7 807.8L1918.2 815.5Z" fill="#99008c"/>
<path d="M1314.8 147.8L1920.9 813.1L1912.4 820.7Z" fill="#99008f"/>
<path d="M1314.8 147.8L1915.1 818.3L1906.5 825.9Z" fill="#990093"/>
<path d="M1314.8 147.8L1909.2 823.6L1900.5 831.1Z" fill="#990096"/>
<path d="M1314.8 147.8L1903.3 828.7L1894.6 836.2Z" fill="#990099"/>
<path d="M1314.8 147.8L1897.3 833.8L1888.5 841.2Z" fill="#950099"/>
<path d="M1314.8 147.8L1891.3 838.9L1882.5 846.2Z" fill="#920099"/>
<path d="M1314.8 147.8L1885.3 843.9L1876.3 851.1Z" fill="#8e0099"/>
<path d="M1314.8 147.8L1879.2 848.8L1870.2 856.0Z" fill="#8b0099"/>
<path d="M1314.8 147.8L1873.0 853.7L1864.0 860.8Z" fill="#880099"/>
<path d="M1314.8 147.8L1866.8 858.6L1857.7 865.6Z" fill="#850099"/>
<path d="M1314.8 147.8L1860.6 863.4L1851.5 870.3Z" fill="#820099"/>
<path d="M1314.8 147.8L1854.3 868.1L1845.1 874.9Z" fill="#7e0099"/>
<path d="M1314.8 147.8L1848.0 872.8L1838.8 879.5Z" fill="#7b0099"/>
<path d="M1314.8 147.8L1841.7 877.4L1832.4 884.1Z" fill="#780099"/>
<path d="M1314.8 147.8L1835.3 882.0L1825.9 888.6Z" fill="#760099"/>
<path d="M1314.8 147.8L1828.9 886.5L1819.4 893.0Z" fill="#730099"/>
<path d="M1314.8 147.8L1822.4 891.0L1812.9 897.4Z" fill="#700099"/>
<path d="M1314.8 147.8L1815.9 895.4L1806.4 901.7Z" fill="#6d0099"/>
<path d="M1314.8 147.8L1809.4 899.7L1799.8 905.9Z" fill="#6a0099"/>
<path d="M1314.8 147.8L1802.8 904.0L1793.1 910.2Z" fill="#680099"/>
<path d="M1314.8 147.8L1796.2 908.2L1786.5 914.3Z" fill="#650099"/>
<path d="M1314.8 147.8L1789.5 912.4L1779.7 918.4Z" fill="#620099"/>
<path d="M1314.8 147.8L1782.8 916.5L1773.0 922.4Z" fill="#600099"/>
<path d="M1314.8 147.8L1776.1 920.6L1766.2 926.4Z" fill="#5d0099"/>
<path d="M1314.8 147.8L1769.3 924.6L1759.4 930.3Z" fill="#5b0099"/>
<path d="M1314.8 147.8L1762.5 928.5L1752.6 934.1Z" fill="#580099"/>
<path d="M1314.8 147.8L1755.7 932.4L1745.7 937.9Z" fill="#560099"/>
<path d="M1314.8 147.8L1748.8 936.2L1738.8 941.7Z" fill="#530099"/>
<path d="M1314.8 147.8L1742.0 940.0L1731.8 945.3Z" fill="#510099"/>
<path d="M1314.8 147.8L1735.0 943.7L1724.9 948.9Z" fill="#4e0099"/>
<path d="M1314.8 147.8L1728.1 947.3L1717.9 952.5Z" fill="#4c0099"/>
<path d="M1314.8 147.8L1721.1 950.9L1710.8 956.0Z" fill="#4a0099"/>
<path d="M1314.8 147.8L1714.0 954.4L1703.7 959.4Z" fill="#470099"/>
<path d="M1314.8 147.8L1707.0 957.8L1696.6 962.8Z" fill="#450099"/>
<path d="M1314.8 147.8L1699.9 961.2L1689.5 966.1Z" fill="#430099"/>
<path d="M1314.8 147.8L1692.8 964.6L1682.4 969.3Z" fill="#410099"/>
<path d="M1314.8 147.8L1685.7 967.8L1675.2 972.5Z" fill="#3e0099"/>
<path d="M1314.8 147.8L1678.5 971.0L1668.0 975.6Z" fill="#3c0099"/>
<path d="M1314.8 147.8L1671.3 974.2L1660.7 978.6Z" fill="#3a0099"/>
<path d="M1314.8 147.8L1664.1 977.3L1653.5 981.6Z" fill="#380099"/>
<path d="M1314.8 147.8L1656.8 980.3L1646.2 984.6Z" fill="#360099"/>
<path d="M1314.8 147.8L1649.5 983.2L1638.9 987.4Z" fill="#340099"/>
<path d="M1314.8 147.8L1642.2 986.1L1631.5 990.2Z" fill="#320099"/>
<path d="M1314.8 147.8L1634.9 988.9L1624.2 993.0Z" fill="#2f0099"/>
<path d="M1314.8 147.8L1627.5 991.7L1616.8 995.6Z" fill="#2d0099"/>
<path d="M1314.8 147.8L1620.2 994.4L1609.4 998.2Z" fill="#2b0099"/>
<path d="M1314.8 147.8L1612.8 997.0L1601.9 1000.8Z" fill="#290099"/>
<path d="M1314.8 147.8L1605.3 999.6L1594.5 1003.2Z" fill="#270099"/>
<path d="M1314.8 147.8L1597.9 1002.1L1587.0 1005.6Z" fill="#250099"/>
<path d="M1314.8 147.8L1590.4 1004.5L1579.5 1008.0Z" fill="#230099"/>
<path d="M1314.8 147.8L1583.0 1006.9L1572.0 1010.3Z" fill="#210099"/>
<path d="M1314.8 147.8L1575.4 1009.2L1564.5 1012.5Z" fill="#200099"/>
<path d="M1314.8 147.8L1567.9 1011.5L1556.9 1014.6Z" fill="#1e0099"/>
<path d="M1314.8 147.8L1560.4 1013.6L1549.3 1016.7Z" fill="#1c0099"/>
<path d="M1314.8 147.8L1552.8 1015.8L1541.7 1018.7Z" fill="#1a0099"/>
<path d="M1314.8 147.8L1545.2 1017.8L1534.1 1020.7Z" fill="#180099"/>
<path d="M1314.8 147.8L1537.6 1019.8L1526.5 1022.5Z" fill="#160099"/>
<path d="M1314.8 147.8L1530.0 1021.7L1518.9 1024.4Z" fill="#140099"/>
<path d="M1314.8 147.8L1522.4 1023.5L1511.2 1026.1Z" fill="#120099"/>
<path d="M1314.8 147.8L1514.7 1025.3L1503.5 1027.8Z" fill="#110099"/>
<path d="M1314.8 147.8L1507.1 1027.0L1495.8 1029.4Z" fill="#0f0099"/>
<path d="M1314.8 147.8L1499.4 1028.7L1488.1 1030.9Z" fill="#0d0099"/>
<path d="M1314.8 147.8L1491.7 1030.2L1480.4 1032.4Z" fill="#0b0099"/>
<path d="M1314.8 147.8L1484.0 1031.8L1472.7 1033.8Z" fill="#090099"/>
<path d="M1314.8 147.8L1476.3 1033.2L1465.0 1035.2Z" fill="#070099"/>
<path d="M1314.8 147.8L1468.5 1034.6L1457.2 1036.5Z" fill="#060099"/>
<path d="M1314.8 147.8L1460.8 1035.9L1449.5 1037.7Z" fill="#040099"/>
<path d="M1314.8 147.8L1453.0 1037.1L1441.7 1038.8Z" fill="#020099"/>
<path d="M1314.8 147.8L1445.3 1038.3L1091.1 1019.6Z" fill="#000099"/>
</g>
<g clip-path="url(#hpR)" shape-rendering="crispEdges">
<path d="M1649.7 184.7L1376.0 1042.0L1066.0 869.7Z" fill="#000099"/>
<path d="M1649.7 184.7L1068.8 872.0L1060.1 864.6Z" fill="#000199"/>
<path d="M1649.7 184.7L1062.8 866.9L1054.2 859.4Z" fill="#000299"/>
<path d="M1649.7 184.7L1056.9 861.8L1042.5 848.9Z" fill="#000399"/>
<path d="M1649.7 184.7L1045.1 851.3L1036.7 843.6Z" fill="#000499"/>
<path d="M1649.7 184.7L1039.3 846.0L1031.0 838.2Z" fill="#000599"/>
<path d="M1649.7 184.7L1033.6 840.7L1025.3 832.8Z" fill="#000699"/>
<path d="M1649.7 184.7L1027.9 835.3L1019.7 827.3Z" fill="#000799"/>
<path d="M1649.7 184.7L1022.2 829.8L1008.5 816.2Z" fill="#000899"/>
<path d="M1649.7 184.7L1011.1 818.8L1003.1 810.6Z" fill="#000999"/>
<path d="M1649.7 184.7L1005.6 813.2L997.6 804.9Z" fill="#000a99"/>
<path d="M1649.7 184.7L1000.1 807.5L992.2 799.2Z" fill="#000b99"/>
<path d="M1649.7 184.7L994.7 801.8L986.9 793.4Z" fill="#000c99"/>
<path d="M1649.7 184.7L989.3 796.1L981.6 787.6Z" fill="#000d99"/>
<path d="M1649.7 184.7L984.0 790.3L976.4 781.8Z" fill="#000e99"/>
<path d="M1649.7 184.7L978.8 784.5L971.2 775.9Z" fill="#000f99"/>
<path d="M1649.7 184.7L973.6 778.6L966.0 769.9Z" fill="#001099"/>
<path d="M1649.7 184.7L968.4 772.7L961.0 763.9Z" fill="#001199"/>
<path d="M1649.7 184.7L963.3 766.7L955.9 757.9Z" fill="#001299"/>
<path d="M1649.7 184.7L958.2 760.7L951.0 751.8Z" fill="#001399"/>
<path d="M1649.7 184.7L953.2 754.6L946.0 745.7Z" fill="#001499"/>
<path d="M1649.7 184.7L948.3 748.5L941.2 739.6Z" fill="#001599"/>
<path d="M1649.7 184.7L943.4 742.4L936.4 733.4Z" fill="#001699"/>
<path d="M1649.7 184.7L938.6 736.2L931.6 727.1Z" fill="#001799"/>
<path d="M1649.7 184.7L933.8 730.0L926.9 720.8Z" fill="#001899"/>
<path d="M1649.7 184.7L929.0 723.7L922.2 714.5Z" fill="#001999"/>
<path d="M1649.7 184.7L924.4 717.4L917.6 708.1Z" fill="#001a99"/>
<path d="M1649.7 184.7L919.7 711.0L913.1 701.7Z" fill="#001c99"/>
<path d="M1649.7 184.7L915.2 704.7L908.6 695.3Z" fill="#001d99"/>
<path d="M1649.7 184.7L910.7 698.2L904.2 688.8Z" fill="#001e99"/>
<path d="M1649.7 184.7L906.2 691.8L899.8 682.3Z" fill="#001f99"/>
<path d="M1649.7 184.7L901.8 685.2L895.5 675.7Z" fill="#002199"/>
<path d="M1649.7 184.7L897.5 678.7L891.2 669.1Z" fill="#002299"/>
<path d="M1649.7 184.7L893.2 672.1L887.0 662.4Z" fill="#002399"/>
<path d="M1649.7 184.7L889.0 665.5L882.9 655.8Z" fill="#002599"/>
<path d="M1649.7 184.7L884.8 658.8L878.8 649.1Z" fill="#002699"/>
<path d="M1649.7 184.7L880.7 652.1L874.8 642.3Z" fill="#002799"/>
<path d="M1649.7 184.7L876.6 645.4L870.8 635.5Z" fill="#002999"/>
<path d="M1649.7 184.7L872.6 638.7L866.9 628.7Z" fill="#002a99"/>
<path d="M1649.7 184.7L868.7 631.9L863.1 621.9Z" fill="#002c99"/>
<path d="M1649.7 184.7L864.8 625.0L859.3 615.0Z" fill="#002d99"/>
<path d="M1649.7 184.7L861.0 618.2L855.6 608.1Z" fill="#002f99"/>
<path d="M1649.7 184.7L857.3 611.3L851.9 601.1Z" fill="#003199"/>
<path d="M1649.7 184.7L853.6 604.3L848.3 594.2Z" fill="#003299"/>
<path d="M1649.7 184.7L850.0 597.4L844.8 587.1Z" fill="#003499"/>
<path d="M1649.7 184.7L846.4 590.4L841.3 580.1Z" fill="#003699"/>
<path d="M1649.7 184.7L842.9 583.3L837.9 573.0Z" fill="#003899"/>
<path d="M1649.7 184.7L839.4 576.3L834.5 565.9Z" fill="#003999"/>
<path d="M1649.7 184.7L836.0 569.2L831.2 558.8Z" fill="#003b99"/>
<path d="M1649.7 184.7L832.7 562.1L828.0 551.7Z" fill="#003d99"/>
<path d="M1649.7 184.7L829.4 554.9L824.8 544.5Z" fill="#003f99"/>
<path d="M1649.7 184.7L826.2 547.8L821.7 537.3Z" fill="#004299"/>
<path d="M1649.7 184.7L823.1 540.6L818.6 530.0Z" fill="#004499"/>
<path d="M1649.7 184.7L820.0 533.3L815.7 522.7Z" fill="#004699"/>
<path d="M1649.7 184.7L817.0 526.1L812.7 515.5Z" fill="#004899"/>
<path d="M1649.7 184.7L814.1 518.8L809.9 508.1Z" fill="#004b99"/>
<path d="M1649.7 184.7L811.2 511.5L807.1 500.8Z" fill="#004d99"/>
<path d="M1649.7 184.7L808.4 504.2L804.4 493.4Z" fill="#005099"/>
<path d="M1649.7 184.7L805.6 496.8L801.7 486.0Z" fill="#005299"/>
<path d="M1649.7 184.7L802.9 489.4L799.1 478.6Z" fill="#005599"/>
<path d="M1649.7 184.7L800.3 482.0L796.6 471.2Z" fill="#005899"/>
<path d="M1649.7 184.7L797.7 474.6L794.1 463.7Z" fill="#005b99"/>
<path d="M1649.7 184.7L795.2 467.2L791.7 456.3Z" fill="#005e99"/>
<path d="M1649.7 184.7L792.8 459.7L789.4 448.8Z" fill="#006199"/>
<path d="M1649.7 184.7L790.4 452.2L787.1 441.2Z" fill="#006499"/>
<path d="M1649.7 184.7L788.1 444.7L784.9 433.7Z" fill="#006899"/>
<path d="M1649.7 184.7L785.9 437.2L782.8 426.2Z" fill="#006b99"/>
<path d="M1649.7 184.7L783.7 429.6L780.7 418.6Z" fill="#006f99"/>
<path d="M1649.7 184.7L781.6 422.1L778.7 411.0Z" fill="#007399"/>
<path d="M1649.7 184.7L779.6 414.5L776.7 403.4Z" fill="#007799"/>
<path d="M1649.7 184.7L777.6 406.9L774.9 395.7Z" fill="#007c99"/>
<path d="M1649.7 184.7L775.7 399.2L773.0 388.1Z" fill="#008099"/>
<path d="M1649.7 184.7L773.9 391.6L771.3 380.4Z" fill="#008599"/>
<path d="M1649.7 184.7L772.1 384.0L769.6 372.8Z" fill="#008a99"/>
<path d="M1649.7 184.7L770.4 376.3L768.0 365.1Z" fill="#008f99"/>
<path d="M1649.7 184.7L768.7 368.6L766.5 357.4Z" fill="#009599"/>
<path d="M1649.7 184.7L767.2 360.9L765.0 349.7Z" fill="#009998"/>
<path d="M1649.7 184.7L765.7 353.2L763.6 341.9Z" fill="#009992"/>
<path d="M1649.7 184.7L764.2 345.5L762.3 334.2Z" fill="#00998c"/>
<path d="M1649.7 184.7L762.9 337.8L761.0 326.5Z" fill="#009987"/>
<path d="M1649.7 184.7L761.6 330.0L759.8 318.7Z" fill="#009981"/>
<path d="M1649.7 184.7L760.3 322.3L758.7 310.9Z" fill="#00997c"/>
<path d="M1649.7 184.7L759.2 314.5L757.6 303.1Z" fill="#009976"/>
<path d="M1649.7 184.7L758.1 306.7L756.6 295.4Z" fill="#009971"/>
<path d="M1649.7 184.7L757.0 298.9L755.7 287.6Z" fill="#00996c"/>
<path d="M1649.7 184.7L756.1 291.1L754.8 279.7Z" fill="#009967"/>
<path d="M1649.7 184.7L755.2 283.3L754.0 271.9Z" fill="#009962"/>
<path d="M1649.7 184.7L754.3 275.5L753.3 264.1Z" fill="#00995d"/>
<path d="M1649.7 184.7L753.6 267.7L752.6 256.3Z" fill="#009959"/>
<path d="M1649.7 184.7L752.9 259.9L752.0 248.5Z" fill="#009954"/>
<path d="M1649.7 184.7L752.3 252.0L751.5 240.6Z" fill="#009950"/>
<path d="M1649.7 184.7L751.7 244.2L751.0 232.8Z" fill="#00994b"/>
<path d="M1649.7 184.7L751.2 236.4L750.7 224.9Z" fill="#009947"/>
<path d="M1649.7 184.7L750.8 228.5L750.3 217.1Z" fill="#009942"/>
<path d="M1649.7 184.7L750.5 220.7L750.1 209.2Z" fill="#00993e"/>
<path d="M1649.7 184.7L750.2 212.8L749.9 201.4Z" fill="#00993a"/>
<path d="M1649.7 184.7L750.0 205.0L749.8 193.5Z" fill="#009936"/>
<path d="M1649.7 184.7L749.8 197.1L749.7 185.7Z" fill="#009932"/>
<path d="M1649.7 184.7L749.8 189.3L749.8 177.8Z" fill="#00992e"/>
<path d="M1649.7 184.7L749.8 181.4L749.9 170.0Z" fill="#00992a"/>
<path d="M1649.7 184.7L749.8 173.6L750.0 162.1Z" fill="#009926"/>
<path d="M1649.7 184.7L749.9 165.7L750.3 154.3Z" fill="#009922"/>
<path d="M1649.7 184.7L750.1 157.9L750.6 146.4Z" fill="#00991e"/>
<path d="M1649.7 184.7L750.4 150.0L750.9 138.6Z" fill="#00991a"/>
<path d="M1649.7 184.7L750.8 142.2L751.4 130.7Z" fill="#009917"/>
<path d="M1649.7 184.7L751.2 134.3L751.9 122.9Z" fill="#009913"/>
<path d="M1649.7 184.7L751.6 126.5L752.4 115.1Z" fill="#00990f"/>
<path d="M1649.7 184.7L752.2 118.7L753.1 107.2Z" fill="#00990c"/>
<path d="M1649.7 184.7L752.8 110.8L753.8 99.4Z" fill="#009908"/>
<path d="M1649.7 184.7L753.5 103.0L754.6 91.6Z" fill="#009905"/>
<path d="M1649.7 184.7L754.2 95.2L755.4 83.8Z" fill="#009901"/>
<path d="M1649.7 184.7L755.0 87.4L858.3 -243.9Z" fill="#009900"/>
</g>
<g clip-path="url(#hpB)" shape-rendering="crispEdges">
<path d="M1366.6 524.2L917.2 -255.5L1245.5 -367.6Z" fill="#009900"/>
<path d="M1366.6 524.2L1242.0 -367.1L1253.3 -368.6Z" fill="#029900"/>
<path d="M1366.6 524.2L1249.8 -368.2L1261.1 -369.6Z" fill="#079900"/>
<path d="M1366.6 524.2L1257.6 -369.2L1268.9 -370.5Z" fill="#0c9900"/>
<path d="M1366.6 524.2L1265.4 -370.1L1276.7 -371.3Z" fill="#119900"/>
<path d="M1366.6 524.2L1273.2 -370.9L1284.6 -372.0Z" fill="#179900"/>
<path d="M1366.6 524.2L1281.0 -371.7L1292.4 -372.7Z" fill="#1c9900"/>
<path d="M1366.6 524.2L1288.8 -372.4L1300.2 -373.3Z" fill="#219900"/>
<path d="M1366.6 524.2L1296.6 -373.1L1308.1 -373.9Z" fill="#279900"/>
<path d="M1366.6 524.2L1304.5 -373.6L1315.9 -374.4Z" fill="#2c9900"/>
<path d="M1366.6 524.2L1312.3 -374.1L1323.7 -374.8Z" fill="#329900"/>
<path d="M1366.6 524.2L1320.1 -374.6L1331.6 -375.1Z" fill="#389900"/>
<path d="M1366.6 524.2L1328.0 -375.0L1339.4 -375.4Z" fill="#3e9900"/>
<path d="M1366.6 524.2L1335.8 -375.3L1347.3 -375.6Z" fill="#449900"/>
<path d="M1366.6 524.2L1343.7 -375.5L1355.1 -375.7Z" fill="#4a9900"/>
<path d="M1366.6 524.2L1351.5 -375.7L1363.0 -375.8Z" fill="#509900"/>
<path d="M1366.6 524.2L1359.4 -375.8L1370.8 -375.8Z" fill="#569900"/>
<path d="M1366.6 524.2L1367.2 -375.8L1378.7 -375.7Z" fill="#5d9900"/>
<path d="M1366.6 524.2L1375.1 -375.7L1386.5 -375.6Z" fill="#649900"/>
<path d="M1366.6 524.2L1382.9 -375.6L1394.4 -375.4Z" fill="#6a9900"/>
<path d="M1366.6 524.2L1390.8 -375.5L1402.2 -375.1Z" fill="#719900"/>
<path d="M1366.6 524.2L1398.6 -375.2L1410.1 -374.7Z" fill="#789900"/>
<path d="M1366.6 524.2L1406.5 -374.9L1417.9 -374.3Z" fill="#809900"/>
<path d="M1366.6 524.2L1414.3 -374.5L1425.8 -373.8Z" fill="#879900"/>
<path d="M1366.6 524.2L1422.2 -374.1L1433.6 -373.3Z" fill="#8f9900"/>
<path d="M1366.6 524.2L1430.0 -373.6L1441.4 -372.7Z" fill="#969900"/>
<path d="M1366.6 524.2L1437.9 -373.0L1449.3 -372.0Z" fill="#999400"/>
<path d="M1366.6 524.2L1445.7 -372.3L1457.1 -371.2Z" fill="#998c00"/>
<path d="M1366.6 524.2L1453.5 -371.6L1464.9 -370.4Z" fill="#998600"/>
<path d="M1366.6 524.2L1461.3 -370.8L1472.7 -369.5Z" fill="#997f00"/>
<path d="M1366.6 524.2L1469.1 -369.9L1480.5 -368.6Z" fill="#997a00"/>
<path d="M1366.6 524.2L1476.9 -369.0L1488.3 -367.5Z" fill="#997400"/>
<path d="M1366.6 524.2L1484.7 -368.0L1496.1 -366.4Z" fill="#996f00"/>
<path d="M1366.6 524.2L1492.5 -366.9L1503.8 -365.3Z" fill="#996a00"/>
<path d="M1366.6 524.2L1500.3 -365.8L1511.6 -364.0Z" fill="#996600"/>
<path d="M1366.6 524.2L1508.0 -364.6L1519.3 -362.7Z" fill="#996100"/>
<path d="M1366.6 524.2L1515.8 -363.3L1527.1 -361.4Z" fill="#995d00"/>
<path d="M1366.6 524.2L1523.5 -362.0L1534.8 -359.9Z" fill="#995900"/>
<path d="M1366.6 524.2L1531.2 -360.6L1542.5 -358.4Z" fill="#995600"/>
<path d="M1366.6 524.2L1539.0 -359.1L1550.2 -356.9Z" fill="#995200"/>
<path d="M1366.6 524.2L1546.7 -357.6L1557.9 -355.2Z" fill="#994f00"/>
<path d="M1366.6 524.2L1554.3 -356.0L1565.5 -353.5Z" fill="#994c00"/>
<path d="M1366.6 524.2L1562.0 -354.3L1573.2 -351.8Z" fill="#994900"/>
<path d="M1366.6 524.2L1569.7 -352.6L1580.8 -349.9Z" fill="#994600"/>
<path d="M1366.6 524.2L1577.3 -350.8L1588.4 -348.0Z" fill="#994300"/>
<path d="M1366.6 524.2L1585.0 -348.9L1596.0 -346.1Z" fill="#994100"/>
<path d="M1366.6 524.2L1592.6 -347.0L1603.6 -344.0Z" fill="#993e00"/>
<path d="M1366.6 524.2L1600.2 -345.0L1611.2 -341.9Z" fill="#993c00"/>
<path d="M1366.6 524.2L1607.7 -342.9L1618.7 -339.8Z" fill="#993900"/>
<path d="M1366.6 524.2L1615.3 -340.8L1626.3 -337.5Z" fill="#993700"/>
<path d="M1366.6 524.2L1622.8 -338.6L1633.8 -335.2Z" fill="#993500"/>
<path d="M1366.6 524.2L1630.3 -336.3L1641.3 -332.9Z" fill="#993300"/>
<path d="M1366.6 524.2L1637.8 -334.0L1648.7 -330.4Z" fill="#993100"/>
<path d="M1366.6 524.2L1645.3 -331.6L1656.2 -327.9Z" fill="#992f00"/>
<path d="M1366.6 524.2L1652.8 -329.1L1663.6 -325.4Z" fill="#992d00"/>
<path d="M1366.6 524.2L1660.2 -326.6L1671.0 -322.8Z" fill="#992b00"/>
<path d="M1366.6 524.2L1667.6 -324.0L1678.4 -320.1Z" fill="#992a00"/>
<path d="M1366.6 524.2L1675.0 -321.3L1685.8 -317.3Z" fill="#992800"/>
<path d="M1366.6 524.2L1682.4 -318.6L1693.1 -314.5Z" fill="#992600"/>
<path d="M1366.6 524.2L1689.7 -315.8L1700.4 -311.6Z" fill="#992500"/>
<path d="M1366.6 524.2L1697.0 -312.9L1707.7 -308.7Z" fill="#992300"/>
<path d="M1366.6 524.2L1704.3 -310.0L1714.9 -305.7Z" fill="#992200"/>
<path d="M1366.6 524.2L1711.6 -307.1L1722.2 -302.6Z" fill="#992000"/>
<path d="M1366.6 524.2L1718.9 -304.0L1729.4 -299.5Z" fill="#991f00"/>
<path d="M1366.6 524.2L1726.1 -300.9L1736.5 -296.3Z" fill="#991e00"/>
<path d="M1366.6 524.2L1733.3 -297.7L1743.7 -293.0Z" fill="#991c00"/>
<path d="M1366.6 524.2L1740.4 -294.5L1750.8 -289.7Z" fill="#991b00"/>
<path d="M1366.6 524.2L1747.5 -291.2L1757.9 -286.3Z" fill="#991a00"/>
<path d="M1366.6 524.2L1754.6 -287.9L1764.9 -282.9Z" fill="#991900"/>
<path d="M1366.6 524.2L1761.7 -284.4L1772.0 -279.3Z" fill="#991700"/>
<path d="M1366.6 524.2L1768.8 -281.0L1779.0 -275.8Z" fill="#991600"/>
<path d="M1366.6 524.2L1775.8 -277.4L1785.9 -272.2Z" fill="#991500"/>
<path d="M1366.6 524.2L1782.7 -273.8L1792.9 -268.5Z" fill="#991400"/>
<path d="M1366.6 524.2L1789.7 -270.2L1799.8 -264.7Z" fill="#991300"/>
<path d="M1366.6 524.2L1796.6 -266.4L1806.6 -260.9Z" fill="#991200"/>
<path d="M1366.6 524.2L1803.5 -262.7L1813.5 -257.0Z" fill="#991100"/>
<path d="M1366.6 524.2L1810.3 -258.8L1820.3 -253.1Z" fill="#991000"/>
<path d="M1366.6 524.2L1817.2 -254.9L1827.0 -249.1Z" fill="#990f00"/>
<path d="M1366.6 524.2L1823.9 -250.9L1833.8 -245.1Z" fill="#990e00"/>
<path d="M1366.6 524.2L1830.7 -246.9L1840.5 -241.0Z" fill="#990d00"/>
<path d="M1366.6 524.2L1837.4 -242.9L1847.1 -236.8Z" fill="#990c00"/>
<path d="M1366.6 524.2L1844.1 -238.7L1860.3 -228.3Z" fill="#990b00"/>
<path d="M1366.6 524.2L1857.3 -230.3L1866.9 -224.0Z" fill="#990a00"/>
<path d="M1366.6 524.2L1863.9 -226.0L1873.4 -219.6Z" fill="#990900"/>
<path d="M1366.6 524.2L1870.4 -221.6L1879.9 -215.1Z" fill="#990800"/>
<path d="M1366.6 524.2L1876.9 -217.2L1886.3 -210.6Z" fill="#990700"/>
<path d="M1366.6 524.2L1883.4 -212.7L1899.0 -201.4Z" fill="#990600"/>
<path d="M1366.6 524.2L1896.1 -203.6L1905.4 -196.8Z" fill="#990500"/>
<path d="M1366.6 524.2L1902.5 -198.9L1911.6 -192.0Z" fill="#990400"/>
<path d="M1366.6 524.2L1908.8 -194.2L1924.0 -182.4Z" fill="#990300"/>
<path d="M1366.6 524.2L1921.2 -184.6L1930.2 -177.5Z" fill="#990200"/>
<path d="M1366.6 524.2L1927.4 -179.8L1942.3 -167.6Z" fill="#990100"/>
<path d="M1366.6 524.2L1939.6 -169.9L2163.3 105.4Z" fill="#990000"/>
</g>
</g>
<g clip-path="url(#tri)" shape-rendering="crispEdges">
<path d="M1389.7 235.4L1631.8 230.5L1631.8 240.4Z" fill="url(#i0)"/>
<path d="M1389.7 235.4L1625.2 238.8L1624.8 248.5Z" fill="url(#i1)"/>
<path d="M1389.7 235.4L1618.8 246.7L1618.2 256.1Z" fill="url(#i2)"/>
<path d="M1389.7 235.4L1612.8 254.3L1611.9 263.4Z" fill="url(#i3)"/>
<path d="M1389.7 235.4L1607.1 261.5L1605.8 270.3Z" fill="url(#i4)"/>
<path d="M1389.7 235.4L1601.6 268.3L1600.0 277.0Z" fill="url(#i5)"/>
<path d="M1389.7 235.4L1596.3 274.9L1594.5 283.4Z" fill="url(#i6)"/>
<path d="M1389.7 235.4L1591.2 281.3L1589.1 289.5Z" fill="url(#i7)"/>
<path d="M1389.7 235.4L1586.3 287.5L1584.0 295.5Z" fill="url(#i8)"/>
<path d="M1389.7 235.4L1581.5 293.4L1579.0 301.2Z" fill="url(#i9)"/>
<path d="M1389.7 235.4L1576.8 299.2L1574.1 306.8Z" fill="url(#i10)"/>
<path d="M1389.7 235.4L1572.3 304.9L1569.3 312.3Z" fill="url(#i11)"/>
<path d="M1389.7 235.4L1567.9 310.4L1564.7 317.7Z" fill="url(#i12)"/>
<path d="M1389.7 235.4L1563.6 315.9L1560.1 322.9Z" fill="url(#i13)"/>
<path d="M1389.7 235.4L1559.3 321.2L1555.6 328.1Z" fill="url(#i14)"/>
<path d="M1389.7 235.4L1555.1 326.5L1551.2 333.2Z" fill="url(#i15)"/>
<path d="M1389.7 235.4L1550.9 331.7L1546.9 338.2Z" fill="url(#i16)"/>
<path d="M1389.7 235.4L1546.8 336.8L1542.5 343.1Z" fill="url(#i17)"/>
<path d="M1389.7 235.4L1542.7 341.9L1538.2 348.1Z" fill="url(#i18)"/>
<path d="M1389.7 235.4L1538.7 347.0L1534.0 353.0Z" fill="url(#i19)"/>
<path d="M1389.7 235.4L1534.6 352.1L1529.7 357.9Z" fill="url(#i20)"/>
<path d="M1389.7 235.4L1530.5 357.1L1525.5 362.8Z" fill="url(#i21)"/>
<path d="M1389.7 235.4L1526.5 362.2L1521.2 367.7Z" fill="url(#i22)"/>
<path d="M1389.7 235.4L1522.4 367.3L1516.9 372.7Z" fill="url(#i23)"/>
<path d="M1389.7 235.4L1518.3 372.5L1512.6 377.6Z" fill="url(#i24)"/>
<path d="M1389.7 235.4L1514.1 377.7L1508.2 382.7Z" fill="url(#i25)"/>
<path d="M1389.7 235.4L1509.9 383.0L1503.8 387.8Z" fill="url(#i26)"/>
<path d="M1389.7 235.4L1505.6 388.3L1499.3 392.9Z" fill="url(#i27)"/>
<path d="M1389.7 235.4L1501.3 393.8L1494.7 398.2Z" fill="url(#i28)"/>
<path d="M1389.7 235.4L1496.8 399.3L1490.0 403.6Z" fill="url(#i29)"/>
<path d="M1389.7 235.4L1492.3 405.0L1485.2 409.1Z" fill="url(#i30)"/>
<path d="M1389.7 235.4L1487.6 410.9L1480.3 414.7Z" fill="url(#i31)"/>
<path d="M1389.7 235.4L1482.8 416.9L1475.3 420.5Z" fill="url(#i32)"/>
<path d="M1389.7 235.4L1477.8 423.0L1470.1 426.5Z" fill="url(#i33)"/>
<path d="M1389.7 235.4L1472.7 429.5L1464.7 432.7Z" fill="url(#i34)"/>
<path d="M1389.7 235.4L1467.4 436.1L1459.1 439.1Z" fill="url(#i35)"/>
<path d="M1389.7 235.4L1461.9 443.0L1453.3 445.8Z" fill="url(#i36)"/>
<path d="M1389.7 235.4L1456.1 450.3L1447.2 452.8Z" fill="url(#i37)"/>
<path d="M1389.7 235.4L1450.0 457.9L1440.8 460.2Z" fill="url(#i38)"/>
<path d="M1389.7 235.4L1443.6 465.9L1434.1 467.9Z" fill="url(#i39)"/>
<path d="M1389.7 235.4L1436.8 474.3L1427.0 476.0Z" fill="url(#i40)"/>
<path d="M1389.7 235.4L1429.7 483.3L1419.5 484.7Z" fill="url(#i41)"/>
<path d="M1389.7 235.4L1422.1 492.8L1411.5 493.9Z" fill="url(#i42)"/>
<path d="M1389.7 235.4L1413.9 503.0L1402.9 503.8Z" fill="url(#i43)"/>
<path d="M1389.7 235.4L1405.1 514.0L1393.7 514.4Z" fill="url(#i44)"/>
<path d="M1389.7 235.4L1395.6 525.9L1383.7 525.9Z" fill="url(#i45)"/>
<path d="M1389.7 235.4L1385.3 538.8L1372.9 538.4Z" fill="url(#i46)"/>
<path d="M1389.7 235.4L1374.0 552.9L1361.0 552.0Z" fill="url(#i47)"/>
<path d="M1389.7 235.4L1364.3 535.2L1352.1 533.9Z" fill="url(#i48)"/>
<path d="M1389.7 235.4L1356.9 509.1L1345.7 507.6Z" fill="url(#i49)"/>
<path d="M1389.7 235.4L1350.6 487.1L1340.3 485.3Z" fill="url(#i50)"/>
<path d="M1389.7 235.4L1345.2 468.1L1335.7 466.1Z" fill="url(#i51)"/>
<path d="M1389.7 235.4L1340.4 451.6L1331.6 449.4Z" fill="url(#i52)"/>
<path d="M1389.7 235.4L1336.3 437.1L1328.1 434.7Z" fill="url(#i53)"/>
<path d="M1389.7 235.4L1332.6 424.1L1324.9 421.6Z" fill="url(#i54)"/>
<path d="M1389.7 235.4L1329.3 412.5L1322.1 409.9Z" fill="url(#i55)"/>
<path d="M1389.7 235.4L1326.3 402.1L1319.5 399.3Z" fill="url(#i56)"/>
<path d="M1389.7 235.4L1323.5 392.5L1317.2 389.7Z" fill="url(#i57)"/>
<path d="M1389.7 235.4L1321.0 383.8L1315.0 380.8Z" fill="url(#i58)"/>
<path d="M1389.7 235.4L1318.7 375.7L1313.1 372.7Z" fill="url(#i59)"/>
<path d="M1389.7 235.4L1316.6 368.2L1311.2 365.1Z" fill="url(#i60)"/>
<path d="M1389.7 235.4L1314.6 361.2L1309.5 358.0Z" fill="url(#i61)"/>
<path d="M1389.7 235.4L1312.7 354.7L1307.9 351.4Z" fill="url(#i62)"/>
<path d="M1389.7 235.4L1311.0 348.5L1306.4 345.2Z" fill="url(#i63)"/>
<path d="M1389.7 235.4L1309.3 342.7L1305.0 339.4Z" fill="url(#i64)"/>
<path d="M1389.7 235.4L1307.7 337.2L1303.6 333.8Z" fill="url(#i65)"/>
<path d="M1389.7 235.4L1306.2 332.0L1302.4 328.5Z" fill="url(#i66)"/>
<path d="M1389.7 235.4L1304.8 327.0L1301.1 323.4Z" fill="url(#i67)"/>
<path d="M1389.7 235.4L1303.4 322.2L1300.0 318.6Z" fill="url(#i68)"/>
<path d="M1389.7 235.4L1302.1 317.6L1298.8 313.9Z" fill="url(#i69)"/>
<path d="M1389.7 235.4L1300.8 313.1L1297.7 309.4Z" fill="url(#i70)"/>
<path d="M1389.7 235.4L1299.6 308.8L1296.7 305.1Z" fill="url(#i71)"/>
<path d="M1389.7 235.4L1298.4 304.6L1295.7 300.8Z" fill="url(#i72)"/>
<path d="M1389.7 235.4L1297.2 300.6L1294.7 296.7Z" fill="url(#i73)"/>
<path d="M1389.7 235.4L1296.1 296.6L1293.7 292.7Z" fill="url(#i74)"/>
<path d="M1389.7 235.4L1295.0 292.7L1292.7 288.8Z" fill="url(#i75)"/>
<path d="M1389.7 235.4L1293.9 288.9L1291.8 284.9Z" fill="url(#i76)"/>
<path d="M1389.7 235.4L1292.8 285.1L1290.9 281.1Z" fill="url(#i77)"/>
<path d="M1389.7 235.4L1291.8 281.4L1290.0 277.4Z" fill="url(#i78)"/>
<path d="M1389.7 235.4L1290.7 277.8L1289.1 273.7Z" fill="url(#i79)"/>
<path d="M1389.7 235.4L1289.7 274.1L1288.2 270.0Z" fill="url(#i80)"/>
<path d="M1389.7 235.4L1288.7 270.5L1287.3 266.4Z" fill="url(#i81)"/>
<path d="M1389.7 235.4L1287.6 267.0L1286.4 262.8Z" fill="url(#i82)"/>
<path d="M1389.7 235.4L1286.6 263.4L1285.6 259.1Z" fill="url(#i83)"/>
<path d="M1389.7 235.4L1285.6 259.8L1284.7 255.5Z" fill="url(#i84)"/>
<path d="M1389.7 235.4L1284.6 256.2L1283.8 251.9Z" fill="url(#i85)"/>
<path d="M1389.7 235.4L1283.5 252.6L1282.9 248.2Z" fill="url(#i86)"/>
<path d="M1389.7 235.4L1282.5 248.9L1282.0 244.5Z" fill="url(#i87)"/>
<path d="M1389.7 235.4L1281.4 245.2L1281.1 240.8Z" fill="url(#i88)"/>
<path d="M1389.7 235.4L1280.4 241.5L1280.2 237.0Z" fill="url(#i89)"/>
<path d="M1389.7 235.4L1279.3 237.7L1279.3 233.2Z" fill="url(#i90)"/>
<path d="M1389.7 235.4L1278.2 233.8L1278.3 229.3Z" fill="url(#i91)"/>
<path d="M1389.7 235.4L1277.0 229.9L1277.3 225.3Z" fill="url(#i92)"/>
<path d="M1389.7 235.4L1275.9 225.8L1276.4 221.2Z" fill="url(#i93)"/>
<path d="M1389.7 235.4L1274.7 221.7L1275.3 217.0Z" fill="url(#i94)"/>
<path d="M1389.7 235.4L1273.5 217.4L1274.3 212.6Z" fill="url(#i95)"/>
<path d="M1389.7 235.4L1272.2 213.0L1273.2 208.2Z" fill="url(#i96)"/>
<path d="M1389.7 235.4L1270.9 208.4L1272.1 203.5Z" fill="url(#i97)"/>
<path d="M1389.7 235.4L1269.5 203.6L1270.9 198.7Z" fill="url(#i98)"/>
<path d="M1389.7 235.4L1268.1 198.7L1269.7 193.7Z" fill="url(#i99)"/>
<path d="M1389.7 235.4L1266.6 193.5L1268.4 188.5Z" fill="url(#i100)"/>
<path d="M1389.7 235.4L1265.1 188.0L1267.1 183.0Z" fill="url(#i101)"/>
<path d="M1389.7 235.4L1263.4 182.3L1265.7 177.2Z" fill="url(#i102)"/>
<path d="M1389.7 235.4L1261.7 176.2L1264.2 171.0Z" fill="url(#i103)"/>
<path d="M1389.7 235.4L1259.8 169.8L1262.6 164.5Z" fill="url(#i104)"/>
<path d="M1389.7 235.4L1257.9 162.9L1260.9 157.6Z" fill="url(#i105)"/>
<path d="M1389.7 235.4L1255.8 155.5L1259.1 150.1Z" fill="url(#i106)"/>
<path d="M1389.7 235.4L1253.5 147.6L1257.2 142.1Z" fill="url(#i107)"/>
<path d="M1389.7 235.4L1251.0 139.0L1255.1 133.4Z" fill="url(#i108)"/>
<path d="M1389.7 235.4L1248.4 129.6L1252.8 123.9Z" fill="url(#i109)"/>
<path d="M1389.7 235.4L1256.4 128.1L1260.9 122.8Z" fill="url(#i110)"/>
<path d="M1389.7 235.4L1266.8 129.2L1271.2 124.3Z" fill="url(#i111)"/>
<path d="M1389.7 235.4L1276.2 130.2L1280.6 125.7Z" fill="url(#i112)"/>
<path d="M1389.7 235.4L1284.8 131.2L1289.1 127.0Z" fill="url(#i113)"/>
<path d="M1389.7 235.4L1292.6 132.0L1297.0 128.1Z" fill="url(#i114)"/>
<path d="M1389.7 235.4L1299.9 132.8L1304.2 129.2Z" fill="url(#i115)"/>
<path d="M1389.7 235.4L1306.6 133.5L1310.9 130.2Z" fill="url(#i116)"/>
<path d="M1389.7 235.4L1312.9 134.2L1317.1 131.1Z" fill="url(#i117)"/>
<path d="M1389.7 235.4L1318.7 134.8L1322.9 132.0Z" fill="url(#i118)"/>
<path d="M1389.7 235.4L1324.3 135.4L1328.4 132.8Z" fill="url(#i119)"/>
<path d="M1389.7 235.4L1329.5 135.9L1333.6 133.5Z" fill="url(#i120)"/>
<path d="M1389.7 235.4L1334.4 136.5L1338.5 134.3Z" fill="url(#i121)"/>
<path d="M1389.7 235.4L1339.1 137.0L1343.2 135.0Z" fill="url(#i122)"/>
<path d="M1389.7 235.4L1343.6 137.4L1347.7 135.6Z" fill="url(#i123)"/>
<path d="M1389.7 235.4L1347.9 137.9L1351.9 136.3Z" fill="url(#i124)"/>
<path d="M1389.7 235.4L1352.1 138.3L1356.1 136.9Z" fill="url(#i125)"/>
<path d="M1389.7 235.4L1356.1 138.8L1360.0 137.5Z" fill="url(#i126)"/>
<path d="M1389.7 235.4L1359.9 139.2L1363.9 138.0Z" fill="url(#i127)"/>
<path d="M1389.7 235.4L1363.7 139.6L1367.6 138.6Z" fill="url(#i128)"/>
<path d="M1389.7 235.4L1367.3 140.0L1371.2 139.1Z" fill="url(#i129)"/>
<path d="M1389.7 235.4L1370.9 140.3L1374.8 139.6Z" fill="url(#i130)"/>
<path d="M1389.7 235.4L1374.4 140.7L1378.3 140.2Z" fill="url(#i131)"/>
<path d="M1389.7 235.4L1377.8 141.1L1381.7 140.7Z" fill="url(#i132)"/>
<path d="M1389.7 235.4L1381.2 141.4L1385.0 141.2Z" fill="url(#i133)"/>
<path d="M1389.7 235.4L1384.5 141.8L1388.3 141.7Z" fill="url(#i134)"/>
<path d="M1389.7 235.4L1387.8 142.1L1391.6 142.1Z" fill="url(#i135)"/>
<path d="M1389.7 235.4L1391.0 142.5L1394.8 142.6Z" fill="url(#i136)"/>
<path d="M1389.7 235.4L1394.2 142.8L1398.0 143.1Z" fill="url(#i137)"/>
<path d="M1389.7 235.4L1397.5 143.2L1401.2 143.6Z" fill="url(#i138)"/>
<path d="M1389.7 235.4L1400.7 143.5L1404.4 144.0Z" fill="url(#i139)"/>
<path d="M1389.7 235.4L1403.9 143.9L1407.6 144.5Z" fill="url(#i140)"/>
<path d="M1389.7 235.4L1407.1 144.2L1410.8 145.0Z" fill="url(#i141)"/>
<path d="M1389.7 235.4L1410.4 144.5L1414.1 145.5Z" fill="url(#i142)"/>
<path d="M1389.7 235.4L1413.6 144.9L1417.3 146.0Z" fill="url(#i143)"/>
<path d="M1389.7 235.4L1416.9 145.2L1420.6 146.4Z" fill="url(#i144)"/>
<path d="M1389.7 235.4L1420.3 145.6L1423.9 146.9Z" fill="url(#i145)"/>
<path d="M1389.7 235.4L1423.7 146.0L1427.3 147.4Z" fill="url(#i146)"/>
<path d="M1389.7 235.4L1427.2 146.3L1430.8 147.9Z" fill="url(#i147)"/>
<path d="M1389.7 235.4L1430.7 146.7L1434.3 148.5Z" fill="url(#i148)"/>
<path d="M1389.7 235.4L1434.3 147.1L1437.9 149.0Z" fill="url(#i149)"/>
<path d="M1389.7 235.4L1438.1 147.5L1441.6 149.6Z" fill="url(#i150)"/>
<path d="M1389.7 235.4L1441.9 147.9L1445.4 150.1Z" fill="url(#i151)"/>
<path d="M1389.7 235.4L1445.9 148.3L1449.4 150.7Z" fill="url(#i152)"/>
<path d="M1389.7 235.4L1450.0 148.8L1453.5 151.3Z" fill="url(#i153)"/>
<path d="M1389.7 235.4L1454.2 149.2L1457.7 151.9Z" fill="url(#i154)"/>
<path d="M1389.7 235.4L1458.7 149.7L1462.1 152.6Z" fill="url(#i155)"/>
<path d="M1389.7 235.4L1463.3 150.2L1466.7 153.3Z" fill="url(#i156)"/>
<path d="M1389.7 235.4L1468.2 150.7L1471.6 154.0Z" fill="url(#i157)"/>
<path d="M1389.7 235.4L1473.3 151.3L1476.7 154.7Z" fill="url(#i158)"/>
<path d="M1389.7 235.4L1478.8 151.8L1482.1 155.5Z" fill="url(#i159)"/>
<path d="M1389.7 235.4L1484.5 152.5L1487.9 156.4Z" fill="url(#i160)"/>
<path d="M1389.7 235.4L1490.7 153.1L1494.0 157.3Z" fill="url(#i161)"/>
<path d="M1389.7 235.4L1497.3 153.8L1500.5 158.3Z" fill="url(#i162)"/>
<path d="M1389.7 235.4L1504.4 154.6L1507.6 159.3Z" fill="url(#i163)"/>
<path d="M1389.7 235.4L1512.1 155.4L1515.3 160.5Z" fill="url(#i164)"/>
<path d="M1389.7 235.4L1520.5 156.3L1523.6 161.7Z" fill="url(#i165)"/>
<path d="M1389.7 235.4L1529.7 157.3L1532.8 163.1Z" fill="url(#i166)"/>
<path d="M1389.7 235.4L1539.8 158.3L1542.9 164.5Z" fill="url(#i167)"/>
<path d="M1389.7 235.4L1551.1 159.5L1554.1 166.2Z" fill="url(#i168)"/>
<path d="M1389.7 235.4L1563.8 160.9L1566.7 168.1Z" fill="url(#i169)"/>
<path d="M1389.7 235.4L1578.1 162.4L1581.0 170.2Z" fill="url(#i170)"/>
<path d="M1389.7 235.4L1594.6 164.2L1597.3 172.6Z" fill="url(#i171)"/>
<path d="M1389.7 235.4L1613.6 166.2L1616.3 175.4Z" fill="url(#i172)"/>
<path d="M1389.7 235.4L1636.1 168.6L1638.6 178.7Z" fill="url(#i173)"/>
<path d="M1389.7 235.4L1662.9 171.5L1665.3 182.7Z" fill="url(#i174)"/>
<path d="M1389.7 235.4L1672.6 179.6L1674.6 191.2Z" fill="url(#i175)"/>
<path d="M1389.7 235.4L1663.2 191.3L1664.8 202.5Z" fill="url(#i176)"/>
<path d="M1389.7 235.4L1654.5 202.1L1655.7 213.0Z" fill="url(#i177)"/>
<path d="M1389.7 235.4L1646.5 212.2L1647.2 222.7Z" fill="url(#i178)"/>
<path d="M1389.7 235.4L1638.9 221.6L1639.3 231.8Z" fill="url(#i179)"/>
</g>
</g>
<rect x="1186.0" y="113.2" width="619.20" height="559.00" fill="none" stroke="#a8a8a8" stroke-width="1.7"/>
<line x1="1186.20" y1="672.20" x2="1186.20" y2="678.20" stroke="#9a9a9a" stroke-width="1.4" />
<line x1="1181.00" y1="672.10" x2="1186.00" y2="672.10" stroke="#9a9a9a" stroke-width="1.4" />
<text x="1182.30" y="697.10" font-size="16.5" fill="#e4e4e4" textLength="7.80" lengthAdjust="spacingAndGlyphs" >0</text>
<text x="1172.20" y="680.60" font-size="16.5" fill="#e4e4e4" textLength="7.80" lengthAdjust="spacingAndGlyphs" >0</text>
<line x1="1237.62" y1="672.20" x2="1237.62" y2="678.20" stroke="#9a9a9a" stroke-width="1.4" />
<line x1="1181.00" y1="625.59" x2="1186.00" y2="625.59" stroke="#9a9a9a" stroke-width="1.4" />
<text x="1223.78" y="697.10" font-size="16.5" fill="#e4e4e4" textLength="27.70" lengthAdjust="spacingAndGlyphs" >0,05</text>
<text x="1152.30" y="634.09" font-size="16.5" fill="#e4e4e4" textLength="27.70" lengthAdjust="spacingAndGlyphs" >0,05</text>
<line x1="1289.05" y1="672.20" x2="1289.05" y2="678.20" stroke="#9a9a9a" stroke-width="1.4" />
<line x1="1181.00" y1="579.07" x2="1186.00" y2="579.07" stroke="#9a9a9a" stroke-width="1.4" />
<text x="1279.05" y="697.10" font-size="16.5" fill="#e4e4e4" textLength="20.00" lengthAdjust="spacingAndGlyphs" >0,1</text>
<text x="1160.00" y="587.57" font-size="16.5" fill="#e4e4e4" textLength="20.00" lengthAdjust="spacingAndGlyphs" >0,1</text>
<line x1="1340.48" y1="672.20" x2="1340.48" y2="678.20" stroke="#9a9a9a" stroke-width="1.4" />
<line x1="1181.00" y1="532.56" x2="1186.00" y2="532.56" stroke="#9a9a9a" stroke-width="1.4" />
<text x="1326.63" y="697.10" font-size="16.5" fill="#e4e4e4" textLength="27.70" lengthAdjust="spacingAndGlyphs" >0,15</text>
<text x="1152.30" y="541.06" font-size="16.5" fill="#e4e4e4" textLength="27.70" lengthAdjust="spacingAndGlyphs" >0,15</text>
<line x1="1391.90" y1="672.20" x2="1391.90" y2="678.20" stroke="#9a9a9a" stroke-width="1.4" />
<line x1="1181.00" y1="486.04" x2="1186.00" y2="486.04" stroke="#9a9a9a" stroke-width="1.4" />
<text x="1381.90" y="697.10" font-size="16.5" fill="#e4e4e4" textLength="20.00" lengthAdjust="spacingAndGlyphs" >0,2</text>
<text x="1160.00" y="494.54" font-size="16.5" fill="#e4e4e4" textLength="20.00" lengthAdjust="spacingAndGlyphs" >0,2</text>
<line x1="1443.33" y1="672.20" x2="1443.33" y2="678.20" stroke="#9a9a9a" stroke-width="1.4" />
<line x1="1181.00" y1="439.53" x2="1186.00" y2="439.53" stroke="#9a9a9a" stroke-width="1.4" />
<text x="1429.48" y="697.10" font-size="16.5" fill="#e4e4e4" textLength="27.70" lengthAdjust="spacingAndGlyphs" >0,25</text>
<text x="1152.30" y="448.03" font-size="16.5" fill="#e4e4e4" textLength="27.70" lengthAdjust="spacingAndGlyphs" >0,25</text>
<line x1="1494.75" y1="672.20" x2="1494.75" y2="678.20" stroke="#9a9a9a" stroke-width="1.4" />
<line x1="1181.00" y1="393.01" x2="1186.00" y2="393.01" stroke="#9a9a9a" stroke-width="1.4" />
<text x="1484.75" y="697.10" font-size="16.5" fill="#e4e4e4" textLength="20.00" lengthAdjust="spacingAndGlyphs" >0,3</text>
<text x="1160.00" y="401.51" font-size="16.5" fill="#e4e4e4" textLength="20.00" lengthAdjust="spacingAndGlyphs" >0,3</text>
<line x1="1546.18" y1="672.20" x2="1546.18" y2="678.20" stroke="#9a9a9a" stroke-width="1.4" />
<line x1="1181.00" y1="346.50" x2="1186.00" y2="346.50" stroke="#9a9a9a" stroke-width="1.4" />
<text x="1532.33" y="697.10" font-size="16.5" fill="#e4e4e4" textLength="27.70" lengthAdjust="spacingAndGlyphs" >0,35</text>
<text x="1152.30" y="355.00" font-size="16.5" fill="#e4e4e4" textLength="27.70" lengthAdjust="spacingAndGlyphs" >0,35</text>
<line x1="1597.60" y1="672.20" x2="1597.60" y2="678.20" stroke="#9a9a9a" stroke-width="1.4" />
<line x1="1181.00" y1="299.98" x2="1186.00" y2="299.98" stroke="#9a9a9a" stroke-width="1.4" />
<text x="1587.60" y="697.10" font-size="16.5" fill="#e4e4e4" textLength="20.00" lengthAdjust="spacingAndGlyphs" >0,4</text>
<text x="1160.00" y="308.48" font-size="16.5" fill="#e4e4e4" textLength="20.00" lengthAdjust="spacingAndGlyphs" >0,4</text>
<line x1="1649.03" y1="672.20" x2="1649.03" y2="678.20" stroke="#9a9a9a" stroke-width="1.4" />
<line x1="1181.00" y1="253.47" x2="1186.00" y2="253.47" stroke="#9a9a9a" stroke-width="1.4" />
<text x="1635.18" y="697.10" font-size="16.5" fill="#e4e4e4" textLength="27.70" lengthAdjust="spacingAndGlyphs" >0,45</text>
<text x="1152.30" y="261.97" font-size="16.5" fill="#e4e4e4" textLength="27.70" lengthAdjust="spacingAndGlyphs" >0,45</text>
<line x1="1700.45" y1="672.20" x2="1700.45" y2="678.20" stroke="#9a9a9a" stroke-width="1.4" />
<line x1="1181.00" y1="206.95" x2="1186.00" y2="206.95" stroke="#9a9a9a" stroke-width="1.4" />
<text x="1690.45" y="697.10" font-size="16.5" fill="#e4e4e4" textLength="20.00" lengthAdjust="spacingAndGlyphs" >0,5</text>
<text x="1160.00" y="215.45" font-size="16.5" fill="#e4e4e4" textLength="20.00" lengthAdjust="spacingAndGlyphs" >0,5</text>
<line x1="1751.88" y1="672.20" x2="1751.88" y2="678.20" stroke="#9a9a9a" stroke-width="1.4" />
<line x1="1181.00" y1="160.44" x2="1186.00" y2="160.44" stroke="#9a9a9a" stroke-width="1.4" />
<text x="1738.03" y="697.10" font-size="16.5" fill="#e4e4e4" textLength="27.70" lengthAdjust="spacingAndGlyphs" >0,55</text>
<text x="1152.30" y="168.94" font-size="16.5" fill="#e4e4e4" textLength="27.70" lengthAdjust="spacingAndGlyphs" >0,55</text>
<rect x="1431.0" y="218.6" width="12.8" height="15.1" fill="#ffffff" fill-opacity="0.09" stroke="#ffffff" stroke-width="1.5" stroke-opacity="0.95"/>
<rect x="1480.7" y="208.9" width="12.8" height="15.1" fill="#ffffff" fill-opacity="0.09" stroke="#ffffff" stroke-width="1.5" stroke-opacity="0.95"/>
<rect x="1532.6" y="198.7" width="12.8" height="15.1" fill="#ffffff" fill-opacity="0.09" stroke="#ffffff" stroke-width="1.5" stroke-opacity="0.95"/>
<rect x="1586.7" y="188.2" width="12.8" height="15.1" fill="#ffffff" fill-opacity="0.09" stroke="#ffffff" stroke-width="1.5" stroke-opacity="0.95"/>
<rect x="1643.3" y="177.1" width="12.8" height="15.1" fill="#ffffff" fill-opacity="0.09" stroke="#ffffff" stroke-width="1.5" stroke-opacity="0.95"/>
<rect x="1344.9" y="197.4" width="12.8" height="15.1" fill="#ffffff" fill-opacity="0.09" stroke="#ffffff" stroke-width="1.5" stroke-opacity="0.95"/>
<rect x="1315.5" y="174.0" width="12.8" height="15.1" fill="#ffffff" fill-opacity="0.09" stroke="#ffffff" stroke-width="1.5" stroke-opacity="0.95"/>
<rect x="1292.2" y="155.5" width="12.8" height="15.1" fill="#ffffff" fill-opacity="0.09" stroke="#ffffff" stroke-width="1.5" stroke-opacity="0.95"/>
<rect x="1273.3" y="140.4" width="12.8" height="15.1" fill="#ffffff" fill-opacity="0.09" stroke="#ffffff" stroke-width="1.5" stroke-opacity="0.95"/>
<rect x="1257.6" y="128.0" width="12.8" height="15.1" fill="#ffffff" fill-opacity="0.09" stroke="#ffffff" stroke-width="1.5" stroke-opacity="0.95"/>
<rect x="1380.2" y="263.6" width="12.8" height="15.1" fill="#ffffff" fill-opacity="0.09" stroke="#ffffff" stroke-width="1.5" stroke-opacity="0.95"/>
<rect x="1377.6" y="307.1" width="12.8" height="15.1" fill="#ffffff" fill-opacity="0.09" stroke="#ffffff" stroke-width="1.5" stroke-opacity="0.95"/>
<rect x="1371.9" y="360.1" width="12.8" height="15.1" fill="#ffffff" fill-opacity="0.09" stroke="#ffffff" stroke-width="1.5" stroke-opacity="0.95"/>
<rect x="1368.2" y="422.8" width="12.8" height="15.1" fill="#ffffff" fill-opacity="0.09" stroke="#ffffff" stroke-width="1.5" stroke-opacity="0.95"/>
<rect x="1360.0" y="517.2" width="12.8" height="15.1" fill="#ffffff" fill-opacity="0.09" stroke="#ffffff" stroke-width="1.5" stroke-opacity="0.95"/>
<rect x="1363.7" y="231.7" width="12.8" height="15.1" fill="#ffffff" fill-opacity="0.09" stroke="#ffffff" stroke-width="1.5" stroke-opacity="0.95"/>
<rect x="1344.5" y="235.4" width="12.8" height="15.1" fill="#ffffff" fill-opacity="0.09" stroke="#ffffff" stroke-width="1.5" stroke-opacity="0.95"/>
<rect x="1325.7" y="239.1" width="12.8" height="15.1" fill="#ffffff" fill-opacity="0.09" stroke="#ffffff" stroke-width="1.5" stroke-opacity="0.95"/>
<rect x="1307.1" y="242.7" width="12.8" height="15.1" fill="#ffffff" fill-opacity="0.09" stroke="#ffffff" stroke-width="1.5" stroke-opacity="0.95"/>
<rect x="1288.9" y="246.3" width="12.8" height="15.1" fill="#ffffff" fill-opacity="0.09" stroke="#ffffff" stroke-width="1.5" stroke-opacity="0.95"/>
<rect x="1402.5" y="243.2" width="12.8" height="15.1" fill="#ffffff" fill-opacity="0.09" stroke="#ffffff" stroke-width="1.5" stroke-opacity="0.95"/>
<rect x="1424.5" y="260.7" width="12.8" height="15.1" fill="#ffffff" fill-opacity="0.09" stroke="#ffffff" stroke-width="1.5" stroke-opacity="0.95"/>
<rect x="1449.9" y="280.8" width="12.8" height="15.1" fill="#ffffff" fill-opacity="0.09" stroke="#ffffff" stroke-width="1.5" stroke-opacity="0.95"/>
<rect x="1479.4" y="304.3" width="12.8" height="15.1" fill="#ffffff" fill-opacity="0.09" stroke="#ffffff" stroke-width="1.5" stroke-opacity="0.95"/>
<rect x="1514.2" y="331.9" width="12.8" height="15.1" fill="#ffffff" fill-opacity="0.09" stroke="#ffffff" stroke-width="1.5" stroke-opacity="0.95"/>
<rect x="1384.9" y="207.2" width="12.8" height="15.1" fill="#ffffff" fill-opacity="0.09" stroke="#ffffff" stroke-width="1.5" stroke-opacity="0.95"/>
<rect x="1386.4" y="189.0" width="12.8" height="15.1" fill="#ffffff" fill-opacity="0.09" stroke="#ffffff" stroke-width="1.5" stroke-opacity="0.95"/>
<rect x="1387.7" y="172.7" width="12.8" height="15.1" fill="#ffffff" fill-opacity="0.09" stroke="#ffffff" stroke-width="1.5" stroke-opacity="0.95"/>
<rect x="1388.8" y="158.0" width="12.8" height="15.1" fill="#ffffff" fill-opacity="0.09" stroke="#ffffff" stroke-width="1.5" stroke-opacity="0.95"/>
<rect x="1389.9" y="144.8" width="12.8" height="15.1" fill="#ffffff" fill-opacity="0.09" stroke="#ffffff" stroke-width="1.5" stroke-opacity="0.95"/>
<ellipse cx="1431.7" cy="226.6" rx="4.4" ry="4.9" fill="#bda2a2" fill-opacity="0.96" stroke="#000" stroke-width="1.1"/>
<ellipse cx="1477.4" cy="217.3" rx="4.4" ry="4.9" fill="#b98080" fill-opacity="0.96" stroke="#000" stroke-width="1.1"/>
<ellipse cx="1529.4" cy="204.3" rx="4.4" ry="4.9" fill="#b55d5d" fill-opacity="0.96" stroke="#000" stroke-width="1.1"/>
<ellipse cx="1584.0" cy="193.9" rx="4.4" ry="4.9" fill="#b03838" fill-opacity="0.96" stroke="#000" stroke-width="1.1"/>
<ellipse cx="1653.9" cy="181.6" rx="4.4" ry="4.9" fill="#ac1212" fill-opacity="0.96" stroke="#000" stroke-width="1.1"/>
<ellipse cx="1357.4" cy="203.5" rx="4.4" ry="4.9" fill="#9fb79f" fill-opacity="0.96" stroke="#000" stroke-width="1.1"/>
<ellipse cx="1335.0" cy="183.4" rx="4.4" ry="4.9" fill="#7aad7a" fill-opacity="0.96" stroke="#000" stroke-width="1.1"/>
<ellipse cx="1315.6" cy="163.5" rx="4.4" ry="4.9" fill="#53a253" fill-opacity="0.96" stroke="#000" stroke-width="1.1"/>
<ellipse cx="1300.6" cy="149.4" rx="4.4" ry="4.9" fill="#2a972a" fill-opacity="0.96" stroke="#000" stroke-width="1.1"/>
<ellipse cx="1289.0" cy="136.6" rx="4.4" ry="4.9" fill="#008c00" fill-opacity="0.96" stroke="#000" stroke-width="1.1"/>
<ellipse cx="1386.3" cy="271.4" rx="4.4" ry="4.9" fill="#a4a4bd" fill-opacity="0.96" stroke="#000" stroke-width="1.1"/>
<ellipse cx="1382.3" cy="314.6" rx="4.4" ry="4.9" fill="#8585ba" fill-opacity="0.96" stroke="#000" stroke-width="1.1"/>
<ellipse cx="1378.3" cy="366.9" rx="4.4" ry="4.9" fill="#6464b6" fill-opacity="0.96" stroke="#000" stroke-width="1.1"/>
<ellipse cx="1373.4" cy="424.3" rx="4.4" ry="4.9" fill="#4141b3" fill-opacity="0.96" stroke="#000" stroke-width="1.1"/>
<ellipse cx="1366.3" cy="512.3" rx="4.4" ry="4.9" fill="#1e1eaf" fill-opacity="0.96" stroke="#000" stroke-width="1.1"/>
<ellipse cx="1372.0" cy="240.2" rx="4.4" ry="4.9" fill="#9fbcbc" fill-opacity="0.96" stroke="#000" stroke-width="1.1"/>
<ellipse cx="1356.7" cy="241.5" rx="4.4" ry="4.9" fill="#7ab8b8" fill-opacity="0.96" stroke="#000" stroke-width="1.1"/>
<ellipse cx="1341.5" cy="246.5" rx="4.4" ry="4.9" fill="#53b3b3" fill-opacity="0.96" stroke="#000" stroke-width="1.1"/>
<ellipse cx="1327.4" cy="249.2" rx="4.4" ry="4.9" fill="#2aafaf" fill-opacity="0.96" stroke="#000" stroke-width="1.1"/>
<ellipse cx="1312.5" cy="251.6" rx="4.4" ry="4.9" fill="#00aaaa" fill-opacity="0.96" stroke="#000" stroke-width="1.1"/>
<ellipse cx="1407.5" cy="252.6" rx="4.4" ry="4.9" fill="#c1a9c1" fill-opacity="0.96" stroke="#000" stroke-width="1.1"/>
<ellipse cx="1427.2" cy="272.7" rx="4.4" ry="4.9" fill="#c18ec3" fill-opacity="0.96" stroke="#000" stroke-width="1.1"/>
<ellipse cx="1446.9" cy="291.2" rx="4.4" ry="4.9" fill="#c272c5" fill-opacity="0.96" stroke="#000" stroke-width="1.1"/>
<ellipse cx="1473.3" cy="316.1" rx="4.4" ry="4.9" fill="#c255c6" fill-opacity="0.96" stroke="#000" stroke-width="1.1"/>
<ellipse cx="1508.6" cy="349.9" rx="4.4" ry="4.9" fill="#c337c8" fill-opacity="0.96" stroke="#000" stroke-width="1.1"/>
<ellipse cx="1391.7" cy="214.3" rx="4.4" ry="4.9" fill="#c1c19f" fill-opacity="0.96" stroke="#000" stroke-width="1.1"/>
<ellipse cx="1393.2" cy="195.6" rx="4.4" ry="4.9" fill="#c1c17a" fill-opacity="0.96" stroke="#000" stroke-width="1.1"/>
<ellipse cx="1394.5" cy="179.8" rx="4.4" ry="4.9" fill="#c2c253" fill-opacity="0.96" stroke="#000" stroke-width="1.1"/>
<ellipse cx="1395.8" cy="163.4" rx="4.4" ry="4.9" fill="#c3c32a" fill-opacity="0.96" stroke="#000" stroke-width="1.1"/>
<ellipse cx="1396.9" cy="150.4" rx="4.4" ry="4.9" fill="#c4c400" fill-opacity="0.96" stroke="#000" stroke-width="1.1"/>
<rect x="1383.1" y="227.8" width="12.2" height="14.6" fill="#fff" fill-opacity="0.3" stroke="#000" stroke-width="2"/>
<ellipse cx="1389.1" cy="237.3" rx="4.4" ry="4.7" fill="#fff" stroke="#000" stroke-width="1.1"/>
<ellipse cx="1379.7" cy="292.7" rx="4.3" ry="4.8" fill="#000"/>
<rect x="1591.10" y="497.30" width="211.10" height="168.90" fill="#333333"/>
<rect x="1594.10" y="500.30" width="205.10" height="162.40" fill="url(#in2)"/>
<path d="M1594.1 509.9L1799.2 651.8V662.7H1594.1Z" fill="url(#in1)"/>
<rect x="1594.1" y="500.3" width="205.1" height="162.4" fill="none" stroke="#9a9a9a" stroke-width="1.2"/>
<rect x="1689.8" y="573.1" width="12.8" height="15.1" fill="#ffffff" fill-opacity="0.09" stroke="#ffffff" stroke-width="1.5" stroke-opacity="0.95"/>
<ellipse cx="1714.5" cy="562.7" rx="4.4" ry="4.9" fill="#b0b000" fill-opacity="0.95" stroke="#000" stroke-width="1.1"/>
<rect x="201.50" y="990.50" width="1612.50" height="60.50" fill="url(#strip)"/>
<rect x="200.00" y="64.00" width="1.50" height="987.00" fill="#2a2a2a"/>
<path d="M201.3 1053V994.5a3.5 3.5 0 0 1 3.5-3.5H242.5a3.5 3.5 0 0 1 3.5 3.5V1053Z" fill="url(#bbtn)"/>
<circle cx="223.5" cy="1000" r="7.2" fill="url(#upc)"/>
<path d="M219.3 1001.2h8.4l-4.2-4.4z" fill="#222"/>
<rect x="206.20" y="1016.90" width="35.00" height="30.30" fill="#ffff00" rx="3" stroke="#b4b400" stroke-width="1"/>
<path d="M252.0 1053V995a4 4 0 0 1 4-4H398.0a4 4 0 0 1 4 4V1053Z" fill="url(#bbtn)"/>
<rect x="257.60" y="996.20" width="139.60" height="35.90" fill="#c2c3a5" rx="3" stroke="#8c8c70" stroke-width="0.8"/>
<text x="316.75" y="1047.00" font-size="10.5" fill="#2c2c2c" textLength="20.50" lengthAdjust="spacingAndGlyphs" font-weight="bold" >20%</text>
<path d="M404.2 1053V995a4 4 0 0 1 4-4H550.2a4 4 0 0 1 4 4V1053Z" fill="url(#bbtn)"/>
<rect x="409.80" y="996.20" width="139.60" height="35.90" fill="#c2c286" rx="3" stroke="#8c8c70" stroke-width="0.8"/>
<text x="468.95" y="1047.00" font-size="10.5" fill="#2c2c2c" textLength="20.50" lengthAdjust="spacingAndGlyphs" font-weight="bold" >40%</text>
<path d="M556.2 1053V995a4 4 0 0 1 4-4H702.2a4 4 0 0 1 4 4V1053Z" fill="url(#bbtn)"/>
<rect x="561.80" y="996.20" width="139.60" height="35.90" fill="#c2c26a" rx="3" stroke="#8c8c70" stroke-width="0.8"/>
<text x="620.95" y="1047.00" font-size="10.5" fill="#2c2c2c" textLength="20.50" lengthAdjust="spacingAndGlyphs" font-weight="bold" >60%</text>
<path d="M708.1 1053V995a4 4 0 0 1 4-4H854.1a4 4 0 0 1 4 4V1053Z" fill="url(#bbtn)"/>
<rect x="713.70" y="996.20" width="139.60" height="35.90" fill="#c4c240" rx="3" stroke="#8c8c70" stroke-width="0.8"/>
<text x="772.85" y="1047.00" font-size="10.5" fill="#2c2c2c" textLength="20.50" lengthAdjust="spacingAndGlyphs" font-weight="bold" >80%</text>
<path d="M859.9 1053V995a4 4 0 0 1 4-4H1005.9a4 4 0 0 1 4 4V1053Z" fill="url(#bsel)"/>
<rect x="865.50" y="996.20" width="139.60" height="35.90" fill="#c8c600" rx="3" stroke="#8a8a00" stroke-width="0.8"/>
<text x="921.65" y="1047.00" font-size="10.5" fill="#ffffff" textLength="26.50" lengthAdjust="spacingAndGlyphs" font-weight="bold" >100%</text>
<path d="M1493 1053V995a4 4 0 0 1 4-4H1537a4 4 0 0 1 4 4V1053Z" fill="url(#cbtn)"/>
<line x1="1493.00" y1="1008.50" x2="1541.00" y2="1008.50" stroke="#4a4a4a" stroke-width="1" />
<rect x="1493.00" y="1009.00" width="48.00" height="43.00" fill="url(#cb3)"/>
<circle cx="1517.3" cy="999.5" r="7.2" fill="url(#upc)"/>
<path d="M1513.1 1000.8h8.4l-4.2-4.4z" fill="#222"/>
<rect x="1502.5" y="1016.5" width="29" height="29" rx="4" fill="none" stroke="#2a2a2a" stroke-width="2.6"/>
<rect x="1510.20" y="1024.00" width="14.20" height="13.60" fill="url(#blk)"/>
<path d="M1542 1021.3V995a4 4 0 0 1 4-4H1588.3V1021.3Z" fill="url(#cbtn)"/>
<circle cx="1565.2" cy="1005.8" r="10" fill="url(#upc)" opacity="0.8"/>
<rect x="1589.00" y="991.00" width="44.30" height="30.30" fill="url(#cbtn)"/>
<line x1="1588.70" y1="991.00" x2="1588.70" y2="1021.30" stroke="#505050" stroke-width="1" />
<circle cx="1611.2" cy="1005.8" r="10" fill="url(#upc)" opacity="0.8"/>
<rect x="1634.00" y="991.00" width="44.30" height="30.30" fill="url(#cbtn)"/>
<line x1="1633.70" y1="991.00" x2="1633.70" y2="1021.30" stroke="#505050" stroke-width="1" />
<circle cx="1656.2" cy="1005.8" r="10" fill="url(#upc)" opacity="0.8"/>
<rect x="1679.00" y="991.00" width="44.00" height="30.30" fill="url(#cbtn)"/>
<line x1="1678.70" y1="991.00" x2="1678.70" y2="1021.30" stroke="#505050" stroke-width="1" />
<circle cx="1701.0" cy="1005.8" r="10" fill="url(#upc)" opacity="0.8"/>
<rect x="1723.60" y="991.00" width="44.60" height="30.30" fill="url(#cbtn)"/>
<line x1="1723.30" y1="991.00" x2="1723.30" y2="1021.30" stroke="#505050" stroke-width="1" />
<circle cx="1745.9" cy="1005.8" r="10" fill="url(#upc)" opacity="0.8"/>
<rect x="1560.95" y="1001.60" width="8.40" height="8.40" fill="#2a2a2a"/>
<path d="M1607.65 1001v9.6l8.2-4.8z" fill="#2a2a2a"/>
<text x="1649.40" y="1009.50" font-size="10.5" fill="#2a2a2a" textLength="13.50" lengthAdjust="spacingAndGlyphs" font-weight="bold" stroke="#2a2a2a" stroke-width="0.4">[··]</text>
<text x="1694.00" y="1010.50" font-size="15" fill="#2a2a2a" textLength="14.00" lengthAdjust="spacingAndGlyphs" font-weight="bold" font-family="'DejaVu Sans','Liberation Sans',sans-serif" >∞</text>
<path d="M1740.8999999999999 1004.5a5.3 5.3 0 0 1 9.3-2.2" fill="none" stroke="#2a2a2a" stroke-width="2.2"/>
<path d="M1751.6999999999998 999.2v5h-5z" fill="#2a2a2a"/>
<path d="M1750.8999999999999 1007.2a5.3 5.3 0 0 1-9.3 2.2" fill="none" stroke="#2a2a2a" stroke-width="2.2"/>
<path d="M1740.1 1012.5v-5h5z" fill="#2a2a2a"/>
<rect x="1768.60" y="991.00" width="50.00" height="30.30" fill="url(#dz)"/>
<circle cx="1791.4" cy="1005.6" r="10" fill="#2f2f2f"/>
<path d="M1542 1053V1026a4 4 0 0 1 4-4H1678.3V1053Z" fill="url(#bn)"/>
<path d="M1679 1053V1022H1812a4 4 0 0 1 4 4V1053Z" fill="url(#bn)"/>
<line x1="1541.70" y1="1021.60" x2="1814.00" y2="1021.60" stroke="#3e3e3e" stroke-width="1" />
<circle cx="1572.8" cy="1037.6" r="9.5" fill="url(#upc)" opacity="0.9"/>
<circle cx="1785.7" cy="1037.6" r="9.5" fill="url(#upc)" opacity="0.9"/>
<text x="1568.30" y="1042.50" font-size="16" fill="#2a2a2a" textLength="9.00" lengthAdjust="spacingAndGlyphs" >«</text>
<text x="1781.20" y="1042.50" font-size="16" fill="#2a2a2a" textLength="9.00" lengthAdjust="spacingAndGlyphs" >»</text>
<text x="1599.70" y="1045.50" font-size="22.5" fill="#2a2a2a" textLength="50.50" lengthAdjust="spacingAndGlyphs" font-family="'DejaVu Sans','Liberation Sans',sans-serif" stroke="#2a2a2a" stroke-width="0.7">Back</text>
<text x="1705.80" y="1045.50" font-size="22.5" fill="#2a2a2a" textLength="52.50" lengthAdjust="spacingAndGlyphs" font-family="'DejaVu Sans','Liberation Sans',sans-serif" stroke="#2a2a2a" stroke-width="0.7">Next</text>
</svg>
</body></html>
